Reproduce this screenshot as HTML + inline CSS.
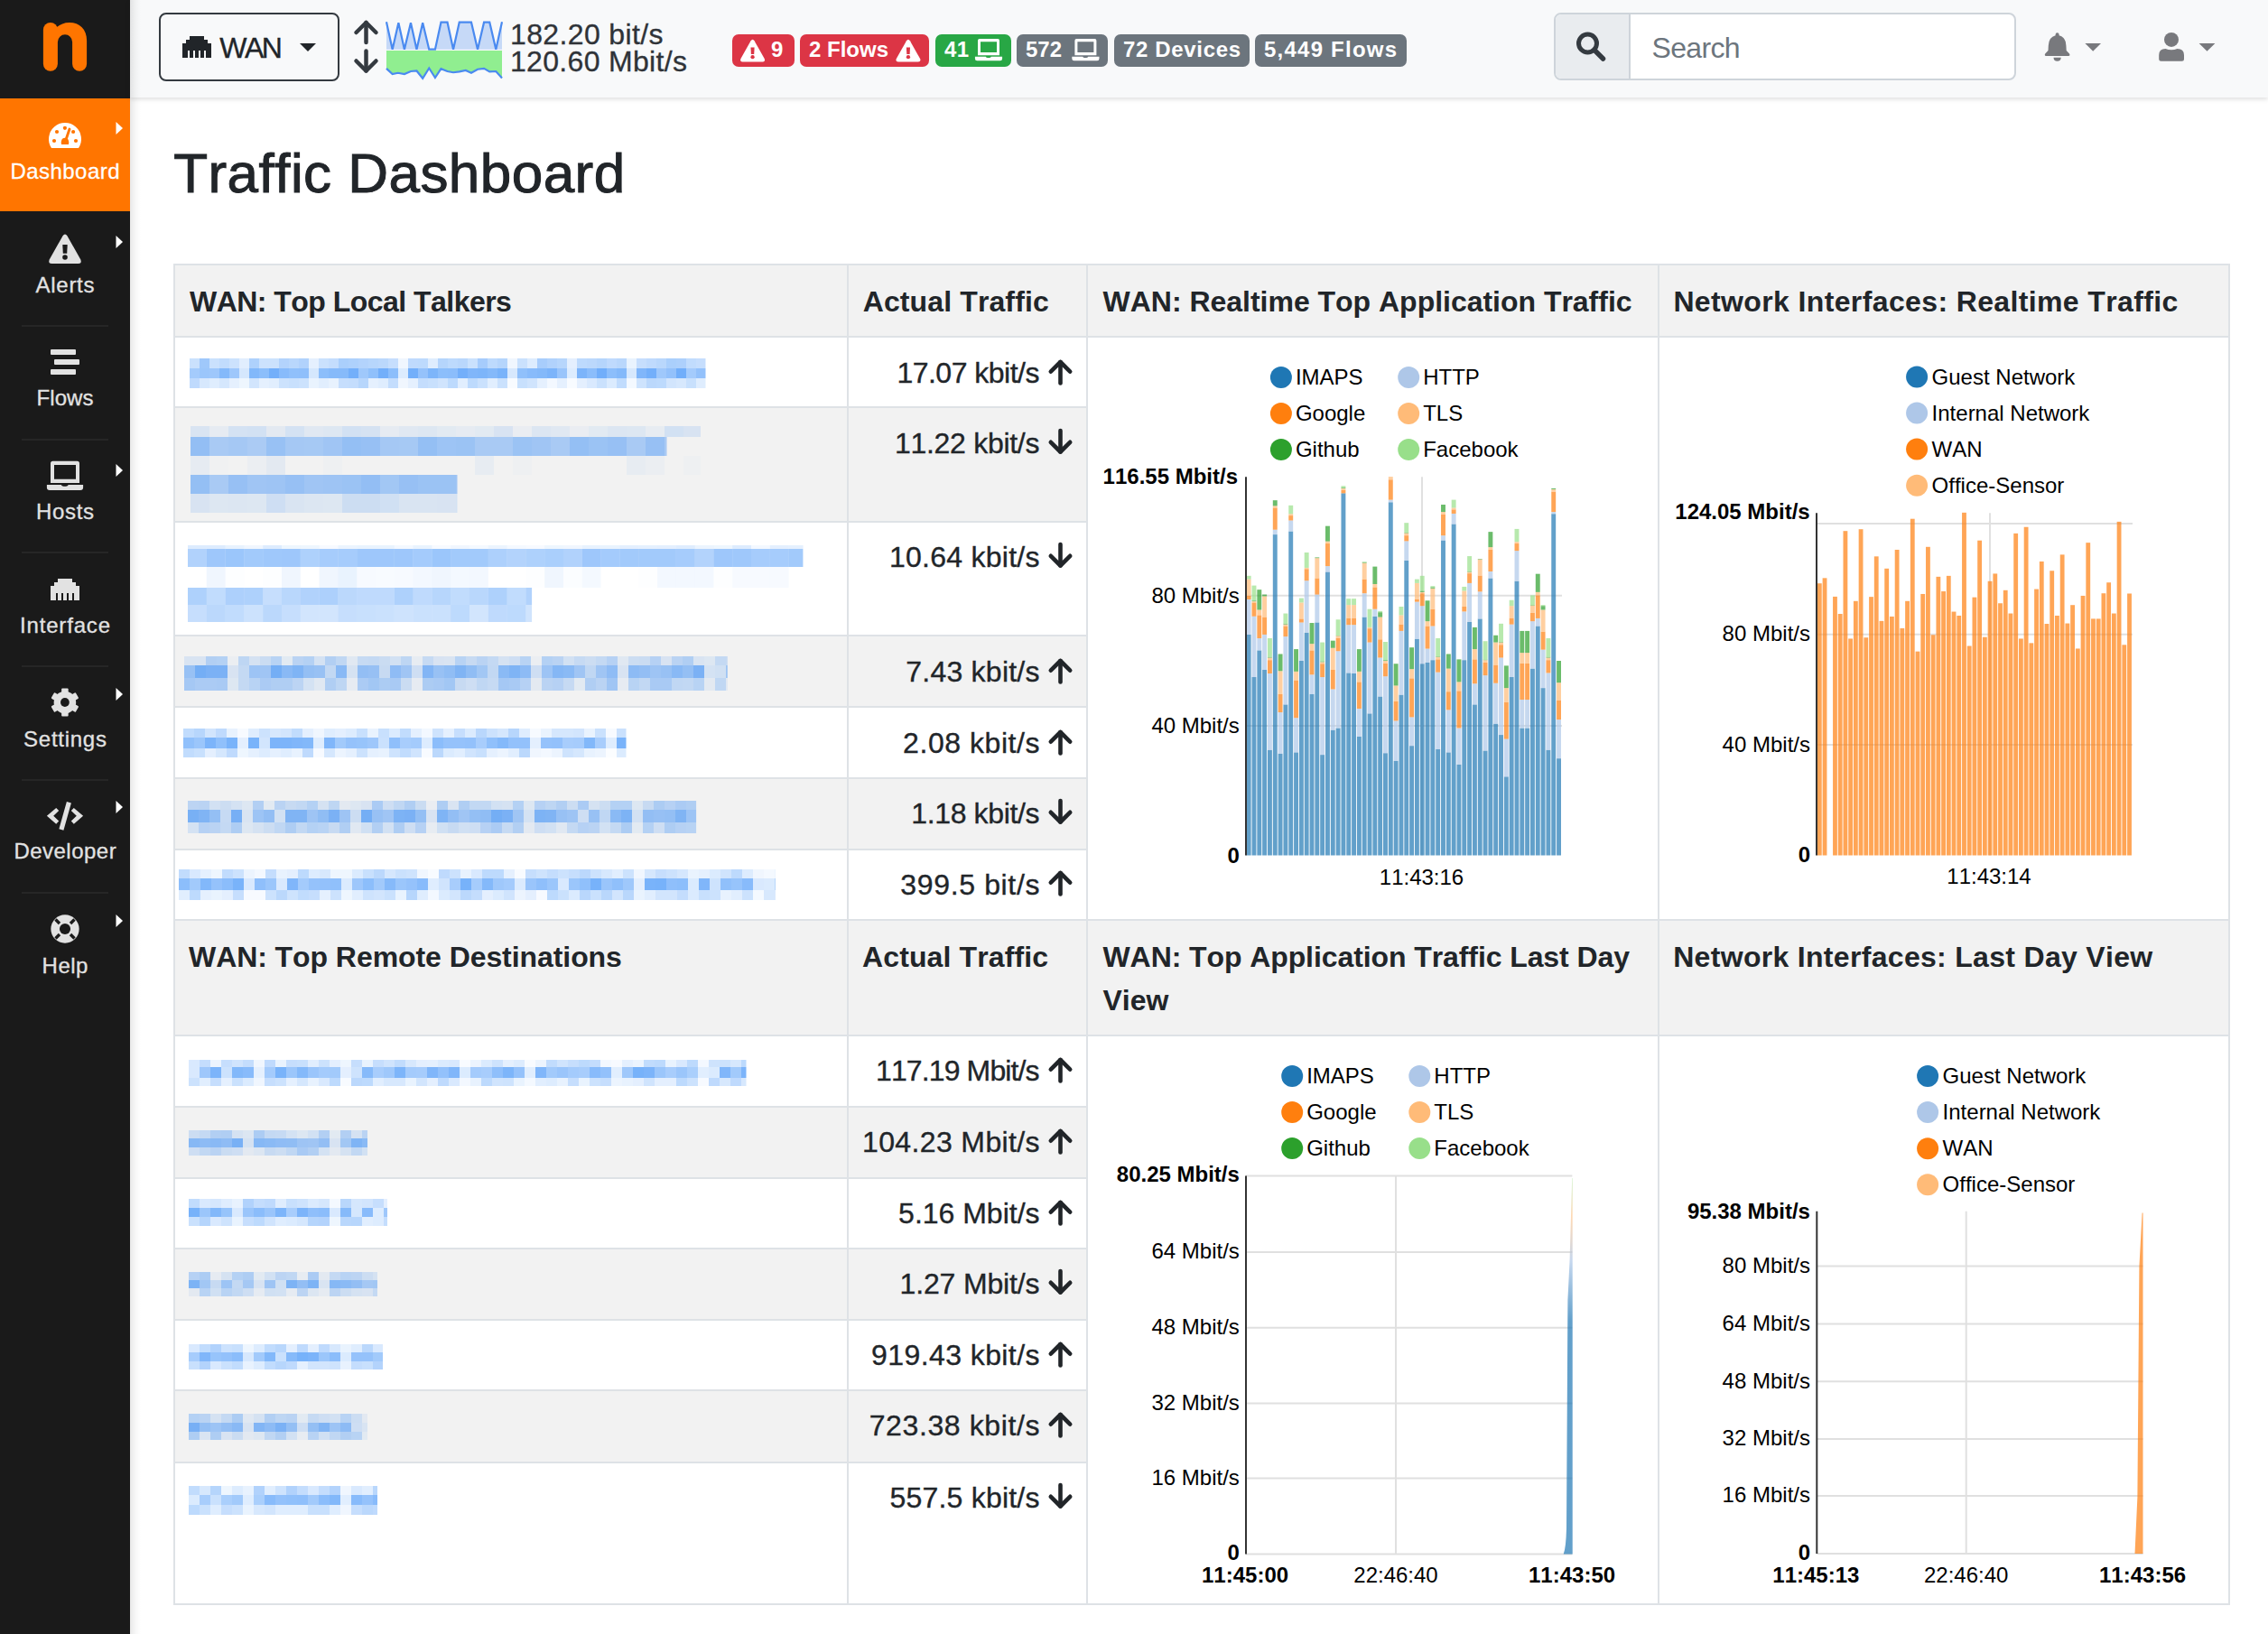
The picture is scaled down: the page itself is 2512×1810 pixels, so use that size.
<!DOCTYPE html><html><head><meta charset="utf-8"><title>Traffic Dashboard</title><style>html,body{margin:0;padding:0;width:2512px;height:1810px;overflow:hidden;background:#fff;}body{position:relative;font-family:"Liberation Sans",sans-serif;}.t{position:absolute;white-space:nowrap;font-kerning:none;}.r{position:absolute;box-sizing:content-box;}svg.r{overflow:visible;}</style></head><body>
<div class="r" style="left:0px;top:0px;width:144px;height:1810px;background:#1a1a1a;"></div>
<svg class="r" style="left:0;top:0" width="144" height="108" viewBox="0 0 144 108"><rect x="47.9" y="24.9" width="16" height="53.9" rx="8" fill="#ff7500"/><path d="M62.9 46.4 L63.9 46.4 A8 8 0 0 1 80.1 46.4 L80.1 70.8 A8 8 0 0 0 96.1 70.8 L96.1 45 C96.1 32 88 24.9 77 24.9 C71 24.9 66.5 27 63.3 29.8 L62.9 30 Z" fill="#ff7500"/></svg>
<div class="r" style="left:0px;top:109px;width:144px;height:125px;background:#ff7500;"></div>
<div class="t" style="left:11.5px;top:178.4px;font-size:24px;line-height:24px;color:#ffffff;letter-spacing:0.45px;-webkit-text-stroke:0.3px #ffffff">Dashboard</div>
<div class="t" style="left:39.5px;top:303.6px;font-size:24px;line-height:24px;color:#e2e2e2;letter-spacing:0.73px;-webkit-text-stroke:0.3px #e2e2e2">Alerts</div>
<div class="t" style="left:40.6px;top:429.3px;font-size:24px;line-height:24px;color:#e2e2e2;letter-spacing:0.03px;-webkit-text-stroke:0.3px #e2e2e2">Flows</div>
<div class="t" style="left:40.0px;top:554.6px;font-size:24px;line-height:24px;color:#e2e2e2;letter-spacing:0.66px;-webkit-text-stroke:0.3px #e2e2e2">Hosts</div>
<div class="t" style="left:22.0px;top:680.6px;font-size:24px;line-height:24px;color:#e2e2e2;letter-spacing:0.83px;-webkit-text-stroke:0.3px #e2e2e2">Interface</div>
<div class="t" style="left:26.1px;top:806.6px;font-size:24px;line-height:24px;color:#e2e2e2;letter-spacing:0.73px;-webkit-text-stroke:0.3px #e2e2e2">Settings</div>
<div class="t" style="left:15.4px;top:931.3px;font-size:24px;line-height:24px;color:#e2e2e2;letter-spacing:0.48px;-webkit-text-stroke:0.3px #e2e2e2">Developer</div>
<div class="t" style="left:46.6px;top:1058.2px;font-size:24px;line-height:24px;color:#e2e2e2;letter-spacing:0.48px;-webkit-text-stroke:0.3px #e2e2e2">Help</div>
<div class="r" style="left:24px;top:360px;width:96px;height:2px;background:#262626;"></div>
<div class="r" style="left:24px;top:486px;width:96px;height:2px;background:#262626;"></div>
<div class="r" style="left:24px;top:611px;width:96px;height:2px;background:#262626;"></div>
<div class="r" style="left:24px;top:737px;width:96px;height:2px;background:#262626;"></div>
<div class="r" style="left:24px;top:863px;width:96px;height:2px;background:#262626;"></div>
<div class="r" style="left:24px;top:988px;width:96px;height:2px;background:#262626;"></div>
<svg class="r" style="left:127.5px;top:133.9px" width="10" height="16" viewBox="0 0 10 16"><path d="M0.5 1 L8 8 L0.5 15 Z" fill="#ffffff"/></svg>
<svg class="r" style="left:127.5px;top:260px" width="10" height="16" viewBox="0 0 10 16"><path d="M0.5 1 L8 8 L0.5 15 Z" fill="#ffffff"/></svg>
<svg class="r" style="left:127.5px;top:512.5px" width="10" height="16" viewBox="0 0 10 16"><path d="M0.5 1 L8 8 L0.5 15 Z" fill="#ffffff"/></svg>
<svg class="r" style="left:127.5px;top:760.5px" width="10" height="16" viewBox="0 0 10 16"><path d="M0.5 1 L8 8 L0.5 15 Z" fill="#ffffff"/></svg>
<svg class="r" style="left:127.5px;top:886px" width="10" height="16" viewBox="0 0 10 16"><path d="M0.5 1 L8 8 L0.5 15 Z" fill="#ffffff"/></svg>
<svg class="r" style="left:127.5px;top:1011.5px" width="10" height="16" viewBox="0 0 10 16"><path d="M0.5 1 L8 8 L0.5 15 Z" fill="#ffffff"/></svg>
<svg class="r" style="left:0px;top:120px" width="144" height="60" viewBox="0 0 144 60"><path d="M57 44 A18 18 0 1 1 87 44 Z" fill="#fff"/><g fill="#ff7500"><circle cx="63" cy="26" r="2.1"/><circle cx="71.9" cy="21.8" r="2.1"/><circle cx="81.1" cy="26" r="2.1"/><circle cx="60" cy="36" r="2.1"/><circle cx="84" cy="36" r="2.1"/><line x1="72.6" y1="36" x2="77" y2="23" stroke="#ff7500" stroke-width="2.9" stroke-linecap="round"/><path d="M68 39.9 L76 39.9 Q76.6 37.5 76 36 A4.1 4.1 0 0 0 68 36 Q67.4 37.5 68 39.9 Z"/></g></svg>
<svg class="r" style="left:0px;top:250px" width="144" height="50" viewBox="0 0 144 50"><path d="M69.4 11.5 Q72 7.5 74.6 11.5 L89.3 37.5 Q91 42 86.5 42 L57.5 42 Q53 42 54.7 37.5 Z" fill="#e2e2e2"/><path d="M69.3 21.1 L74.7 21.1 L74.2 30.7 L69.8 30.7 Z" fill="#1a1a1a"/><circle cx="72" cy="35" r="2.8" fill="#1a1a1a"/></svg>
<svg class="r" style="left:0px;top:380px" width="144" height="40" viewBox="0 0 144 40"><g fill="#e2e2e2"><rect x="56" y="7" width="28" height="6" rx="1"/><rect x="60" y="18" width="28" height="6" rx="1"/><rect x="56" y="29" width="28" height="6" rx="1"/></g></svg>
<svg class="r" style="left:0px;top:505px" width="144" height="45" viewBox="0 0 144 45"><path fill-rule="evenodd" fill="#e2e2e2" d="M58.5 5.8 L85.5 5.8 Q88 5.8 88 8.3 L88 29.9 L56 29.9 L56 8.3 Q56 5.8 58.5 5.8 Z M60 10 L60 25.8 L84 25.8 L84 10 Z"/><path fill="#e2e2e2" d="M51.9 31.9 L67.7 31.9 Q68.5 33.7 70.5 33.7 L73 33.7 Q75 33.7 75.8 31.9 L92.1 31.9 L92.1 35 Q92.1 38 89 38 L55 38 Q51.9 38 51.9 35 Z"/></svg>
<svg class="r" style="left:0px;top:630px" width="144" height="45" viewBox="0 0 144 45"><path d="M64.00 11.00 L80.00 11.00 L80.00 15.00 L84.00 15.00 L84.00 19.00 L88.00 19.00 L88.00 35.00 L82.00 35.00 L82.00 27.00 L80.00 27.00 L80.00 35.00 L76.00 35.00 L76.00 27.00 L74.00 27.00 L74.00 35.00 L70.00 35.00 L70.00 27.00 L68.00 27.00 L68.00 35.00 L64.00 35.00 L64.00 27.00 L62.00 27.00 L62.00 35.00 L56.00 35.00 L56.00 19.00 L60.00 19.00 L60.00 15.00 L64.00 15.00 Z" fill="#e2e2e2"/></svg>
<svg class="r" style="left:0px;top:750px" width="144" height="50" viewBox="0 0 144 50"><circle cx="71.9" cy="28" r="12.3" fill="#e2e2e2"/><rect x="68.15" y="12.4" width="7.5" height="15.6" rx="1" fill="#e2e2e2" transform="rotate(0 71.9 28)"/><rect x="68.15" y="12.4" width="7.5" height="15.6" rx="1" fill="#e2e2e2" transform="rotate(60 71.9 28)"/><rect x="68.15" y="12.4" width="7.5" height="15.6" rx="1" fill="#e2e2e2" transform="rotate(120 71.9 28)"/><rect x="68.15" y="12.4" width="7.5" height="15.6" rx="1" fill="#e2e2e2" transform="rotate(180 71.9 28)"/><rect x="68.15" y="12.4" width="7.5" height="15.6" rx="1" fill="#e2e2e2" transform="rotate(240 71.9 28)"/><rect x="68.15" y="12.4" width="7.5" height="15.6" rx="1" fill="#e2e2e2" transform="rotate(300 71.9 28)"/><circle cx="71.9" cy="28" r="4.9" fill="#1a1a1a"/></svg>
<svg class="r" style="left:0px;top:880px" width="144" height="45" viewBox="0 0 144 45"><g fill="#e2e2e2"><path d="M62.2 15 L65.2 18 L59.2 23.8 L65.2 29.6 L62.2 32.8 L51.9 23.8 Z"/><path d="M81.8 15 L78.8 18 L84.8 23.8 L78.8 29.6 L81.8 32.8 L92.1 23.8 Z"/><path d="M73.9 8 L78.9 9.4 L70.4 39.7 L65.4 38.3 Z"/></g></svg>
<svg class="r" style="left:0px;top:1005px" width="144" height="45" viewBox="0 0 144 45"><circle cx="72" cy="24" r="15.65" fill="#e2e2e2"/><circle cx="72" cy="24" r="6.06" fill="#1a1a1a"/><g stroke="#1a1a1a" stroke-width="3.4"><line x1="61.5" y1="13.5" x2="66" y2="18"/><line x1="82.5" y1="13.5" x2="78" y2="18"/><line x1="61.5" y1="34.5" x2="66" y2="30"/><line x1="82.5" y1="34.5" x2="78" y2="30"/></g></svg>
<div class="r" style="left:144px;top:0px;width:2368px;height:108px;background:#f8f9fa;box-shadow:0 2px 5px rgba(0,0,0,0.13)"></div>
<div class="r" style="left:144px;top:0px;width:12px;height:1810px;background:linear-gradient(90deg,rgba(0,0,0,0.09),rgba(0,0,0,0.03) 50%,rgba(0,0,0,0));"></div>
<div class="r" style="left:176px;top:14px;width:196px;height:72px;border:2px solid #343a40;border-radius:8px"></div>
<svg class="r" style="left:0px;top:0px" width="400" height="108" viewBox="0 0 400 108"><path d="M210.00 40.00 L226.00 40.00 L226.00 44.00 L230.00 44.00 L230.00 48.00 L234.00 48.00 L234.00 64.00 L228.00 64.00 L228.00 56.00 L226.00 56.00 L226.00 64.00 L222.00 64.00 L222.00 56.00 L220.00 56.00 L220.00 64.00 L216.00 64.00 L216.00 56.00 L214.00 56.00 L214.00 64.00 L210.00 64.00 L210.00 56.00 L208.00 56.00 L208.00 64.00 L202.00 64.00 L202.00 48.00 L206.00 48.00 L206.00 44.00 L210.00 44.00 Z" fill="#212529"/></svg>
<div class="t" style="left:243.2px;top:37.0px;font-size:32px;line-height:32px;color:#212529;letter-spacing:-2.43px;-webkit-text-stroke:0.35px #212529">WAN</div>
<svg class="r" style="left:0px;top:0px" width="400" height="108" viewBox="0 0 400 108"><path d="M332 48 L350 48 L341 57 Z" fill="#212529"/></svg>
<svg class="r" style="left:380px;top:0px" width="60" height="108" viewBox="0 0 60 108"><g stroke="#343a40" stroke-width="4.5" fill="none" stroke-linecap="round" stroke-linejoin="round"><path d="M25.5 25 L25.5 47"/><path d="M14.5 36 L25.5 25 L36.5 36"/><path d="M25.5 56.5 L25.5 78.5"/><path d="M14.5 67.5 L25.5 78.5 L36.5 67.5"/></g></svg>
<svg class="r" style="left:380px;top:0px" width="180" height="108" viewBox="0 0 180 108"><polygon points="47.97,24.16 54.67,54.67 61.38,25.22 67.90,54.67 74.96,25.22 81.48,54.67 88.18,25.22 95.24,54.67 101.94,54.67 108.47,24.69 115.52,24.69 122.05,54.67 128.75,24.69 141.98,24.69 149.03,54.67 156.08,24.69 162.26,24.69 169.31,54.67 176.01,24.16 176.01,54.67 47.97,54.67" fill="#c6d9f7"/><polyline points="47.97,24.16 54.67,54.67 61.38,25.22 67.90,54.67 74.96,25.22 81.48,54.67 88.18,25.22 95.24,54.67 101.94,54.67 108.47,24.69 115.52,24.69 122.05,54.67 128.75,24.69 141.98,24.69 149.03,54.67 156.08,24.69 162.26,24.69 169.31,54.67 176.01,24.16" fill="none" stroke="#4a8af0" stroke-width="2.2"/><polygon points="47.97,56.08 176.01,56.08 176.01,86.42 169.31,79.01 162.26,79.37 156.08,75.84 149.03,76.72 141.98,80.78 135.80,77.95 128.75,79.37 122.05,80.25 115.52,79.01 108.47,76.19 101.94,86.07 95.24,75.49 88.18,86.77 81.48,78.48 74.96,79.01 67.90,82.01 60.85,80.78 54.67,82.01 47.97,75.84" fill="#90ee90"/><polyline points="47.97,75.84 54.67,82.01 60.85,80.78 67.90,82.01 74.96,79.01 81.48,78.48 88.18,86.77 95.24,75.49 101.94,86.07 108.47,76.19 115.52,79.01 122.05,80.25 128.75,79.37 135.80,77.95 141.98,80.78 149.03,76.72 156.08,75.84 162.26,79.37 169.31,79.01 176.01,86.42" fill="none" stroke="#4a8af0" stroke-width="2.2"/></svg>
<div class="t" style="left:565.0px;top:21.7px;font-size:32px;line-height:32px;color:#2f3338;letter-spacing:0.37px;-webkit-text-stroke:0.3px #2f3338">182.20 bit/s</div>
<div class="t" style="left:565.0px;top:51.6px;font-size:32px;line-height:32px;color:#2f3338;letter-spacing:0.32px;-webkit-text-stroke:0.3px #2f3338">120.60 Mbit/s</div>
<div class="r" style="left:811px;top:38px;width:69px;height:36px;background:#dc3545;border-radius:7px"></div>
<div class="r" style="left:886px;top:38px;width:143px;height:36px;background:#dc3545;border-radius:7px"></div>
<div class="r" style="left:1036px;top:38px;width:84px;height:36px;background:#28a745;border-radius:7px"></div>
<div class="r" style="left:1126px;top:38px;width:101px;height:36px;background:#6c757d;border-radius:7px"></div>
<div class="r" style="left:1234px;top:38px;width:150px;height:36px;background:#6c757d;border-radius:7px"></div>
<div class="r" style="left:1390px;top:38px;width:168px;height:36px;background:#6c757d;border-radius:7px"></div>
<svg class="r" style="left:0px;top:0px" width="1600" height="108" viewBox="0 0 1600 108"><g transform="translate(819.8 43.8) scale(0.76) translate(-53.9 -9.5)"><g fill="#fff"><path d="M69.4 11.5 Q72 7.5 74.6 11.5 L89.3 37.5 Q91 42 86.5 42 L57.5 42 Q53 42 54.7 37.5 Z"/></g><path d="M69.3 21.1 L74.7 21.1 L74.2 30.7 L69.8 30.7 Z" fill="#dc3545"/><circle cx="72" cy="35" r="2.8" fill="#dc3545"/></g><g transform="translate(992.2 43.8) scale(0.76) translate(-53.9 -9.5)"><g fill="#fff"><path d="M69.4 11.5 Q72 7.5 74.6 11.5 L89.3 37.5 Q91 42 86.5 42 L57.5 42 Q53 42 54.7 37.5 Z"/></g><path d="M69.3 21.1 L74.7 21.1 L74.2 30.7 L69.8 30.7 Z" fill="#dc3545"/><circle cx="72" cy="35" r="2.8" fill="#dc3545"/></g><g fill="#fff" transform="translate(1083 43.1) scale(0.75) translate(-56 -5.8)"><path fill-rule="evenodd" d="M58.5 5.8 L85.5 5.8 Q88 5.8 88 8.3 L88 29.9 L56 29.9 L56 8.3 Q56 5.8 58.5 5.8 Z M60 10 L60 25.8 L84 25.8 L84 10 Z"/><path d="M51.9 31.9 L67.7 31.9 Q68.5 33.7 70.5 33.7 L73 33.7 Q75 33.7 75.8 31.9 L92.1 31.9 L92.1 35 Q92.1 38 89 38 L55 38 Q51.9 38 51.9 35 Z"/></g><g fill="#fff" transform="translate(1190.4 43.1) scale(0.75) translate(-56 -5.8)"><path fill-rule="evenodd" d="M58.5 5.8 L85.5 5.8 Q88 5.8 88 8.3 L88 29.9 L56 29.9 L56 8.3 Q56 5.8 58.5 5.8 Z M60 10 L60 25.8 L84 25.8 L84 10 Z"/><path d="M51.9 31.9 L67.7 31.9 Q68.5 33.7 70.5 33.7 L73 33.7 Q75 33.7 75.8 31.9 L92.1 31.9 L92.1 35 Q92.1 38 89 38 L55 38 Q51.9 38 51.9 35 Z"/></g></svg>
<div class="t" style="left:854.0px;top:42.8px;font-size:24px;line-height:24px;color:#fff;font-weight:bold">9</div>
<div class="t" style="left:896.0px;top:42.8px;font-size:24px;line-height:24px;color:#fff;font-weight:bold">2 Flows</div>
<div class="t" style="left:1046.0px;top:42.8px;font-size:24px;line-height:24px;color:#fff;font-weight:bold;letter-spacing:0.30px">41</div>
<div class="t" style="left:1136.0px;top:42.8px;font-size:24px;line-height:24px;color:#fff;font-weight:bold;letter-spacing:-0.02px">572</div>
<div class="t" style="left:1244.0px;top:42.8px;font-size:24px;line-height:24px;color:#fff;font-weight:bold;letter-spacing:0.66px">72 Devices</div>
<div class="t" style="left:1400.0px;top:42.8px;font-size:24px;line-height:24px;color:#fff;font-weight:bold;letter-spacing:1.23px">5,449 Flows</div>
<div class="r" style="left:1721px;top:14px;width:508px;height:71px;border:2px solid #ced4da;border-radius:8px;background:#fff;overflow:hidden"><div class="r" style="left:0;top:0;width:81px;height:71px;background:#e9ecef;border-right:2px solid #ced4da"></div></div>
<svg class="r" style="left:1741px;top:32px" width="45" height="45" viewBox="0 0 45 45"><circle cx="17.5" cy="16" r="10" fill="none" stroke="#343a40" stroke-width="5"/><path d="M25 23.5 L34.5 33" stroke="#343a40" stroke-width="5.5" stroke-linecap="round"/></svg>
<div class="t" style="left:1829.6px;top:37.2px;font-size:32px;line-height:32px;color:#6c757d;letter-spacing:-0.68px">Search</div>
<svg class="r" style="left:2250px;top:25px" width="50" height="50" viewBox="0 0 50 50"><path d="M26.6 13.2 Q26.6 11.2 28.6 11.2 Q30.6 11.2 30.6 13.2 L30.6 14.2 Q38 16 38.4 25.5 L38.7 31 L42 34.6 Q43.2 36.9 41 36.9 L16.2 36.9 Q14 36.9 15.2 34.6 L18.5 31 L18.8 25.5 Q19.2 16 26.6 14.2 Z" fill="#78797d"/><path d="M24.5 38.8 L32.7 38.8 Q32.7 42.7 28.6 42.7 Q24.5 42.7 24.5 38.8 Z" fill="#78797d"/></svg>
<svg class="r" style="left:2300px;top:40px" width="35" height="25" viewBox="0 0 35 25"><path d="M9.4 8 L27 8 L18.2 16.8 Z" fill="#78797d"/></svg>
<svg class="r" style="left:2380px;top:25px" width="50" height="50" viewBox="0 0 50 50"><circle cx="25" cy="18.9" r="8" fill="#78797d"/><path d="M11.2 42.7 L11.2 36 Q11.2 28.9 18.5 28.9 Q21.5 30.2 25 30.2 Q28.5 30.2 31.5 28.9 Q39 28.9 39 36 L39 40.2 Q39 42.7 36.5 42.7 L13.7 42.7 Q11.2 42.7 11.2 40.2 Z" fill="#78797d"/></svg>
<svg class="r" style="left:2427px;top:40px" width="35" height="25" viewBox="0 0 35 25"><path d="M8.6 8 L26.4 8 L17.5 16.8 Z" fill="#78797d"/></svg>
<div class="t" style="left:192.2px;top:161.3px;font-size:62px;line-height:62px;color:#212529;letter-spacing:0.45px;-webkit-text-stroke:1px #212529">Traffic Dashboard</div>
<div class="r" style="left:192px;top:292px;width:2278px;height:80px;background:#f2f2f2;"></div>
<div class="r" style="left:192px;top:1018px;width:2278px;height:128px;background:#f2f2f2;"></div>
<div class="r" style="left:192px;top:450px;width:1011px;height:127px;background:#f2f2f2;"></div>
<div class="r" style="left:192px;top:703px;width:1011px;height:79px;background:#f2f2f2;"></div>
<div class="r" style="left:192px;top:861px;width:1011px;height:79px;background:#f2f2f2;"></div>
<div class="r" style="left:192px;top:1225px;width:1011px;height:79px;background:#f2f2f2;"></div>
<div class="r" style="left:192px;top:1382px;width:1011px;height:79px;background:#f2f2f2;"></div>
<div class="r" style="left:192px;top:1539px;width:1011px;height:80px;background:#f2f2f2;"></div>
<div class="r" style="left:192px;top:292px;width:2278px;height:2px;background:#dee2e6;"></div>
<div class="r" style="left:192px;top:372px;width:2278px;height:2px;background:#dee2e6;"></div>
<div class="r" style="left:192px;top:450px;width:1013px;height:2px;background:#dee2e6;"></div>
<div class="r" style="left:192px;top:577px;width:1013px;height:2px;background:#dee2e6;"></div>
<div class="r" style="left:192px;top:703px;width:1013px;height:2px;background:#dee2e6;"></div>
<div class="r" style="left:192px;top:782px;width:1013px;height:2px;background:#dee2e6;"></div>
<div class="r" style="left:192px;top:861px;width:1013px;height:2px;background:#dee2e6;"></div>
<div class="r" style="left:192px;top:940px;width:1013px;height:2px;background:#dee2e6;"></div>
<div class="r" style="left:192px;top:1018px;width:2278px;height:2px;background:#dee2e6;"></div>
<div class="r" style="left:192px;top:1146px;width:2278px;height:2px;background:#dee2e6;"></div>
<div class="r" style="left:192px;top:1225px;width:1013px;height:2px;background:#dee2e6;"></div>
<div class="r" style="left:192px;top:1304px;width:1013px;height:2px;background:#dee2e6;"></div>
<div class="r" style="left:192px;top:1382px;width:1013px;height:2px;background:#dee2e6;"></div>
<div class="r" style="left:192px;top:1461px;width:1013px;height:2px;background:#dee2e6;"></div>
<div class="r" style="left:192px;top:1539px;width:1013px;height:2px;background:#dee2e6;"></div>
<div class="r" style="left:192px;top:1619px;width:1013px;height:2px;background:#dee2e6;"></div>
<div class="r" style="left:192px;top:1776px;width:2278px;height:2px;background:#dee2e6;"></div>
<div class="r" style="left:192px;top:292px;width:2px;height:1486px;background:#dee2e6;"></div>
<div class="r" style="left:938px;top:292px;width:2px;height:1486px;background:#dee2e6;"></div>
<div class="r" style="left:1203px;top:292px;width:2px;height:1486px;background:#dee2e6;"></div>
<div class="r" style="left:1836px;top:292px;width:2px;height:1486px;background:#dee2e6;"></div>
<div class="r" style="left:2468px;top:292px;width:2px;height:1486px;background:#dee2e6;"></div>
<div class="t" style="left:210.0px;top:318.1px;font-size:32px;line-height:32px;color:#212529;font-weight:bold;letter-spacing:-0.53px">WAN: Top Local Talkers</div>
<div class="t" style="left:955.7px;top:317.6px;font-size:32px;line-height:32px;color:#212529;font-weight:bold;letter-spacing:0.12px">Actual Traffic</div>
<div class="t" style="left:1221.6px;top:317.8px;font-size:32px;line-height:32px;color:#212529;font-weight:bold;letter-spacing:-0.02px">WAN: Realtime Top Application Traffic</div>
<div class="t" style="left:1853.4px;top:317.8px;font-size:32px;line-height:32px;color:#212529;font-weight:bold;letter-spacing:0.37px">Network Interfaces: Realtime Traffic</div>
<div class="t" style="left:209.0px;top:1044.4px;font-size:32px;line-height:32px;color:#212529;font-weight:bold;letter-spacing:-0.07px">WAN: Top Remote Destinations</div>
<div class="t" style="left:955.0px;top:1044.4px;font-size:32px;line-height:32px;color:#212529;font-weight:bold;letter-spacing:0.12px">Actual Traffic</div>
<div class="t" style="left:1221.5px;top:1043.8px;font-size:32px;line-height:32px;color:#212529;font-weight:bold;letter-spacing:-0.09px">WAN: Top Application Traffic Last Day</div>
<div class="t" style="left:1221.5px;top:1091.7px;font-size:32px;line-height:32px;color:#212529;font-weight:bold">View</div>
<div class="t" style="left:1853.2px;top:1044.0px;font-size:32px;line-height:32px;color:#212529;font-weight:bold;letter-spacing:0.31px">Network Interfaces: Last Day View</div>
<div class="t" style="left:993.4px;top:397.0px;font-size:32px;line-height:32px;color:#212529;letter-spacing:-0.51px;-webkit-text-stroke:0.35px #212529">17.07 kbit/s</div>
<svg class="r" style="left:1161px;top:397.7px" width="27" height="29" viewBox="0 0 27 29"><g stroke="#212529" stroke-width="4.6" fill="none" stroke-linecap="round" stroke-linejoin="round"><path d="M13.5 3 L13.5 26.5"/><path d="M2.8 13.7 L13.5 3 L24.2 13.7"/></g></svg>
<div class="t" style="left:990.9px;top:474.8px;font-size:32px;line-height:32px;color:#212529;letter-spacing:-0.28px;-webkit-text-stroke:0.35px #212529">11.22 kbit/s</div>
<svg class="r" style="left:1161px;top:475.5px" width="27" height="29" viewBox="0 0 27 29"><g stroke="#212529" stroke-width="4.6" fill="none" stroke-linecap="round" stroke-linejoin="round"><path d="M13.5 1 L13.5 24.5"/><path d="M2.8 13.8 L13.5 24.5 L24.2 13.8"/></g></svg>
<div class="t" style="left:985.0px;top:601.3px;font-size:32px;line-height:32px;color:#212529;letter-spacing:0.26px;-webkit-text-stroke:0.35px #212529">10.64 kbit/s</div>
<svg class="r" style="left:1161px;top:602px" width="27" height="29" viewBox="0 0 27 29"><g stroke="#212529" stroke-width="4.6" fill="none" stroke-linecap="round" stroke-linejoin="round"><path d="M13.5 1 L13.5 24.5"/><path d="M2.8 13.8 L13.5 24.5 L24.2 13.8"/></g></svg>
<div class="t" style="left:1003.3px;top:728.0px;font-size:32px;line-height:32px;color:#212529;letter-spacing:0.23px;-webkit-text-stroke:0.35px #212529">7.43 kbit/s</div>
<svg class="r" style="left:1161px;top:728.7px" width="27" height="29" viewBox="0 0 27 29"><g stroke="#212529" stroke-width="4.6" fill="none" stroke-linecap="round" stroke-linejoin="round"><path d="M13.5 3 L13.5 26.5"/><path d="M2.8 13.7 L13.5 3 L24.2 13.7"/></g></svg>
<div class="t" style="left:1000.1px;top:807.0px;font-size:32px;line-height:32px;color:#212529;letter-spacing:0.55px;-webkit-text-stroke:0.35px #212529">2.08 kbit/s</div>
<svg class="r" style="left:1161px;top:807.7px" width="27" height="29" viewBox="0 0 27 29"><g stroke="#212529" stroke-width="4.6" fill="none" stroke-linecap="round" stroke-linejoin="round"><path d="M13.5 3 L13.5 26.5"/><path d="M2.8 13.7 L13.5 3 L24.2 13.7"/></g></svg>
<div class="t" style="left:1009.3px;top:885.2px;font-size:32px;line-height:32px;color:#212529;letter-spacing:-0.37px;-webkit-text-stroke:0.35px #212529">1.18 kbit/s</div>
<svg class="r" style="left:1161px;top:885.9px" width="27" height="29" viewBox="0 0 27 29"><g stroke="#212529" stroke-width="4.6" fill="none" stroke-linecap="round" stroke-linejoin="round"><path d="M13.5 1 L13.5 24.5"/><path d="M2.8 13.8 L13.5 24.5 L24.2 13.8"/></g></svg>
<div class="t" style="left:997.3px;top:963.6px;font-size:32px;line-height:32px;color:#212529;letter-spacing:0.65px;-webkit-text-stroke:0.35px #212529">399.5 bit/s</div>
<svg class="r" style="left:1161px;top:964.3px" width="27" height="29" viewBox="0 0 27 29"><g stroke="#212529" stroke-width="4.6" fill="none" stroke-linecap="round" stroke-linejoin="round"><path d="M13.5 3 L13.5 26.5"/><path d="M2.8 13.7 L13.5 3 L24.2 13.7"/></g></svg>
<div class="t" style="left:970.0px;top:1170.2px;font-size:32px;line-height:32px;color:#212529;letter-spacing:-0.88px;-webkit-text-stroke:0.35px #212529">117.19 Mbit/s</div>
<svg class="r" style="left:1161px;top:1170.9px" width="27" height="29" viewBox="0 0 27 29"><g stroke="#212529" stroke-width="4.6" fill="none" stroke-linecap="round" stroke-linejoin="round"><path d="M13.5 3 L13.5 26.5"/><path d="M2.8 13.7 L13.5 3 L24.2 13.7"/></g></svg>
<div class="t" style="left:955.0px;top:1249.3px;font-size:32px;line-height:32px;color:#212529;letter-spacing:0.37px;-webkit-text-stroke:0.35px #212529">104.23 Mbit/s</div>
<svg class="r" style="left:1161px;top:1250px" width="27" height="29" viewBox="0 0 27 29"><g stroke="#212529" stroke-width="4.6" fill="none" stroke-linecap="round" stroke-linejoin="round"><path d="M13.5 3 L13.5 26.5"/><path d="M2.8 13.7 L13.5 3 L24.2 13.7"/></g></svg>
<div class="t" style="left:995.1px;top:1328.3px;font-size:32px;line-height:32px;color:#212529;letter-spacing:-0.01px;-webkit-text-stroke:0.35px #212529">5.16 Mbit/s</div>
<svg class="r" style="left:1161px;top:1329px" width="27" height="29" viewBox="0 0 27 29"><g stroke="#212529" stroke-width="4.6" fill="none" stroke-linecap="round" stroke-linejoin="round"><path d="M13.5 3 L13.5 26.5"/><path d="M2.8 13.7 L13.5 3 L24.2 13.7"/></g></svg>
<div class="t" style="left:996.5px;top:1406.3px;font-size:32px;line-height:32px;color:#212529;letter-spacing:-0.15px;-webkit-text-stroke:0.35px #212529">1.27 Mbit/s</div>
<svg class="r" style="left:1161px;top:1407px" width="27" height="29" viewBox="0 0 27 29"><g stroke="#212529" stroke-width="4.6" fill="none" stroke-linecap="round" stroke-linejoin="round"><path d="M13.5 1 L13.5 24.5"/><path d="M2.8 13.8 L13.5 24.5 L24.2 13.8"/></g></svg>
<div class="t" style="left:965.1px;top:1485.3px;font-size:32px;line-height:32px;color:#212529;letter-spacing:0.41px;-webkit-text-stroke:0.35px #212529">919.43 kbit/s</div>
<svg class="r" style="left:1161px;top:1486px" width="27" height="29" viewBox="0 0 27 29"><g stroke="#212529" stroke-width="4.6" fill="none" stroke-linecap="round" stroke-linejoin="round"><path d="M13.5 3 L13.5 26.5"/><path d="M2.8 13.7 L13.5 3 L24.2 13.7"/></g></svg>
<div class="t" style="left:962.7px;top:1563.3px;font-size:32px;line-height:32px;color:#212529;letter-spacing:0.61px;-webkit-text-stroke:0.35px #212529">723.38 kbit/s</div>
<svg class="r" style="left:1161px;top:1564px" width="27" height="29" viewBox="0 0 27 29"><g stroke="#212529" stroke-width="4.6" fill="none" stroke-linecap="round" stroke-linejoin="round"><path d="M13.5 3 L13.5 26.5"/><path d="M2.8 13.7 L13.5 3 L24.2 13.7"/></g></svg>
<div class="t" style="left:985.4px;top:1643.3px;font-size:32px;line-height:32px;color:#212529;letter-spacing:0.22px;-webkit-text-stroke:0.35px #212529">557.5 kbit/s</div>
<svg class="r" style="left:1161px;top:1644px" width="27" height="29" viewBox="0 0 27 29"><g stroke="#212529" stroke-width="4.6" fill="none" stroke-linecap="round" stroke-linejoin="round"><path d="M13.5 1 L13.5 24.5"/><path d="M2.8 13.8 L13.5 24.5 L24.2 13.8"/></g></svg>
<svg class="r" style="left:209.5px;top:397px" width="572.5" height="34"><g fill="#2b86f7"><rect x="0.0" y="0.0" width="11.0" height="11.0" fill-opacity="0.25"/><rect x="11.0" y="0.0" width="11.0" height="11.0" fill-opacity="0.45"/><rect x="22.0" y="0.0" width="11.0" height="11.0" fill-opacity="0.25"/><rect x="33.0" y="0.0" width="11.0" height="11.0" fill-opacity="0.29"/><rect x="44.0" y="0.0" width="11.0" height="11.0" fill-opacity="0.24"/><rect x="55.0" y="0.0" width="11.0" height="11.0" fill-opacity="0.14"/><rect x="66.0" y="0.0" width="11.0" height="11.0" fill-opacity="0.38"/><rect x="77.0" y="0.0" width="11.0" height="11.0" fill-opacity="0.24"/><rect x="88.0" y="0.0" width="11.0" height="11.0" fill-opacity="0.24"/><rect x="99.0" y="0.0" width="11.0" height="11.0" fill-opacity="0.36"/><rect x="110.0" y="0.0" width="11.0" height="11.0" fill-opacity="0.33"/><rect x="121.0" y="0.0" width="11.0" height="11.0" fill-opacity="0.37"/><rect x="132.0" y="0.0" width="11.0" height="11.0" fill-opacity="0.12"/><rect x="143.0" y="0.0" width="11.0" height="11.0" fill-opacity="0.25"/><rect x="154.0" y="0.0" width="11.0" height="11.0" fill-opacity="0.28"/><rect x="165.0" y="0.0" width="11.0" height="11.0" fill-opacity="0.40"/><rect x="176.0" y="0.0" width="11.0" height="11.0" fill-opacity="0.38"/><rect x="187.0" y="0.0" width="11.0" height="11.0" fill-opacity="0.36"/><rect x="198.0" y="0.0" width="11.0" height="11.0" fill-opacity="0.34"/><rect x="209.0" y="0.0" width="11.0" height="11.0" fill-opacity="0.32"/><rect x="220.0" y="0.0" width="11.0" height="11.0" fill-opacity="0.27"/><rect x="231.0" y="0.0" width="11.0" height="11.0" fill-opacity="0.07"/><rect x="242.0" y="0.0" width="11.0" height="11.0" fill-opacity="0.30"/><rect x="253.0" y="0.0" width="11.0" height="11.0" fill-opacity="0.31"/><rect x="264.0" y="0.0" width="11.0" height="11.0" fill-opacity="0.15"/><rect x="275.0" y="0.0" width="11.0" height="11.0" fill-opacity="0.35"/><rect x="286.0" y="0.0" width="11.0" height="11.0" fill-opacity="0.31"/><rect x="297.0" y="0.0" width="11.0" height="11.0" fill-opacity="0.33"/><rect x="308.0" y="0.0" width="11.0" height="11.0" fill-opacity="0.25"/><rect x="319.0" y="0.0" width="11.0" height="11.0" fill-opacity="0.42"/><rect x="330.0" y="0.0" width="11.0" height="11.0" fill-opacity="0.31"/><rect x="341.0" y="0.0" width="11.0" height="11.0" fill-opacity="0.35"/><rect x="352.0" y="0.0" width="11.0" height="11.0" fill-opacity="0.07"/><rect x="363.0" y="0.0" width="11.0" height="11.0" fill-opacity="0.25"/><rect x="374.0" y="0.0" width="11.0" height="11.0" fill-opacity="0.16"/><rect x="385.0" y="0.0" width="11.0" height="11.0" fill-opacity="0.41"/><rect x="396.0" y="0.0" width="11.0" height="11.0" fill-opacity="0.37"/><rect x="407.0" y="0.0" width="11.0" height="11.0" fill-opacity="0.34"/><rect x="418.0" y="0.0" width="11.0" height="11.0" fill-opacity="0.13"/><rect x="429.0" y="0.0" width="11.0" height="11.0" fill-opacity="0.31"/><rect x="440.0" y="0.0" width="11.0" height="11.0" fill-opacity="0.32"/><rect x="451.0" y="0.0" width="11.0" height="11.0" fill-opacity="0.35"/><rect x="462.0" y="0.0" width="11.0" height="11.0" fill-opacity="0.30"/><rect x="473.0" y="0.0" width="11.0" height="11.0" fill-opacity="0.33"/><rect x="484.0" y="0.0" width="11.0" height="11.0" fill-opacity="0.10"/><rect x="495.0" y="0.0" width="11.0" height="11.0" fill-opacity="0.27"/><rect x="506.0" y="0.0" width="11.0" height="11.0" fill-opacity="0.30"/><rect x="517.0" y="0.0" width="11.0" height="11.0" fill-opacity="0.33"/><rect x="528.0" y="0.0" width="11.0" height="11.0" fill-opacity="0.40"/><rect x="539.0" y="0.0" width="11.0" height="11.0" fill-opacity="0.39"/><rect x="550.0" y="0.0" width="11.0" height="11.0" fill-opacity="0.29"/><rect x="561.0" y="0.0" width="10.5" height="11.0" fill-opacity="0.27"/><rect x="0.0" y="11.0" width="11.0" height="11.0" fill-opacity="0.43"/><rect x="11.0" y="11.0" width="11.0" height="11.0" fill-opacity="0.47"/><rect x="22.0" y="11.0" width="11.0" height="11.0" fill-opacity="0.46"/><rect x="33.0" y="11.0" width="11.0" height="11.0" fill-opacity="0.58"/><rect x="44.0" y="11.0" width="11.0" height="11.0" fill-opacity="0.46"/><rect x="55.0" y="11.0" width="11.0" height="11.0" fill-opacity="0.20"/><rect x="66.0" y="11.0" width="11.0" height="11.0" fill-opacity="0.59"/><rect x="77.0" y="11.0" width="11.0" height="11.0" fill-opacity="0.54"/><rect x="88.0" y="11.0" width="11.0" height="11.0" fill-opacity="0.66"/><rect x="99.0" y="11.0" width="11.0" height="11.0" fill-opacity="0.56"/><rect x="110.0" y="11.0" width="11.0" height="11.0" fill-opacity="0.52"/><rect x="121.0" y="11.0" width="11.0" height="11.0" fill-opacity="0.53"/><rect x="132.0" y="11.0" width="11.0" height="11.0" fill-opacity="0.20"/><rect x="143.0" y="11.0" width="11.0" height="11.0" fill-opacity="0.54"/><rect x="154.0" y="11.0" width="11.0" height="11.0" fill-opacity="0.57"/><rect x="165.0" y="11.0" width="11.0" height="11.0" fill-opacity="0.57"/><rect x="176.0" y="11.0" width="11.0" height="11.0" fill-opacity="0.66"/><rect x="187.0" y="11.0" width="11.0" height="11.0" fill-opacity="0.45"/><rect x="198.0" y="11.0" width="11.0" height="11.0" fill-opacity="0.52"/><rect x="209.0" y="11.0" width="11.0" height="11.0" fill-opacity="0.66"/><rect x="220.0" y="11.0" width="11.0" height="11.0" fill-opacity="0.54"/><rect x="231.0" y="11.0" width="11.0" height="11.0" fill-opacity="0.16"/><rect x="242.0" y="11.0" width="11.0" height="11.0" fill-opacity="0.66"/><rect x="253.0" y="11.0" width="11.0" height="11.0" fill-opacity="0.50"/><rect x="264.0" y="11.0" width="11.0" height="11.0" fill-opacity="0.61"/><rect x="275.0" y="11.0" width="11.0" height="11.0" fill-opacity="0.54"/><rect x="286.0" y="11.0" width="11.0" height="11.0" fill-opacity="0.55"/><rect x="297.0" y="11.0" width="11.0" height="11.0" fill-opacity="0.66"/><rect x="308.0" y="11.0" width="11.0" height="11.0" fill-opacity="0.60"/><rect x="319.0" y="11.0" width="11.0" height="11.0" fill-opacity="0.61"/><rect x="330.0" y="11.0" width="11.0" height="11.0" fill-opacity="0.58"/><rect x="341.0" y="11.0" width="11.0" height="11.0" fill-opacity="0.63"/><rect x="352.0" y="11.0" width="11.0" height="11.0" fill-opacity="0.19"/><rect x="363.0" y="11.0" width="11.0" height="11.0" fill-opacity="0.52"/><rect x="374.0" y="11.0" width="11.0" height="11.0" fill-opacity="0.56"/><rect x="385.0" y="11.0" width="11.0" height="11.0" fill-opacity="0.58"/><rect x="396.0" y="11.0" width="11.0" height="11.0" fill-opacity="0.62"/><rect x="407.0" y="11.0" width="11.0" height="11.0" fill-opacity="0.48"/><rect x="418.0" y="11.0" width="11.0" height="11.0" fill-opacity="0.16"/><rect x="429.0" y="11.0" width="11.0" height="11.0" fill-opacity="0.62"/><rect x="440.0" y="11.0" width="11.0" height="11.0" fill-opacity="0.55"/><rect x="451.0" y="11.0" width="11.0" height="11.0" fill-opacity="0.67"/><rect x="462.0" y="11.0" width="11.0" height="11.0" fill-opacity="0.54"/><rect x="473.0" y="11.0" width="11.0" height="11.0" fill-opacity="0.58"/><rect x="484.0" y="11.0" width="11.0" height="11.0" fill-opacity="0.19"/><rect x="495.0" y="11.0" width="11.0" height="11.0" fill-opacity="0.60"/><rect x="506.0" y="11.0" width="11.0" height="11.0" fill-opacity="0.66"/><rect x="517.0" y="11.0" width="11.0" height="11.0" fill-opacity="0.45"/><rect x="528.0" y="11.0" width="11.0" height="11.0" fill-opacity="0.51"/><rect x="539.0" y="11.0" width="11.0" height="11.0" fill-opacity="0.67"/><rect x="550.0" y="11.0" width="11.0" height="11.0" fill-opacity="0.43"/><rect x="561.0" y="11.0" width="10.5" height="11.0" fill-opacity="0.51"/><rect x="0.0" y="22.0" width="11.0" height="11.0" fill-opacity="0.30"/><rect x="11.0" y="22.0" width="11.0" height="11.0" fill-opacity="0.19"/><rect x="22.0" y="22.0" width="11.0" height="11.0" fill-opacity="0.15"/><rect x="33.0" y="22.0" width="11.0" height="11.0" fill-opacity="0.20"/><rect x="44.0" y="22.0" width="11.0" height="11.0" fill-opacity="0.12"/><rect x="55.0" y="22.0" width="11.0" height="11.0" fill-opacity="0.08"/><rect x="66.0" y="22.0" width="11.0" height="11.0" fill-opacity="0.21"/><rect x="77.0" y="22.0" width="11.0" height="11.0" fill-opacity="0.12"/><rect x="88.0" y="22.0" width="11.0" height="11.0" fill-opacity="0.14"/><rect x="99.0" y="22.0" width="11.0" height="11.0" fill-opacity="0.24"/><rect x="110.0" y="22.0" width="11.0" height="11.0" fill-opacity="0.26"/><rect x="121.0" y="22.0" width="11.0" height="11.0" fill-opacity="0.24"/><rect x="132.0" y="22.0" width="11.0" height="11.0" fill-opacity="0.10"/><rect x="143.0" y="22.0" width="11.0" height="11.0" fill-opacity="0.14"/><rect x="154.0" y="22.0" width="11.0" height="11.0" fill-opacity="0.11"/><rect x="165.0" y="22.0" width="11.0" height="11.0" fill-opacity="0.27"/><rect x="176.0" y="22.0" width="11.0" height="11.0" fill-opacity="0.28"/><rect x="187.0" y="22.0" width="11.0" height="11.0" fill-opacity="0.34"/><rect x="198.0" y="22.0" width="11.0" height="11.0" fill-opacity="0.12"/><rect x="209.0" y="22.0" width="11.0" height="11.0" fill-opacity="0.15"/><rect x="220.0" y="22.0" width="11.0" height="11.0" fill-opacity="0.28"/><rect x="231.0" y="22.0" width="11.0" height="11.0" fill-opacity="0.07"/><rect x="242.0" y="22.0" width="11.0" height="11.0" fill-opacity="0.12"/><rect x="253.0" y="22.0" width="11.0" height="11.0" fill-opacity="0.28"/><rect x="264.0" y="22.0" width="11.0" height="11.0" fill-opacity="0.26"/><rect x="275.0" y="22.0" width="11.0" height="11.0" fill-opacity="0.22"/><rect x="286.0" y="22.0" width="11.0" height="11.0" fill-opacity="0.31"/><rect x="297.0" y="22.0" width="11.0" height="11.0" fill-opacity="0.14"/><rect x="308.0" y="22.0" width="11.0" height="11.0" fill-opacity="0.31"/><rect x="319.0" y="22.0" width="11.0" height="11.0" fill-opacity="0.25"/><rect x="330.0" y="22.0" width="11.0" height="11.0" fill-opacity="0.14"/><rect x="341.0" y="22.0" width="11.0" height="11.0" fill-opacity="0.25"/><rect x="352.0" y="22.0" width="11.0" height="11.0" fill-opacity="0.03"/><rect x="363.0" y="22.0" width="11.0" height="11.0" fill-opacity="0.26"/><rect x="374.0" y="22.0" width="11.0" height="11.0" fill-opacity="0.22"/><rect x="385.0" y="22.0" width="11.0" height="11.0" fill-opacity="0.12"/><rect x="396.0" y="22.0" width="11.0" height="11.0" fill-opacity="0.06"/><rect x="407.0" y="22.0" width="11.0" height="11.0" fill-opacity="0.12"/><rect x="418.0" y="22.0" width="11.0" height="11.0" fill-opacity="0.03"/><rect x="429.0" y="22.0" width="11.0" height="11.0" fill-opacity="0.13"/><rect x="440.0" y="22.0" width="11.0" height="11.0" fill-opacity="0.18"/><rect x="451.0" y="22.0" width="11.0" height="11.0" fill-opacity="0.25"/><rect x="462.0" y="22.0" width="11.0" height="11.0" fill-opacity="0.17"/><rect x="473.0" y="22.0" width="11.0" height="11.0" fill-opacity="0.29"/><rect x="484.0" y="22.0" width="11.0" height="11.0" fill-opacity="0.05"/><rect x="495.0" y="22.0" width="11.0" height="11.0" fill-opacity="0.23"/><rect x="506.0" y="22.0" width="11.0" height="11.0" fill-opacity="0.32"/><rect x="517.0" y="22.0" width="11.0" height="11.0" fill-opacity="0.31"/><rect x="528.0" y="22.0" width="11.0" height="11.0" fill-opacity="0.21"/><rect x="539.0" y="22.0" width="11.0" height="11.0" fill-opacity="0.19"/><rect x="550.0" y="22.0" width="11.0" height="11.0" fill-opacity="0.26"/><rect x="561.0" y="22.0" width="10.5" height="11.0" fill-opacity="0.15"/></g></svg>
<svg class="r" style="left:211px;top:472px" width="566" height="97"><g fill="#2b86f7"><rect x="0.0" y="0.0" width="21.0" height="12.0" fill-opacity="0.12"/><rect x="21.0" y="0.0" width="21.0" height="12.0" fill-opacity="0.06"/><rect x="42.0" y="0.0" width="21.0" height="12.0" fill-opacity="0.15"/><rect x="63.0" y="0.0" width="21.0" height="12.0" fill-opacity="0.16"/><rect x="84.0" y="0.0" width="21.0" height="12.0" fill-opacity="0.07"/><rect x="105.0" y="0.0" width="21.0" height="12.0" fill-opacity="0.15"/><rect x="126.0" y="0.0" width="21.0" height="12.0" fill-opacity="0.09"/><rect x="147.0" y="0.0" width="21.0" height="12.0" fill-opacity="0.10"/><rect x="168.0" y="0.0" width="21.0" height="12.0" fill-opacity="0.16"/><rect x="189.0" y="0.0" width="21.0" height="12.0" fill-opacity="0.14"/><rect x="210.0" y="0.0" width="21.0" height="12.0" fill-opacity="0.06"/><rect x="231.0" y="0.0" width="21.0" height="12.0" fill-opacity="0.09"/><rect x="252.0" y="0.0" width="21.0" height="12.0" fill-opacity="0.10"/><rect x="273.0" y="0.0" width="21.0" height="12.0" fill-opacity="0.08"/><rect x="294.0" y="0.0" width="21.0" height="12.0" fill-opacity="0.06"/><rect x="315.0" y="0.0" width="21.0" height="12.0" fill-opacity="0.08"/><rect x="336.0" y="0.0" width="21.0" height="12.0" fill-opacity="0.13"/><rect x="357.0" y="0.0" width="21.0" height="12.0" fill-opacity="0.04"/><rect x="378.0" y="0.0" width="21.0" height="12.0" fill-opacity="0.11"/><rect x="399.0" y="0.0" width="21.0" height="12.0" fill-opacity="0.09"/><rect x="420.0" y="0.0" width="21.0" height="12.0" fill-opacity="0.04"/><rect x="441.0" y="0.0" width="21.0" height="12.0" fill-opacity="0.08"/><rect x="462.0" y="0.0" width="21.0" height="12.0" fill-opacity="0.11"/><rect x="483.0" y="0.0" width="21.0" height="12.0" fill-opacity="0.10"/><rect x="504.0" y="0.0" width="21.0" height="12.0" fill-opacity="0.05"/><rect x="525.0" y="0.0" width="21.0" height="12.0" fill-opacity="0.16"/><rect x="546.0" y="0.0" width="19.0" height="12.0" fill-opacity="0.13"/><rect x="0.0" y="12.0" width="21.0" height="21.0" fill-opacity="0.48"/><rect x="21.0" y="12.0" width="21.0" height="21.0" fill-opacity="0.37"/><rect x="42.0" y="12.0" width="21.0" height="21.0" fill-opacity="0.39"/><rect x="63.0" y="12.0" width="21.0" height="21.0" fill-opacity="0.36"/><rect x="84.0" y="12.0" width="21.0" height="21.0" fill-opacity="0.45"/><rect x="105.0" y="12.0" width="21.0" height="21.0" fill-opacity="0.39"/><rect x="126.0" y="12.0" width="21.0" height="21.0" fill-opacity="0.38"/><rect x="147.0" y="12.0" width="21.0" height="21.0" fill-opacity="0.41"/><rect x="168.0" y="12.0" width="21.0" height="21.0" fill-opacity="0.47"/><rect x="189.0" y="12.0" width="21.0" height="21.0" fill-opacity="0.46"/><rect x="210.0" y="12.0" width="21.0" height="21.0" fill-opacity="0.39"/><rect x="231.0" y="12.0" width="21.0" height="21.0" fill-opacity="0.38"/><rect x="252.0" y="12.0" width="21.0" height="21.0" fill-opacity="0.47"/><rect x="273.0" y="12.0" width="21.0" height="21.0" fill-opacity="0.43"/><rect x="294.0" y="12.0" width="21.0" height="21.0" fill-opacity="0.44"/><rect x="315.0" y="12.0" width="21.0" height="21.0" fill-opacity="0.37"/><rect x="336.0" y="12.0" width="21.0" height="21.0" fill-opacity="0.37"/><rect x="357.0" y="12.0" width="21.0" height="21.0" fill-opacity="0.44"/><rect x="378.0" y="12.0" width="21.0" height="21.0" fill-opacity="0.41"/><rect x="399.0" y="12.0" width="21.0" height="21.0" fill-opacity="0.37"/><rect x="420.0" y="12.0" width="21.0" height="21.0" fill-opacity="0.47"/><rect x="441.0" y="12.0" width="21.0" height="21.0" fill-opacity="0.44"/><rect x="462.0" y="12.0" width="21.0" height="21.0" fill-opacity="0.46"/><rect x="483.0" y="12.0" width="21.0" height="21.0" fill-opacity="0.37"/><rect x="504.0" y="12.0" width="21.0" height="21.0" fill-opacity="0.46"/><rect x="525.0" y="12.0" width="2.5" height="21.0" fill-opacity="0.37"/><rect x="0.0" y="33.0" width="21.0" height="21.0" fill-opacity="0.06"/><rect x="21.0" y="33.0" width="21.0" height="21.0" fill-opacity="0.01"/><rect x="42.0" y="33.0" width="21.0" height="21.0" fill-opacity="0.00"/><rect x="63.0" y="33.0" width="21.0" height="21.0" fill-opacity="0.03"/><rect x="84.0" y="33.0" width="21.0" height="21.0" fill-opacity="0.07"/><rect x="105.0" y="33.0" width="21.0" height="21.0" fill-opacity="0.00"/><rect x="126.0" y="33.0" width="21.0" height="21.0" fill-opacity="0.00"/><rect x="147.0" y="33.0" width="21.0" height="21.0" fill-opacity="0.02"/><rect x="168.0" y="33.0" width="21.0" height="21.0" fill-opacity="0.00"/><rect x="189.0" y="33.0" width="21.0" height="21.0" fill-opacity="0.00"/><rect x="210.0" y="33.0" width="21.0" height="21.0" fill-opacity="0.00"/><rect x="231.0" y="33.0" width="21.0" height="21.0" fill-opacity="0.00"/><rect x="252.0" y="33.0" width="21.0" height="21.0" fill-opacity="0.00"/><rect x="273.0" y="33.0" width="21.0" height="21.0" fill-opacity="0.00"/><rect x="294.0" y="33.0" width="21.0" height="21.0" fill-opacity="0.00"/><rect x="315.0" y="33.0" width="21.0" height="21.0" fill-opacity="0.05"/><rect x="336.0" y="33.0" width="21.0" height="21.0" fill-opacity="0.00"/><rect x="357.0" y="33.0" width="21.0" height="21.0" fill-opacity="0.02"/><rect x="378.0" y="33.0" width="21.0" height="21.0" fill-opacity="0.00"/><rect x="399.0" y="33.0" width="21.0" height="21.0" fill-opacity="0.00"/><rect x="420.0" y="33.0" width="21.0" height="21.0" fill-opacity="0.00"/><rect x="441.0" y="33.0" width="21.0" height="21.0" fill-opacity="0.00"/><rect x="462.0" y="33.0" width="21.0" height="21.0" fill-opacity="0.00"/><rect x="483.0" y="33.0" width="21.0" height="21.0" fill-opacity="0.05"/><rect x="504.0" y="33.0" width="21.0" height="21.0" fill-opacity="0.03"/><rect x="525.0" y="33.0" width="21.0" height="21.0" fill-opacity="0.00"/><rect x="546.0" y="33.0" width="19.0" height="21.0" fill-opacity="0.02"/><rect x="0.0" y="54.0" width="21.0" height="21.0" fill-opacity="0.47"/><rect x="21.0" y="54.0" width="21.0" height="21.0" fill-opacity="0.37"/><rect x="42.0" y="54.0" width="21.0" height="21.0" fill-opacity="0.46"/><rect x="63.0" y="54.0" width="21.0" height="21.0" fill-opacity="0.41"/><rect x="84.0" y="54.0" width="21.0" height="21.0" fill-opacity="0.42"/><rect x="105.0" y="54.0" width="21.0" height="21.0" fill-opacity="0.46"/><rect x="126.0" y="54.0" width="21.0" height="21.0" fill-opacity="0.41"/><rect x="147.0" y="54.0" width="21.0" height="21.0" fill-opacity="0.42"/><rect x="168.0" y="54.0" width="21.0" height="21.0" fill-opacity="0.44"/><rect x="189.0" y="54.0" width="21.0" height="21.0" fill-opacity="0.48"/><rect x="210.0" y="54.0" width="21.0" height="21.0" fill-opacity="0.40"/><rect x="231.0" y="54.0" width="21.0" height="21.0" fill-opacity="0.46"/><rect x="252.0" y="54.0" width="21.0" height="21.0" fill-opacity="0.44"/><rect x="273.0" y="54.0" width="21.0" height="21.0" fill-opacity="0.44"/><rect x="294.0" y="54.0" width="1.5" height="21.0" fill-opacity="0.41"/><rect x="0.0" y="75.0" width="21.0" height="21.0" fill-opacity="0.13"/><rect x="21.0" y="75.0" width="21.0" height="21.0" fill-opacity="0.10"/><rect x="42.0" y="75.0" width="21.0" height="21.0" fill-opacity="0.11"/><rect x="63.0" y="75.0" width="21.0" height="21.0" fill-opacity="0.10"/><rect x="84.0" y="75.0" width="21.0" height="21.0" fill-opacity="0.18"/><rect x="105.0" y="75.0" width="21.0" height="21.0" fill-opacity="0.12"/><rect x="126.0" y="75.0" width="21.0" height="21.0" fill-opacity="0.11"/><rect x="147.0" y="75.0" width="21.0" height="21.0" fill-opacity="0.10"/><rect x="168.0" y="75.0" width="21.0" height="21.0" fill-opacity="0.19"/><rect x="189.0" y="75.0" width="21.0" height="21.0" fill-opacity="0.19"/><rect x="210.0" y="75.0" width="21.0" height="21.0" fill-opacity="0.17"/><rect x="231.0" y="75.0" width="21.0" height="21.0" fill-opacity="0.12"/><rect x="252.0" y="75.0" width="21.0" height="21.0" fill-opacity="0.12"/><rect x="273.0" y="75.0" width="21.0" height="21.0" fill-opacity="0.13"/><rect x="294.0" y="75.0" width="1.5" height="21.0" fill-opacity="0.15"/></g></svg>
<svg class="r" style="left:208.4px;top:604px" width="682.6" height="86"><g fill="#2b86f7"><rect x="0.0" y="0.0" width="20.8" height="4.0" fill-opacity="0.16"/><rect x="20.8" y="0.0" width="20.8" height="4.0" fill-opacity="0.16"/><rect x="41.6" y="0.0" width="20.8" height="4.0" fill-opacity="0.11"/><rect x="62.4" y="0.0" width="20.8" height="4.0" fill-opacity="0.07"/><rect x="83.2" y="0.0" width="20.8" height="4.0" fill-opacity="0.16"/><rect x="104.0" y="0.0" width="20.8" height="4.0" fill-opacity="0.08"/><rect x="124.8" y="0.0" width="20.8" height="4.0" fill-opacity="0.08"/><rect x="145.6" y="0.0" width="20.8" height="4.0" fill-opacity="0.04"/><rect x="166.4" y="0.0" width="20.8" height="4.0" fill-opacity="0.09"/><rect x="187.2" y="0.0" width="20.8" height="4.0" fill-opacity="0.10"/><rect x="208.0" y="0.0" width="20.8" height="4.0" fill-opacity="0.10"/><rect x="228.8" y="0.0" width="20.8" height="4.0" fill-opacity="0.06"/><rect x="249.6" y="0.0" width="20.8" height="4.0" fill-opacity="0.10"/><rect x="270.4" y="0.0" width="20.8" height="4.0" fill-opacity="0.04"/><rect x="291.2" y="0.0" width="20.8" height="4.0" fill-opacity="0.07"/><rect x="312.0" y="0.0" width="20.8" height="4.0" fill-opacity="0.05"/><rect x="332.8" y="0.0" width="20.8" height="4.0" fill-opacity="0.09"/><rect x="353.6" y="0.0" width="20.8" height="4.0" fill-opacity="0.05"/><rect x="374.4" y="0.0" width="20.8" height="4.0" fill-opacity="0.04"/><rect x="395.2" y="0.0" width="20.8" height="4.0" fill-opacity="0.08"/><rect x="416.0" y="0.0" width="20.8" height="4.0" fill-opacity="0.07"/><rect x="436.8" y="0.0" width="20.8" height="4.0" fill-opacity="0.11"/><rect x="457.6" y="0.0" width="20.8" height="4.0" fill-opacity="0.10"/><rect x="478.4" y="0.0" width="20.8" height="4.0" fill-opacity="0.13"/><rect x="499.2" y="0.0" width="20.8" height="4.0" fill-opacity="0.12"/><rect x="520.0" y="0.0" width="20.8" height="4.0" fill-opacity="0.13"/><rect x="540.8" y="0.0" width="20.8" height="4.0" fill-opacity="0.15"/><rect x="561.6" y="0.0" width="20.8" height="4.0" fill-opacity="0.09"/><rect x="582.4" y="0.0" width="20.8" height="4.0" fill-opacity="0.08"/><rect x="603.2" y="0.0" width="20.8" height="4.0" fill-opacity="0.16"/><rect x="624.0" y="0.0" width="20.8" height="4.0" fill-opacity="0.06"/><rect x="644.8" y="0.0" width="20.8" height="4.0" fill-opacity="0.13"/><rect x="665.6" y="0.0" width="16.0" height="4.0" fill-opacity="0.12"/><rect x="0.0" y="4.0" width="20.8" height="20.0" fill-opacity="0.37"/><rect x="20.8" y="4.0" width="20.8" height="20.0" fill-opacity="0.46"/><rect x="41.6" y="4.0" width="20.8" height="20.0" fill-opacity="0.47"/><rect x="62.4" y="4.0" width="20.8" height="20.0" fill-opacity="0.44"/><rect x="83.2" y="4.0" width="20.8" height="20.0" fill-opacity="0.45"/><rect x="104.0" y="4.0" width="20.8" height="20.0" fill-opacity="0.46"/><rect x="124.8" y="4.0" width="20.8" height="20.0" fill-opacity="0.38"/><rect x="145.6" y="4.0" width="20.8" height="20.0" fill-opacity="0.42"/><rect x="166.4" y="4.0" width="20.8" height="20.0" fill-opacity="0.42"/><rect x="187.2" y="4.0" width="20.8" height="20.0" fill-opacity="0.46"/><rect x="208.0" y="4.0" width="20.8" height="20.0" fill-opacity="0.46"/><rect x="228.8" y="4.0" width="20.8" height="20.0" fill-opacity="0.46"/><rect x="249.6" y="4.0" width="20.8" height="20.0" fill-opacity="0.43"/><rect x="270.4" y="4.0" width="20.8" height="20.0" fill-opacity="0.47"/><rect x="291.2" y="4.0" width="20.8" height="20.0" fill-opacity="0.44"/><rect x="312.0" y="4.0" width="20.8" height="20.0" fill-opacity="0.44"/><rect x="332.8" y="4.0" width="20.8" height="20.0" fill-opacity="0.39"/><rect x="353.6" y="4.0" width="20.8" height="20.0" fill-opacity="0.36"/><rect x="374.4" y="4.0" width="20.8" height="20.0" fill-opacity="0.38"/><rect x="395.2" y="4.0" width="20.8" height="20.0" fill-opacity="0.40"/><rect x="416.0" y="4.0" width="20.8" height="20.0" fill-opacity="0.37"/><rect x="436.8" y="4.0" width="20.8" height="20.0" fill-opacity="0.46"/><rect x="457.6" y="4.0" width="20.8" height="20.0" fill-opacity="0.43"/><rect x="478.4" y="4.0" width="20.8" height="20.0" fill-opacity="0.44"/><rect x="499.2" y="4.0" width="20.8" height="20.0" fill-opacity="0.44"/><rect x="520.0" y="4.0" width="20.8" height="20.0" fill-opacity="0.44"/><rect x="540.8" y="4.0" width="20.8" height="20.0" fill-opacity="0.42"/><rect x="561.6" y="4.0" width="20.8" height="20.0" fill-opacity="0.36"/><rect x="582.4" y="4.0" width="20.8" height="20.0" fill-opacity="0.46"/><rect x="603.2" y="4.0" width="20.8" height="20.0" fill-opacity="0.45"/><rect x="624.0" y="4.0" width="20.8" height="20.0" fill-opacity="0.42"/><rect x="644.8" y="4.0" width="20.8" height="20.0" fill-opacity="0.42"/><rect x="665.6" y="4.0" width="15.8" height="20.0" fill-opacity="0.44"/><rect x="0.0" y="24.0" width="20.8" height="23.0" fill-opacity="0.00"/><rect x="20.8" y="24.0" width="20.8" height="23.0" fill-opacity="0.07"/><rect x="41.6" y="24.0" width="20.8" height="23.0" fill-opacity="0.01"/><rect x="62.4" y="24.0" width="20.8" height="23.0" fill-opacity="0.00"/><rect x="83.2" y="24.0" width="20.8" height="23.0" fill-opacity="0.01"/><rect x="104.0" y="24.0" width="20.8" height="23.0" fill-opacity="0.07"/><rect x="124.8" y="24.0" width="20.8" height="23.0" fill-opacity="0.00"/><rect x="145.6" y="24.0" width="20.8" height="23.0" fill-opacity="0.07"/><rect x="166.4" y="24.0" width="20.8" height="23.0" fill-opacity="0.10"/><rect x="187.2" y="24.0" width="20.8" height="23.0" fill-opacity="0.04"/><rect x="208.0" y="24.0" width="20.8" height="23.0" fill-opacity="0.03"/><rect x="228.8" y="24.0" width="20.8" height="23.0" fill-opacity="0.04"/><rect x="249.6" y="24.0" width="20.8" height="23.0" fill-opacity="0.06"/><rect x="270.4" y="24.0" width="20.8" height="23.0" fill-opacity="0.07"/><rect x="291.2" y="24.0" width="20.8" height="23.0" fill-opacity="0.05"/><rect x="312.0" y="24.0" width="20.8" height="23.0" fill-opacity="0.06"/><rect x="332.8" y="24.0" width="20.8" height="23.0" fill-opacity="0.00"/><rect x="353.6" y="24.0" width="20.8" height="23.0" fill-opacity="0.00"/><rect x="374.4" y="24.0" width="20.8" height="23.0" fill-opacity="0.01"/><rect x="395.2" y="24.0" width="20.8" height="23.0" fill-opacity="0.07"/><rect x="416.0" y="24.0" width="20.8" height="23.0" fill-opacity="0.02"/><rect x="436.8" y="24.0" width="20.8" height="23.0" fill-opacity="0.05"/><rect x="457.6" y="24.0" width="20.8" height="23.0" fill-opacity="0.00"/><rect x="478.4" y="24.0" width="20.8" height="23.0" fill-opacity="0.00"/><rect x="499.2" y="24.0" width="20.8" height="23.0" fill-opacity="0.01"/><rect x="520.0" y="24.0" width="20.8" height="23.0" fill-opacity="0.06"/><rect x="540.8" y="24.0" width="20.8" height="23.0" fill-opacity="0.06"/><rect x="561.6" y="24.0" width="20.8" height="23.0" fill-opacity="0.06"/><rect x="582.4" y="24.0" width="20.8" height="23.0" fill-opacity="0.01"/><rect x="603.2" y="24.0" width="20.8" height="23.0" fill-opacity="0.04"/><rect x="624.0" y="24.0" width="20.8" height="23.0" fill-opacity="0.04"/><rect x="644.8" y="24.0" width="20.8" height="23.0" fill-opacity="0.04"/><rect x="665.6" y="24.0" width="16.0" height="23.0" fill-opacity="0.00"/><rect x="0.0" y="47.0" width="20.8" height="19.0" fill-opacity="0.38"/><rect x="20.8" y="47.0" width="20.8" height="19.0" fill-opacity="0.29"/><rect x="41.6" y="47.0" width="20.8" height="19.0" fill-opacity="0.39"/><rect x="62.4" y="47.0" width="20.8" height="19.0" fill-opacity="0.38"/><rect x="83.2" y="47.0" width="20.8" height="19.0" fill-opacity="0.27"/><rect x="104.0" y="47.0" width="20.8" height="19.0" fill-opacity="0.33"/><rect x="124.8" y="47.0" width="20.8" height="19.0" fill-opacity="0.37"/><rect x="145.6" y="47.0" width="20.8" height="19.0" fill-opacity="0.39"/><rect x="166.4" y="47.0" width="20.8" height="19.0" fill-opacity="0.32"/><rect x="187.2" y="47.0" width="20.8" height="19.0" fill-opacity="0.30"/><rect x="208.0" y="47.0" width="20.8" height="19.0" fill-opacity="0.30"/><rect x="228.8" y="47.0" width="20.8" height="19.0" fill-opacity="0.38"/><rect x="249.6" y="47.0" width="20.8" height="19.0" fill-opacity="0.30"/><rect x="270.4" y="47.0" width="20.8" height="19.0" fill-opacity="0.34"/><rect x="291.2" y="47.0" width="20.8" height="19.0" fill-opacity="0.29"/><rect x="312.0" y="47.0" width="20.8" height="19.0" fill-opacity="0.33"/><rect x="332.8" y="47.0" width="20.8" height="19.0" fill-opacity="0.38"/><rect x="353.6" y="47.0" width="20.8" height="19.0" fill-opacity="0.29"/><rect x="374.4" y="47.0" width="6.7" height="19.0" fill-opacity="0.37"/><rect x="0.0" y="66.0" width="20.8" height="19.0" fill-opacity="0.27"/><rect x="20.8" y="66.0" width="20.8" height="19.0" fill-opacity="0.32"/><rect x="41.6" y="66.0" width="20.8" height="19.0" fill-opacity="0.29"/><rect x="62.4" y="66.0" width="20.8" height="19.0" fill-opacity="0.24"/><rect x="83.2" y="66.0" width="20.8" height="19.0" fill-opacity="0.32"/><rect x="104.0" y="66.0" width="20.8" height="19.0" fill-opacity="0.27"/><rect x="124.8" y="66.0" width="20.8" height="19.0" fill-opacity="0.21"/><rect x="145.6" y="66.0" width="20.8" height="19.0" fill-opacity="0.21"/><rect x="166.4" y="66.0" width="20.8" height="19.0" fill-opacity="0.27"/><rect x="187.2" y="66.0" width="20.8" height="19.0" fill-opacity="0.26"/><rect x="208.0" y="66.0" width="20.8" height="19.0" fill-opacity="0.25"/><rect x="228.8" y="66.0" width="20.8" height="19.0" fill-opacity="0.23"/><rect x="249.6" y="66.0" width="20.8" height="19.0" fill-opacity="0.25"/><rect x="270.4" y="66.0" width="20.8" height="19.0" fill-opacity="0.25"/><rect x="291.2" y="66.0" width="20.8" height="19.0" fill-opacity="0.31"/><rect x="312.0" y="66.0" width="20.8" height="19.0" fill-opacity="0.21"/><rect x="332.8" y="66.0" width="20.8" height="19.0" fill-opacity="0.30"/><rect x="353.6" y="66.0" width="20.8" height="19.0" fill-opacity="0.31"/><rect x="374.4" y="66.0" width="6.7" height="19.0" fill-opacity="0.22"/></g></svg>
<svg class="r" style="left:204px;top:726.5px" width="602.8" height="39"><g fill="#2b86f7"><rect x="0.0" y="0.0" width="12.0" height="10.0" fill-opacity="0.12"/><rect x="12.0" y="0.0" width="12.0" height="10.0" fill-opacity="0.12"/><rect x="24.0" y="0.0" width="12.0" height="10.0" fill-opacity="0.32"/><rect x="36.0" y="0.0" width="12.0" height="10.0" fill-opacity="0.31"/><rect x="48.0" y="0.0" width="12.0" height="10.0" fill-opacity="0.03"/><rect x="60.0" y="0.0" width="12.0" height="10.0" fill-opacity="0.26"/><rect x="72.0" y="0.0" width="12.0" height="10.0" fill-opacity="0.14"/><rect x="84.0" y="0.0" width="12.0" height="10.0" fill-opacity="0.20"/><rect x="96.0" y="0.0" width="12.0" height="10.0" fill-opacity="0.29"/><rect x="108.0" y="0.0" width="12.0" height="10.0" fill-opacity="0.08"/><rect x="120.0" y="0.0" width="12.0" height="10.0" fill-opacity="0.28"/><rect x="132.0" y="0.0" width="12.0" height="10.0" fill-opacity="0.31"/><rect x="144.0" y="0.0" width="12.0" height="10.0" fill-opacity="0.15"/><rect x="156.0" y="0.0" width="12.0" height="10.0" fill-opacity="0.32"/><rect x="168.0" y="0.0" width="12.0" height="10.0" fill-opacity="0.25"/><rect x="180.0" y="0.0" width="12.0" height="10.0" fill-opacity="0.09"/><rect x="192.0" y="0.0" width="12.0" height="10.0" fill-opacity="0.22"/><rect x="204.0" y="0.0" width="12.0" height="10.0" fill-opacity="0.23"/><rect x="216.0" y="0.0" width="12.0" height="10.0" fill-opacity="0.20"/><rect x="228.0" y="0.0" width="12.0" height="10.0" fill-opacity="0.16"/><rect x="240.0" y="0.0" width="12.0" height="10.0" fill-opacity="0.26"/><rect x="252.0" y="0.0" width="12.0" height="10.0" fill-opacity="0.05"/><rect x="264.0" y="0.0" width="12.0" height="10.0" fill-opacity="0.22"/><rect x="276.0" y="0.0" width="12.0" height="10.0" fill-opacity="0.13"/><rect x="288.0" y="0.0" width="12.0" height="10.0" fill-opacity="0.12"/><rect x="300.0" y="0.0" width="12.0" height="10.0" fill-opacity="0.29"/><rect x="312.0" y="0.0" width="12.0" height="10.0" fill-opacity="0.21"/><rect x="324.0" y="0.0" width="12.0" height="10.0" fill-opacity="0.28"/><rect x="336.0" y="0.0" width="12.0" height="10.0" fill-opacity="0.23"/><rect x="348.0" y="0.0" width="12.0" height="10.0" fill-opacity="0.14"/><rect x="360.0" y="0.0" width="12.0" height="10.0" fill-opacity="0.18"/><rect x="372.0" y="0.0" width="12.0" height="10.0" fill-opacity="0.29"/><rect x="384.0" y="0.0" width="12.0" height="10.0" fill-opacity="0.03"/><rect x="396.0" y="0.0" width="12.0" height="10.0" fill-opacity="0.31"/><rect x="408.0" y="0.0" width="12.0" height="10.0" fill-opacity="0.28"/><rect x="420.0" y="0.0" width="12.0" height="10.0" fill-opacity="0.16"/><rect x="432.0" y="0.0" width="12.0" height="10.0" fill-opacity="0.22"/><rect x="444.0" y="0.0" width="12.0" height="10.0" fill-opacity="0.19"/><rect x="456.0" y="0.0" width="12.0" height="10.0" fill-opacity="0.23"/><rect x="468.0" y="0.0" width="12.0" height="10.0" fill-opacity="0.30"/><rect x="480.0" y="0.0" width="12.0" height="10.0" fill-opacity="0.09"/><rect x="492.0" y="0.0" width="12.0" height="10.0" fill-opacity="0.19"/><rect x="504.0" y="0.0" width="12.0" height="10.0" fill-opacity="0.20"/><rect x="516.0" y="0.0" width="12.0" height="10.0" fill-opacity="0.30"/><rect x="528.0" y="0.0" width="12.0" height="10.0" fill-opacity="0.13"/><rect x="540.0" y="0.0" width="12.0" height="10.0" fill-opacity="0.28"/><rect x="552.0" y="0.0" width="12.0" height="10.0" fill-opacity="0.33"/><rect x="564.0" y="0.0" width="12.0" height="10.0" fill-opacity="0.12"/><rect x="576.0" y="0.0" width="12.0" height="10.0" fill-opacity="0.10"/><rect x="588.0" y="0.0" width="12.0" height="10.0" fill-opacity="0.23"/><rect x="600.0" y="0.0" width="1.8" height="10.0" fill-opacity="0.21"/><rect x="0.0" y="10.0" width="12.0" height="14.0" fill-opacity="0.45"/><rect x="12.0" y="10.0" width="12.0" height="14.0" fill-opacity="0.63"/><rect x="24.0" y="10.0" width="12.0" height="14.0" fill-opacity="0.60"/><rect x="36.0" y="10.0" width="12.0" height="14.0" fill-opacity="0.60"/><rect x="48.0" y="10.0" width="12.0" height="14.0" fill-opacity="0.13"/><rect x="60.0" y="10.0" width="12.0" height="14.0" fill-opacity="0.23"/><rect x="72.0" y="10.0" width="12.0" height="14.0" fill-opacity="0.43"/><rect x="84.0" y="10.0" width="12.0" height="14.0" fill-opacity="0.41"/><rect x="96.0" y="10.0" width="12.0" height="14.0" fill-opacity="0.63"/><rect x="108.0" y="10.0" width="12.0" height="14.0" fill-opacity="0.53"/><rect x="120.0" y="10.0" width="12.0" height="14.0" fill-opacity="0.58"/><rect x="132.0" y="10.0" width="12.0" height="14.0" fill-opacity="0.47"/><rect x="144.0" y="10.0" width="12.0" height="14.0" fill-opacity="0.45"/><rect x="156.0" y="10.0" width="12.0" height="14.0" fill-opacity="0.24"/><rect x="168.0" y="10.0" width="12.0" height="14.0" fill-opacity="0.53"/><rect x="180.0" y="10.0" width="12.0" height="14.0" fill-opacity="0.14"/><rect x="192.0" y="10.0" width="12.0" height="14.0" fill-opacity="0.48"/><rect x="204.0" y="10.0" width="12.0" height="14.0" fill-opacity="0.46"/><rect x="216.0" y="10.0" width="12.0" height="14.0" fill-opacity="0.21"/><rect x="228.0" y="10.0" width="12.0" height="14.0" fill-opacity="0.50"/><rect x="240.0" y="10.0" width="12.0" height="14.0" fill-opacity="0.41"/><rect x="252.0" y="10.0" width="12.0" height="14.0" fill-opacity="0.18"/><rect x="264.0" y="10.0" width="12.0" height="14.0" fill-opacity="0.56"/><rect x="276.0" y="10.0" width="12.0" height="14.0" fill-opacity="0.45"/><rect x="288.0" y="10.0" width="12.0" height="14.0" fill-opacity="0.49"/><rect x="300.0" y="10.0" width="12.0" height="14.0" fill-opacity="0.57"/><rect x="312.0" y="10.0" width="12.0" height="14.0" fill-opacity="0.49"/><rect x="324.0" y="10.0" width="12.0" height="14.0" fill-opacity="0.40"/><rect x="336.0" y="10.0" width="12.0" height="14.0" fill-opacity="0.24"/><rect x="348.0" y="10.0" width="12.0" height="14.0" fill-opacity="0.52"/><rect x="360.0" y="10.0" width="12.0" height="14.0" fill-opacity="0.58"/><rect x="372.0" y="10.0" width="12.0" height="14.0" fill-opacity="0.51"/><rect x="384.0" y="10.0" width="12.0" height="14.0" fill-opacity="0.18"/><rect x="396.0" y="10.0" width="12.0" height="14.0" fill-opacity="0.43"/><rect x="408.0" y="10.0" width="12.0" height="14.0" fill-opacity="0.55"/><rect x="420.0" y="10.0" width="12.0" height="14.0" fill-opacity="0.52"/><rect x="432.0" y="10.0" width="12.0" height="14.0" fill-opacity="0.41"/><rect x="444.0" y="10.0" width="12.0" height="14.0" fill-opacity="0.25"/><rect x="456.0" y="10.0" width="12.0" height="14.0" fill-opacity="0.41"/><rect x="468.0" y="10.0" width="12.0" height="14.0" fill-opacity="0.50"/><rect x="480.0" y="10.0" width="12.0" height="14.0" fill-opacity="0.13"/><rect x="492.0" y="10.0" width="12.0" height="14.0" fill-opacity="0.51"/><rect x="504.0" y="10.0" width="12.0" height="14.0" fill-opacity="0.48"/><rect x="516.0" y="10.0" width="12.0" height="14.0" fill-opacity="0.42"/><rect x="528.0" y="10.0" width="12.0" height="14.0" fill-opacity="0.45"/><rect x="540.0" y="10.0" width="12.0" height="14.0" fill-opacity="0.53"/><rect x="552.0" y="10.0" width="12.0" height="14.0" fill-opacity="0.47"/><rect x="564.0" y="10.0" width="12.0" height="14.0" fill-opacity="0.60"/><rect x="576.0" y="10.0" width="12.0" height="14.0" fill-opacity="0.15"/><rect x="588.0" y="10.0" width="12.0" height="14.0" fill-opacity="0.17"/><rect x="600.0" y="10.0" width="1.8" height="14.0" fill-opacity="0.42"/><rect x="0.0" y="24.0" width="12.0" height="14.0" fill-opacity="0.39"/><rect x="12.0" y="24.0" width="12.0" height="14.0" fill-opacity="0.36"/><rect x="24.0" y="24.0" width="12.0" height="14.0" fill-opacity="0.36"/><rect x="36.0" y="24.0" width="12.0" height="14.0" fill-opacity="0.37"/><rect x="48.0" y="24.0" width="12.0" height="14.0" fill-opacity="0.10"/><rect x="60.0" y="24.0" width="12.0" height="14.0" fill-opacity="0.23"/><rect x="72.0" y="24.0" width="12.0" height="14.0" fill-opacity="0.29"/><rect x="84.0" y="24.0" width="12.0" height="14.0" fill-opacity="0.36"/><rect x="96.0" y="24.0" width="12.0" height="14.0" fill-opacity="0.33"/><rect x="108.0" y="24.0" width="12.0" height="14.0" fill-opacity="0.33"/><rect x="120.0" y="24.0" width="12.0" height="14.0" fill-opacity="0.27"/><rect x="132.0" y="24.0" width="12.0" height="14.0" fill-opacity="0.15"/><rect x="144.0" y="24.0" width="12.0" height="14.0" fill-opacity="0.09"/><rect x="156.0" y="24.0" width="12.0" height="14.0" fill-opacity="0.33"/><rect x="168.0" y="24.0" width="12.0" height="14.0" fill-opacity="0.26"/><rect x="180.0" y="24.0" width="12.0" height="14.0" fill-opacity="0.06"/><rect x="192.0" y="24.0" width="12.0" height="14.0" fill-opacity="0.36"/><rect x="204.0" y="24.0" width="12.0" height="14.0" fill-opacity="0.40"/><rect x="216.0" y="24.0" width="12.0" height="14.0" fill-opacity="0.35"/><rect x="228.0" y="24.0" width="12.0" height="14.0" fill-opacity="0.37"/><rect x="240.0" y="24.0" width="12.0" height="14.0" fill-opacity="0.20"/><rect x="252.0" y="24.0" width="12.0" height="14.0" fill-opacity="0.06"/><rect x="264.0" y="24.0" width="12.0" height="14.0" fill-opacity="0.35"/><rect x="276.0" y="24.0" width="12.0" height="14.0" fill-opacity="0.37"/><rect x="288.0" y="24.0" width="12.0" height="14.0" fill-opacity="0.40"/><rect x="300.0" y="24.0" width="12.0" height="14.0" fill-opacity="0.21"/><rect x="312.0" y="24.0" width="12.0" height="14.0" fill-opacity="0.18"/><rect x="324.0" y="24.0" width="12.0" height="14.0" fill-opacity="0.25"/><rect x="336.0" y="24.0" width="12.0" height="14.0" fill-opacity="0.22"/><rect x="348.0" y="24.0" width="12.0" height="14.0" fill-opacity="0.39"/><rect x="360.0" y="24.0" width="12.0" height="14.0" fill-opacity="0.37"/><rect x="372.0" y="24.0" width="12.0" height="14.0" fill-opacity="0.30"/><rect x="384.0" y="24.0" width="12.0" height="14.0" fill-opacity="0.07"/><rect x="396.0" y="24.0" width="12.0" height="14.0" fill-opacity="0.28"/><rect x="408.0" y="24.0" width="12.0" height="14.0" fill-opacity="0.30"/><rect x="420.0" y="24.0" width="12.0" height="14.0" fill-opacity="0.22"/><rect x="432.0" y="24.0" width="12.0" height="14.0" fill-opacity="0.08"/><rect x="444.0" y="24.0" width="12.0" height="14.0" fill-opacity="0.33"/><rect x="456.0" y="24.0" width="12.0" height="14.0" fill-opacity="0.28"/><rect x="468.0" y="24.0" width="12.0" height="14.0" fill-opacity="0.41"/><rect x="480.0" y="24.0" width="12.0" height="14.0" fill-opacity="0.06"/><rect x="492.0" y="24.0" width="12.0" height="14.0" fill-opacity="0.29"/><rect x="504.0" y="24.0" width="12.0" height="14.0" fill-opacity="0.24"/><rect x="516.0" y="24.0" width="12.0" height="14.0" fill-opacity="0.37"/><rect x="528.0" y="24.0" width="12.0" height="14.0" fill-opacity="0.37"/><rect x="540.0" y="24.0" width="12.0" height="14.0" fill-opacity="0.25"/><rect x="552.0" y="24.0" width="12.0" height="14.0" fill-opacity="0.24"/><rect x="564.0" y="24.0" width="12.0" height="14.0" fill-opacity="0.29"/><rect x="576.0" y="24.0" width="12.0" height="14.0" fill-opacity="0.07"/><rect x="588.0" y="24.0" width="12.0" height="14.0" fill-opacity="0.25"/><rect x="600.0" y="24.0" width="1.8" height="14.0" fill-opacity="0.09"/></g></svg>
<svg class="r" style="left:203px;top:807px" width="491.5" height="33"><g fill="#2b86f7"><rect x="0.0" y="0.0" width="12.0" height="10.0" fill-opacity="0.29"/><rect x="12.0" y="0.0" width="12.0" height="10.0" fill-opacity="0.34"/><rect x="24.0" y="0.0" width="12.0" height="10.0" fill-opacity="0.21"/><rect x="36.0" y="0.0" width="12.0" height="10.0" fill-opacity="0.30"/><rect x="48.0" y="0.0" width="12.0" height="10.0" fill-opacity="0.11"/><rect x="60.0" y="0.0" width="12.0" height="10.0" fill-opacity="0.04"/><rect x="72.0" y="0.0" width="12.0" height="10.0" fill-opacity="0.15"/><rect x="84.0" y="0.0" width="12.0" height="10.0" fill-opacity="0.24"/><rect x="96.0" y="0.0" width="12.0" height="10.0" fill-opacity="0.19"/><rect x="108.0" y="0.0" width="12.0" height="10.0" fill-opacity="0.21"/><rect x="120.0" y="0.0" width="12.0" height="10.0" fill-opacity="0.29"/><rect x="132.0" y="0.0" width="12.0" height="10.0" fill-opacity="0.13"/><rect x="144.0" y="0.0" width="12.0" height="10.0" fill-opacity="0.07"/><rect x="156.0" y="0.0" width="12.0" height="10.0" fill-opacity="0.15"/><rect x="168.0" y="0.0" width="12.0" height="10.0" fill-opacity="0.13"/><rect x="180.0" y="0.0" width="12.0" height="10.0" fill-opacity="0.16"/><rect x="192.0" y="0.0" width="12.0" height="10.0" fill-opacity="0.26"/><rect x="204.0" y="0.0" width="12.0" height="10.0" fill-opacity="0.10"/><rect x="216.0" y="0.0" width="12.0" height="10.0" fill-opacity="0.26"/><rect x="228.0" y="0.0" width="12.0" height="10.0" fill-opacity="0.17"/><rect x="240.0" y="0.0" width="12.0" height="10.0" fill-opacity="0.29"/><rect x="252.0" y="0.0" width="12.0" height="10.0" fill-opacity="0.12"/><rect x="264.0" y="0.0" width="12.0" height="10.0" fill-opacity="0.06"/><rect x="276.0" y="0.0" width="12.0" height="10.0" fill-opacity="0.23"/><rect x="288.0" y="0.0" width="12.0" height="10.0" fill-opacity="0.12"/><rect x="300.0" y="0.0" width="12.0" height="10.0" fill-opacity="0.27"/><rect x="312.0" y="0.0" width="12.0" height="10.0" fill-opacity="0.17"/><rect x="324.0" y="0.0" width="12.0" height="10.0" fill-opacity="0.33"/><rect x="336.0" y="0.0" width="12.0" height="10.0" fill-opacity="0.24"/><rect x="348.0" y="0.0" width="12.0" height="10.0" fill-opacity="0.20"/><rect x="360.0" y="0.0" width="12.0" height="10.0" fill-opacity="0.34"/><rect x="372.0" y="0.0" width="12.0" height="10.0" fill-opacity="0.15"/><rect x="384.0" y="0.0" width="12.0" height="10.0" fill-opacity="0.04"/><rect x="396.0" y="0.0" width="12.0" height="10.0" fill-opacity="0.10"/><rect x="408.0" y="0.0" width="12.0" height="10.0" fill-opacity="0.20"/><rect x="420.0" y="0.0" width="12.0" height="10.0" fill-opacity="0.20"/><rect x="432.0" y="0.0" width="12.0" height="10.0" fill-opacity="0.21"/><rect x="444.0" y="0.0" width="12.0" height="10.0" fill-opacity="0.10"/><rect x="456.0" y="0.0" width="12.0" height="10.0" fill-opacity="0.25"/><rect x="468.0" y="0.0" width="12.0" height="10.0" fill-opacity="0.04"/><rect x="480.0" y="0.0" width="10.5" height="10.0" fill-opacity="0.25"/><rect x="0.0" y="10.0" width="12.0" height="12.0" fill-opacity="0.52"/><rect x="12.0" y="10.0" width="12.0" height="12.0" fill-opacity="0.47"/><rect x="24.0" y="10.0" width="12.0" height="12.0" fill-opacity="0.62"/><rect x="36.0" y="10.0" width="12.0" height="12.0" fill-opacity="0.52"/><rect x="48.0" y="10.0" width="12.0" height="12.0" fill-opacity="0.63"/><rect x="60.0" y="10.0" width="12.0" height="12.0" fill-opacity="0.13"/><rect x="72.0" y="10.0" width="12.0" height="12.0" fill-opacity="0.63"/><rect x="84.0" y="10.0" width="12.0" height="12.0" fill-opacity="0.21"/><rect x="96.0" y="10.0" width="12.0" height="12.0" fill-opacity="0.62"/><rect x="108.0" y="10.0" width="12.0" height="12.0" fill-opacity="0.62"/><rect x="120.0" y="10.0" width="12.0" height="12.0" fill-opacity="0.60"/><rect x="132.0" y="10.0" width="12.0" height="12.0" fill-opacity="0.59"/><rect x="144.0" y="10.0" width="12.0" height="12.0" fill-opacity="0.15"/><rect x="156.0" y="10.0" width="12.0" height="12.0" fill-opacity="0.60"/><rect x="168.0" y="10.0" width="12.0" height="12.0" fill-opacity="0.44"/><rect x="180.0" y="10.0" width="12.0" height="12.0" fill-opacity="0.50"/><rect x="192.0" y="10.0" width="12.0" height="12.0" fill-opacity="0.49"/><rect x="204.0" y="10.0" width="12.0" height="12.0" fill-opacity="0.46"/><rect x="216.0" y="10.0" width="12.0" height="12.0" fill-opacity="0.25"/><rect x="228.0" y="10.0" width="12.0" height="12.0" fill-opacity="0.53"/><rect x="240.0" y="10.0" width="12.0" height="12.0" fill-opacity="0.41"/><rect x="252.0" y="10.0" width="12.0" height="12.0" fill-opacity="0.43"/><rect x="264.0" y="10.0" width="12.0" height="12.0" fill-opacity="0.16"/><rect x="276.0" y="10.0" width="12.0" height="12.0" fill-opacity="0.55"/><rect x="288.0" y="10.0" width="12.0" height="12.0" fill-opacity="0.50"/><rect x="300.0" y="10.0" width="12.0" height="12.0" fill-opacity="0.50"/><rect x="312.0" y="10.0" width="12.0" height="12.0" fill-opacity="0.51"/><rect x="324.0" y="10.0" width="12.0" height="12.0" fill-opacity="0.41"/><rect x="336.0" y="10.0" width="12.0" height="12.0" fill-opacity="0.52"/><rect x="348.0" y="10.0" width="12.0" height="12.0" fill-opacity="0.58"/><rect x="360.0" y="10.0" width="12.0" height="12.0" fill-opacity="0.51"/><rect x="372.0" y="10.0" width="12.0" height="12.0" fill-opacity="0.51"/><rect x="384.0" y="10.0" width="12.0" height="12.0" fill-opacity="0.13"/><rect x="396.0" y="10.0" width="12.0" height="12.0" fill-opacity="0.50"/><rect x="408.0" y="10.0" width="12.0" height="12.0" fill-opacity="0.51"/><rect x="420.0" y="10.0" width="12.0" height="12.0" fill-opacity="0.41"/><rect x="432.0" y="10.0" width="12.0" height="12.0" fill-opacity="0.42"/><rect x="444.0" y="10.0" width="12.0" height="12.0" fill-opacity="0.59"/><rect x="456.0" y="10.0" width="12.0" height="12.0" fill-opacity="0.41"/><rect x="468.0" y="10.0" width="12.0" height="12.0" fill-opacity="0.15"/><rect x="480.0" y="10.0" width="10.5" height="12.0" fill-opacity="0.63"/><rect x="0.0" y="22.0" width="12.0" height="10.0" fill-opacity="0.29"/><rect x="12.0" y="22.0" width="12.0" height="10.0" fill-opacity="0.26"/><rect x="24.0" y="22.0" width="12.0" height="10.0" fill-opacity="0.13"/><rect x="36.0" y="22.0" width="12.0" height="10.0" fill-opacity="0.20"/><rect x="48.0" y="22.0" width="12.0" height="10.0" fill-opacity="0.30"/><rect x="60.0" y="22.0" width="12.0" height="10.0" fill-opacity="0.08"/><rect x="72.0" y="22.0" width="12.0" height="10.0" fill-opacity="0.12"/><rect x="84.0" y="22.0" width="12.0" height="10.0" fill-opacity="0.16"/><rect x="96.0" y="22.0" width="12.0" height="10.0" fill-opacity="0.12"/><rect x="108.0" y="22.0" width="12.0" height="10.0" fill-opacity="0.15"/><rect x="120.0" y="22.0" width="12.0" height="10.0" fill-opacity="0.11"/><rect x="132.0" y="22.0" width="12.0" height="10.0" fill-opacity="0.30"/><rect x="144.0" y="22.0" width="12.0" height="10.0" fill-opacity="0.04"/><rect x="156.0" y="22.0" width="12.0" height="10.0" fill-opacity="0.20"/><rect x="168.0" y="22.0" width="12.0" height="10.0" fill-opacity="0.09"/><rect x="180.0" y="22.0" width="12.0" height="10.0" fill-opacity="0.12"/><rect x="192.0" y="22.0" width="12.0" height="10.0" fill-opacity="0.24"/><rect x="204.0" y="22.0" width="12.0" height="10.0" fill-opacity="0.12"/><rect x="216.0" y="22.0" width="12.0" height="10.0" fill-opacity="0.11"/><rect x="228.0" y="22.0" width="12.0" height="10.0" fill-opacity="0.23"/><rect x="240.0" y="22.0" width="12.0" height="10.0" fill-opacity="0.29"/><rect x="252.0" y="22.0" width="12.0" height="10.0" fill-opacity="0.22"/><rect x="264.0" y="22.0" width="12.0" height="10.0" fill-opacity="0.03"/><rect x="276.0" y="22.0" width="12.0" height="10.0" fill-opacity="0.32"/><rect x="288.0" y="22.0" width="12.0" height="10.0" fill-opacity="0.17"/><rect x="300.0" y="22.0" width="12.0" height="10.0" fill-opacity="0.14"/><rect x="312.0" y="22.0" width="12.0" height="10.0" fill-opacity="0.22"/><rect x="324.0" y="22.0" width="12.0" height="10.0" fill-opacity="0.26"/><rect x="336.0" y="22.0" width="12.0" height="10.0" fill-opacity="0.12"/><rect x="348.0" y="22.0" width="12.0" height="10.0" fill-opacity="0.09"/><rect x="360.0" y="22.0" width="12.0" height="10.0" fill-opacity="0.14"/><rect x="372.0" y="22.0" width="12.0" height="10.0" fill-opacity="0.32"/><rect x="384.0" y="22.0" width="12.0" height="10.0" fill-opacity="0.07"/><rect x="396.0" y="22.0" width="12.0" height="10.0" fill-opacity="0.06"/><rect x="408.0" y="22.0" width="12.0" height="10.0" fill-opacity="0.09"/><rect x="420.0" y="22.0" width="12.0" height="10.0" fill-opacity="0.23"/><rect x="432.0" y="22.0" width="12.0" height="10.0" fill-opacity="0.20"/><rect x="444.0" y="22.0" width="12.0" height="10.0" fill-opacity="0.11"/><rect x="456.0" y="22.0" width="12.0" height="10.0" fill-opacity="0.09"/><rect x="468.0" y="22.0" width="12.0" height="10.0" fill-opacity="0.02"/><rect x="480.0" y="22.0" width="10.5" height="10.0" fill-opacity="0.17"/></g></svg>
<svg class="r" style="left:208.4px;top:887px" width="564.1" height="37"><g fill="#2b86f7"><rect x="0.0" y="0.0" width="12.0" height="10.0" fill-opacity="0.27"/><rect x="12.0" y="0.0" width="12.0" height="10.0" fill-opacity="0.28"/><rect x="24.0" y="0.0" width="12.0" height="10.0" fill-opacity="0.16"/><rect x="36.0" y="0.0" width="12.0" height="10.0" fill-opacity="0.19"/><rect x="48.0" y="0.0" width="12.0" height="10.0" fill-opacity="0.15"/><rect x="60.0" y="0.0" width="12.0" height="10.0" fill-opacity="0.10"/><rect x="72.0" y="0.0" width="12.0" height="10.0" fill-opacity="0.32"/><rect x="84.0" y="0.0" width="12.0" height="10.0" fill-opacity="0.08"/><rect x="96.0" y="0.0" width="12.0" height="10.0" fill-opacity="0.28"/><rect x="108.0" y="0.0" width="12.0" height="10.0" fill-opacity="0.21"/><rect x="120.0" y="0.0" width="12.0" height="10.0" fill-opacity="0.24"/><rect x="132.0" y="0.0" width="12.0" height="10.0" fill-opacity="0.31"/><rect x="144.0" y="0.0" width="12.0" height="10.0" fill-opacity="0.14"/><rect x="156.0" y="0.0" width="12.0" height="10.0" fill-opacity="0.26"/><rect x="168.0" y="0.0" width="12.0" height="10.0" fill-opacity="0.07"/><rect x="180.0" y="0.0" width="12.0" height="10.0" fill-opacity="0.10"/><rect x="192.0" y="0.0" width="12.0" height="10.0" fill-opacity="0.13"/><rect x="204.0" y="0.0" width="12.0" height="10.0" fill-opacity="0.36"/><rect x="216.0" y="0.0" width="12.0" height="10.0" fill-opacity="0.18"/><rect x="228.0" y="0.0" width="12.0" height="10.0" fill-opacity="0.25"/><rect x="240.0" y="0.0" width="12.0" height="10.0" fill-opacity="0.33"/><rect x="252.0" y="0.0" width="12.0" height="10.0" fill-opacity="0.20"/><rect x="264.0" y="0.0" width="12.0" height="10.0" fill-opacity="0.04"/><rect x="276.0" y="0.0" width="12.0" height="10.0" fill-opacity="0.34"/><rect x="288.0" y="0.0" width="12.0" height="10.0" fill-opacity="0.12"/><rect x="300.0" y="0.0" width="12.0" height="10.0" fill-opacity="0.33"/><rect x="312.0" y="0.0" width="12.0" height="10.0" fill-opacity="0.24"/><rect x="324.0" y="0.0" width="12.0" height="10.0" fill-opacity="0.24"/><rect x="336.0" y="0.0" width="12.0" height="10.0" fill-opacity="0.16"/><rect x="348.0" y="0.0" width="12.0" height="10.0" fill-opacity="0.14"/><rect x="360.0" y="0.0" width="12.0" height="10.0" fill-opacity="0.31"/><rect x="372.0" y="0.0" width="12.0" height="10.0" fill-opacity="0.10"/><rect x="384.0" y="0.0" width="12.0" height="10.0" fill-opacity="0.30"/><rect x="396.0" y="0.0" width="12.0" height="10.0" fill-opacity="0.26"/><rect x="408.0" y="0.0" width="12.0" height="10.0" fill-opacity="0.32"/><rect x="420.0" y="0.0" width="12.0" height="10.0" fill-opacity="0.19"/><rect x="432.0" y="0.0" width="12.0" height="10.0" fill-opacity="0.36"/><rect x="444.0" y="0.0" width="12.0" height="10.0" fill-opacity="0.14"/><rect x="456.0" y="0.0" width="12.0" height="10.0" fill-opacity="0.19"/><rect x="468.0" y="0.0" width="12.0" height="10.0" fill-opacity="0.31"/><rect x="480.0" y="0.0" width="12.0" height="10.0" fill-opacity="0.31"/><rect x="492.0" y="0.0" width="12.0" height="10.0" fill-opacity="0.10"/><rect x="504.0" y="0.0" width="12.0" height="10.0" fill-opacity="0.21"/><rect x="516.0" y="0.0" width="12.0" height="10.0" fill-opacity="0.35"/><rect x="528.0" y="0.0" width="12.0" height="10.0" fill-opacity="0.30"/><rect x="540.0" y="0.0" width="12.0" height="10.0" fill-opacity="0.36"/><rect x="552.0" y="0.0" width="11.1" height="10.0" fill-opacity="0.33"/><rect x="0.0" y="10.0" width="12.0" height="14.0" fill-opacity="0.61"/><rect x="12.0" y="10.0" width="12.0" height="14.0" fill-opacity="0.57"/><rect x="24.0" y="10.0" width="12.0" height="14.0" fill-opacity="0.47"/><rect x="36.0" y="10.0" width="12.0" height="14.0" fill-opacity="0.22"/><rect x="48.0" y="10.0" width="12.0" height="14.0" fill-opacity="0.62"/><rect x="60.0" y="10.0" width="12.0" height="14.0" fill-opacity="0.12"/><rect x="72.0" y="10.0" width="12.0" height="14.0" fill-opacity="0.43"/><rect x="84.0" y="10.0" width="12.0" height="14.0" fill-opacity="0.48"/><rect x="96.0" y="10.0" width="12.0" height="14.0" fill-opacity="0.16"/><rect x="108.0" y="10.0" width="12.0" height="14.0" fill-opacity="0.57"/><rect x="120.0" y="10.0" width="12.0" height="14.0" fill-opacity="0.57"/><rect x="132.0" y="10.0" width="12.0" height="14.0" fill-opacity="0.42"/><rect x="144.0" y="10.0" width="12.0" height="14.0" fill-opacity="0.49"/><rect x="156.0" y="10.0" width="12.0" height="14.0" fill-opacity="0.60"/><rect x="168.0" y="10.0" width="12.0" height="14.0" fill-opacity="0.42"/><rect x="180.0" y="10.0" width="12.0" height="14.0" fill-opacity="0.19"/><rect x="192.0" y="10.0" width="12.0" height="14.0" fill-opacity="0.63"/><rect x="204.0" y="10.0" width="12.0" height="14.0" fill-opacity="0.45"/><rect x="216.0" y="10.0" width="12.0" height="14.0" fill-opacity="0.41"/><rect x="228.0" y="10.0" width="12.0" height="14.0" fill-opacity="0.59"/><rect x="240.0" y="10.0" width="12.0" height="14.0" fill-opacity="0.60"/><rect x="252.0" y="10.0" width="12.0" height="14.0" fill-opacity="0.47"/><rect x="264.0" y="10.0" width="12.0" height="14.0" fill-opacity="0.13"/><rect x="276.0" y="10.0" width="12.0" height="14.0" fill-opacity="0.58"/><rect x="288.0" y="10.0" width="12.0" height="14.0" fill-opacity="0.48"/><rect x="300.0" y="10.0" width="12.0" height="14.0" fill-opacity="0.41"/><rect x="312.0" y="10.0" width="12.0" height="14.0" fill-opacity="0.47"/><rect x="324.0" y="10.0" width="12.0" height="14.0" fill-opacity="0.49"/><rect x="336.0" y="10.0" width="12.0" height="14.0" fill-opacity="0.63"/><rect x="348.0" y="10.0" width="12.0" height="14.0" fill-opacity="0.60"/><rect x="360.0" y="10.0" width="12.0" height="14.0" fill-opacity="0.41"/><rect x="372.0" y="10.0" width="12.0" height="14.0" fill-opacity="0.15"/><rect x="384.0" y="10.0" width="12.0" height="14.0" fill-opacity="0.59"/><rect x="396.0" y="10.0" width="12.0" height="14.0" fill-opacity="0.57"/><rect x="408.0" y="10.0" width="12.0" height="14.0" fill-opacity="0.45"/><rect x="420.0" y="10.0" width="12.0" height="14.0" fill-opacity="0.42"/><rect x="432.0" y="10.0" width="12.0" height="14.0" fill-opacity="0.18"/><rect x="444.0" y="10.0" width="12.0" height="14.0" fill-opacity="0.45"/><rect x="456.0" y="10.0" width="12.0" height="14.0" fill-opacity="0.25"/><rect x="468.0" y="10.0" width="12.0" height="14.0" fill-opacity="0.52"/><rect x="480.0" y="10.0" width="12.0" height="14.0" fill-opacity="0.59"/><rect x="492.0" y="10.0" width="12.0" height="14.0" fill-opacity="0.16"/><rect x="504.0" y="10.0" width="12.0" height="14.0" fill-opacity="0.48"/><rect x="516.0" y="10.0" width="12.0" height="14.0" fill-opacity="0.46"/><rect x="528.0" y="10.0" width="12.0" height="14.0" fill-opacity="0.47"/><rect x="540.0" y="10.0" width="12.0" height="14.0" fill-opacity="0.57"/><rect x="552.0" y="10.0" width="11.1" height="14.0" fill-opacity="0.43"/><rect x="0.0" y="24.0" width="12.0" height="12.0" fill-opacity="0.15"/><rect x="12.0" y="24.0" width="12.0" height="12.0" fill-opacity="0.30"/><rect x="24.0" y="24.0" width="12.0" height="12.0" fill-opacity="0.28"/><rect x="36.0" y="24.0" width="12.0" height="12.0" fill-opacity="0.23"/><rect x="48.0" y="24.0" width="12.0" height="12.0" fill-opacity="0.34"/><rect x="60.0" y="24.0" width="12.0" height="12.0" fill-opacity="0.10"/><rect x="72.0" y="24.0" width="12.0" height="12.0" fill-opacity="0.14"/><rect x="84.0" y="24.0" width="12.0" height="12.0" fill-opacity="0.19"/><rect x="96.0" y="24.0" width="12.0" height="12.0" fill-opacity="0.25"/><rect x="108.0" y="24.0" width="12.0" height="12.0" fill-opacity="0.34"/><rect x="120.0" y="24.0" width="12.0" height="12.0" fill-opacity="0.24"/><rect x="132.0" y="24.0" width="12.0" height="12.0" fill-opacity="0.31"/><rect x="144.0" y="24.0" width="12.0" height="12.0" fill-opacity="0.29"/><rect x="156.0" y="24.0" width="12.0" height="12.0" fill-opacity="0.21"/><rect x="168.0" y="24.0" width="12.0" height="12.0" fill-opacity="0.33"/><rect x="180.0" y="24.0" width="12.0" height="12.0" fill-opacity="0.09"/><rect x="192.0" y="24.0" width="12.0" height="12.0" fill-opacity="0.17"/><rect x="204.0" y="24.0" width="12.0" height="12.0" fill-opacity="0.32"/><rect x="216.0" y="24.0" width="12.0" height="12.0" fill-opacity="0.16"/><rect x="228.0" y="24.0" width="12.0" height="12.0" fill-opacity="0.34"/><rect x="240.0" y="24.0" width="12.0" height="12.0" fill-opacity="0.18"/><rect x="252.0" y="24.0" width="12.0" height="12.0" fill-opacity="0.30"/><rect x="264.0" y="24.0" width="12.0" height="12.0" fill-opacity="0.05"/><rect x="276.0" y="24.0" width="12.0" height="12.0" fill-opacity="0.17"/><rect x="288.0" y="24.0" width="12.0" height="12.0" fill-opacity="0.21"/><rect x="300.0" y="24.0" width="12.0" height="12.0" fill-opacity="0.17"/><rect x="312.0" y="24.0" width="12.0" height="12.0" fill-opacity="0.18"/><rect x="324.0" y="24.0" width="12.0" height="12.0" fill-opacity="0.30"/><rect x="336.0" y="24.0" width="12.0" height="12.0" fill-opacity="0.36"/><rect x="348.0" y="24.0" width="12.0" height="12.0" fill-opacity="0.22"/><rect x="360.0" y="24.0" width="12.0" height="12.0" fill-opacity="0.32"/><rect x="372.0" y="24.0" width="12.0" height="12.0" fill-opacity="0.07"/><rect x="384.0" y="24.0" width="12.0" height="12.0" fill-opacity="0.18"/><rect x="396.0" y="24.0" width="12.0" height="12.0" fill-opacity="0.16"/><rect x="408.0" y="24.0" width="12.0" height="12.0" fill-opacity="0.09"/><rect x="420.0" y="24.0" width="12.0" height="12.0" fill-opacity="0.23"/><rect x="432.0" y="24.0" width="12.0" height="12.0" fill-opacity="0.30"/><rect x="444.0" y="24.0" width="12.0" height="12.0" fill-opacity="0.28"/><rect x="456.0" y="24.0" width="12.0" height="12.0" fill-opacity="0.16"/><rect x="468.0" y="24.0" width="12.0" height="12.0" fill-opacity="0.23"/><rect x="480.0" y="24.0" width="12.0" height="12.0" fill-opacity="0.35"/><rect x="492.0" y="24.0" width="12.0" height="12.0" fill-opacity="0.08"/><rect x="504.0" y="24.0" width="12.0" height="12.0" fill-opacity="0.31"/><rect x="516.0" y="24.0" width="12.0" height="12.0" fill-opacity="0.18"/><rect x="528.0" y="24.0" width="12.0" height="12.0" fill-opacity="0.34"/><rect x="540.0" y="24.0" width="12.0" height="12.0" fill-opacity="0.30"/><rect x="552.0" y="24.0" width="11.1" height="12.0" fill-opacity="0.29"/></g></svg>
<svg class="r" style="left:198px;top:962.7px" width="661.6" height="35"><g fill="#2b86f7"><rect x="0.0" y="0.0" width="12.0" height="10.0" fill-opacity="0.29"/><rect x="12.0" y="0.0" width="12.0" height="10.0" fill-opacity="0.18"/><rect x="24.0" y="0.0" width="12.0" height="10.0" fill-opacity="0.12"/><rect x="36.0" y="0.0" width="12.0" height="10.0" fill-opacity="0.08"/><rect x="48.0" y="0.0" width="12.0" height="10.0" fill-opacity="0.29"/><rect x="60.0" y="0.0" width="12.0" height="10.0" fill-opacity="0.24"/><rect x="72.0" y="0.0" width="12.0" height="10.0" fill-opacity="0.09"/><rect x="84.0" y="0.0" width="12.0" height="10.0" fill-opacity="0.06"/><rect x="96.0" y="0.0" width="12.0" height="10.0" fill-opacity="0.28"/><rect x="108.0" y="0.0" width="12.0" height="10.0" fill-opacity="0.11"/><rect x="120.0" y="0.0" width="12.0" height="10.0" fill-opacity="0.13"/><rect x="132.0" y="0.0" width="12.0" height="10.0" fill-opacity="0.31"/><rect x="144.0" y="0.0" width="12.0" height="10.0" fill-opacity="0.16"/><rect x="156.0" y="0.0" width="12.0" height="10.0" fill-opacity="0.19"/><rect x="168.0" y="0.0" width="12.0" height="10.0" fill-opacity="0.08"/><rect x="180.0" y="0.0" width="12.0" height="10.0" fill-opacity="0.08"/><rect x="192.0" y="0.0" width="12.0" height="10.0" fill-opacity="0.17"/><rect x="204.0" y="0.0" width="12.0" height="10.0" fill-opacity="0.26"/><rect x="216.0" y="0.0" width="12.0" height="10.0" fill-opacity="0.32"/><rect x="228.0" y="0.0" width="12.0" height="10.0" fill-opacity="0.20"/><rect x="240.0" y="0.0" width="12.0" height="10.0" fill-opacity="0.25"/><rect x="252.0" y="0.0" width="12.0" height="10.0" fill-opacity="0.23"/><rect x="264.0" y="0.0" width="12.0" height="10.0" fill-opacity="0.07"/><rect x="276.0" y="0.0" width="12.0" height="10.0" fill-opacity="0.03"/><rect x="288.0" y="0.0" width="12.0" height="10.0" fill-opacity="0.30"/><rect x="300.0" y="0.0" width="12.0" height="10.0" fill-opacity="0.24"/><rect x="312.0" y="0.0" width="12.0" height="10.0" fill-opacity="0.11"/><rect x="324.0" y="0.0" width="12.0" height="10.0" fill-opacity="0.18"/><rect x="336.0" y="0.0" width="12.0" height="10.0" fill-opacity="0.31"/><rect x="348.0" y="0.0" width="12.0" height="10.0" fill-opacity="0.31"/><rect x="360.0" y="0.0" width="12.0" height="10.0" fill-opacity="0.12"/><rect x="372.0" y="0.0" width="12.0" height="10.0" fill-opacity="0.03"/><rect x="384.0" y="0.0" width="12.0" height="10.0" fill-opacity="0.27"/><rect x="396.0" y="0.0" width="12.0" height="10.0" fill-opacity="0.23"/><rect x="408.0" y="0.0" width="12.0" height="10.0" fill-opacity="0.28"/><rect x="420.0" y="0.0" width="12.0" height="10.0" fill-opacity="0.24"/><rect x="432.0" y="0.0" width="12.0" height="10.0" fill-opacity="0.27"/><rect x="444.0" y="0.0" width="12.0" height="10.0" fill-opacity="0.32"/><rect x="456.0" y="0.0" width="12.0" height="10.0" fill-opacity="0.24"/><rect x="468.0" y="0.0" width="12.0" height="10.0" fill-opacity="0.19"/><rect x="480.0" y="0.0" width="12.0" height="10.0" fill-opacity="0.14"/><rect x="492.0" y="0.0" width="12.0" height="10.0" fill-opacity="0.24"/><rect x="504.0" y="0.0" width="12.0" height="10.0" fill-opacity="0.07"/><rect x="516.0" y="0.0" width="12.0" height="10.0" fill-opacity="0.20"/><rect x="528.0" y="0.0" width="12.0" height="10.0" fill-opacity="0.27"/><rect x="540.0" y="0.0" width="12.0" height="10.0" fill-opacity="0.24"/><rect x="552.0" y="0.0" width="12.0" height="10.0" fill-opacity="0.20"/><rect x="564.0" y="0.0" width="12.0" height="10.0" fill-opacity="0.10"/><rect x="576.0" y="0.0" width="12.0" height="10.0" fill-opacity="0.12"/><rect x="588.0" y="0.0" width="12.0" height="10.0" fill-opacity="0.17"/><rect x="600.0" y="0.0" width="12.0" height="10.0" fill-opacity="0.22"/><rect x="612.0" y="0.0" width="12.0" height="10.0" fill-opacity="0.31"/><rect x="624.0" y="0.0" width="12.0" height="10.0" fill-opacity="0.16"/><rect x="636.0" y="0.0" width="12.0" height="10.0" fill-opacity="0.07"/><rect x="648.0" y="0.0" width="12.0" height="10.0" fill-opacity="0.05"/><rect x="660.0" y="0.0" width="0.6" height="10.0" fill-opacity="0.15"/><rect x="0.0" y="10.0" width="12.0" height="13.0" fill-opacity="0.54"/><rect x="12.0" y="10.0" width="12.0" height="13.0" fill-opacity="0.44"/><rect x="24.0" y="10.0" width="12.0" height="13.0" fill-opacity="0.59"/><rect x="36.0" y="10.0" width="12.0" height="13.0" fill-opacity="0.50"/><rect x="48.0" y="10.0" width="12.0" height="13.0" fill-opacity="0.55"/><rect x="60.0" y="10.0" width="12.0" height="13.0" fill-opacity="0.63"/><rect x="72.0" y="10.0" width="12.0" height="13.0" fill-opacity="0.18"/><rect x="84.0" y="10.0" width="12.0" height="13.0" fill-opacity="0.53"/><rect x="96.0" y="10.0" width="12.0" height="13.0" fill-opacity="0.47"/><rect x="108.0" y="10.0" width="12.0" height="13.0" fill-opacity="0.18"/><rect x="120.0" y="10.0" width="12.0" height="13.0" fill-opacity="0.60"/><rect x="132.0" y="10.0" width="12.0" height="13.0" fill-opacity="0.43"/><rect x="144.0" y="10.0" width="12.0" height="13.0" fill-opacity="0.50"/><rect x="156.0" y="10.0" width="12.0" height="13.0" fill-opacity="0.51"/><rect x="168.0" y="10.0" width="12.0" height="13.0" fill-opacity="0.52"/><rect x="180.0" y="10.0" width="12.0" height="13.0" fill-opacity="0.17"/><rect x="192.0" y="10.0" width="12.0" height="13.0" fill-opacity="0.46"/><rect x="204.0" y="10.0" width="12.0" height="13.0" fill-opacity="0.54"/><rect x="216.0" y="10.0" width="12.0" height="13.0" fill-opacity="0.44"/><rect x="228.0" y="10.0" width="12.0" height="13.0" fill-opacity="0.57"/><rect x="240.0" y="10.0" width="12.0" height="13.0" fill-opacity="0.47"/><rect x="252.0" y="10.0" width="12.0" height="13.0" fill-opacity="0.50"/><rect x="264.0" y="10.0" width="12.0" height="13.0" fill-opacity="0.56"/><rect x="276.0" y="10.0" width="12.0" height="13.0" fill-opacity="0.15"/><rect x="288.0" y="10.0" width="12.0" height="13.0" fill-opacity="0.22"/><rect x="300.0" y="10.0" width="12.0" height="13.0" fill-opacity="0.41"/><rect x="312.0" y="10.0" width="12.0" height="13.0" fill-opacity="0.64"/><rect x="324.0" y="10.0" width="12.0" height="13.0" fill-opacity="0.42"/><rect x="336.0" y="10.0" width="12.0" height="13.0" fill-opacity="0.58"/><rect x="348.0" y="10.0" width="12.0" height="13.0" fill-opacity="0.45"/><rect x="360.0" y="10.0" width="12.0" height="13.0" fill-opacity="0.43"/><rect x="372.0" y="10.0" width="12.0" height="13.0" fill-opacity="0.17"/><rect x="384.0" y="10.0" width="12.0" height="13.0" fill-opacity="0.48"/><rect x="396.0" y="10.0" width="12.0" height="13.0" fill-opacity="0.53"/><rect x="408.0" y="10.0" width="12.0" height="13.0" fill-opacity="0.47"/><rect x="420.0" y="10.0" width="12.0" height="13.0" fill-opacity="0.18"/><rect x="432.0" y="10.0" width="12.0" height="13.0" fill-opacity="0.47"/><rect x="444.0" y="10.0" width="12.0" height="13.0" fill-opacity="0.52"/><rect x="456.0" y="10.0" width="12.0" height="13.0" fill-opacity="0.64"/><rect x="468.0" y="10.0" width="12.0" height="13.0" fill-opacity="0.48"/><rect x="480.0" y="10.0" width="12.0" height="13.0" fill-opacity="0.52"/><rect x="492.0" y="10.0" width="12.0" height="13.0" fill-opacity="0.45"/><rect x="504.0" y="10.0" width="12.0" height="13.0" fill-opacity="0.13"/><rect x="516.0" y="10.0" width="12.0" height="13.0" fill-opacity="0.63"/><rect x="528.0" y="10.0" width="12.0" height="13.0" fill-opacity="0.64"/><rect x="540.0" y="10.0" width="12.0" height="13.0" fill-opacity="0.53"/><rect x="552.0" y="10.0" width="12.0" height="13.0" fill-opacity="0.54"/><rect x="564.0" y="10.0" width="12.0" height="13.0" fill-opacity="0.17"/><rect x="576.0" y="10.0" width="12.0" height="13.0" fill-opacity="0.60"/><rect x="588.0" y="10.0" width="12.0" height="13.0" fill-opacity="0.23"/><rect x="600.0" y="10.0" width="12.0" height="13.0" fill-opacity="0.52"/><rect x="612.0" y="10.0" width="12.0" height="13.0" fill-opacity="0.49"/><rect x="624.0" y="10.0" width="12.0" height="13.0" fill-opacity="0.56"/><rect x="636.0" y="10.0" width="12.0" height="13.0" fill-opacity="0.18"/><rect x="648.0" y="10.0" width="12.0" height="13.0" fill-opacity="0.17"/><rect x="660.0" y="10.0" width="0.6" height="13.0" fill-opacity="0.55"/><rect x="0.0" y="23.0" width="12.0" height="11.0" fill-opacity="0.14"/><rect x="12.0" y="23.0" width="12.0" height="11.0" fill-opacity="0.31"/><rect x="24.0" y="23.0" width="12.0" height="11.0" fill-opacity="0.12"/><rect x="36.0" y="23.0" width="12.0" height="11.0" fill-opacity="0.10"/><rect x="48.0" y="23.0" width="12.0" height="11.0" fill-opacity="0.13"/><rect x="60.0" y="23.0" width="12.0" height="11.0" fill-opacity="0.27"/><rect x="72.0" y="23.0" width="12.0" height="11.0" fill-opacity="0.04"/><rect x="84.0" y="23.0" width="12.0" height="11.0" fill-opacity="0.04"/><rect x="96.0" y="23.0" width="12.0" height="11.0" fill-opacity="0.24"/><rect x="108.0" y="23.0" width="12.0" height="11.0" fill-opacity="0.32"/><rect x="120.0" y="23.0" width="12.0" height="11.0" fill-opacity="0.23"/><rect x="132.0" y="23.0" width="12.0" height="11.0" fill-opacity="0.29"/><rect x="144.0" y="23.0" width="12.0" height="11.0" fill-opacity="0.27"/><rect x="156.0" y="23.0" width="12.0" height="11.0" fill-opacity="0.12"/><rect x="168.0" y="23.0" width="12.0" height="11.0" fill-opacity="0.24"/><rect x="180.0" y="23.0" width="12.0" height="11.0" fill-opacity="0.08"/><rect x="192.0" y="23.0" width="12.0" height="11.0" fill-opacity="0.14"/><rect x="204.0" y="23.0" width="12.0" height="11.0" fill-opacity="0.23"/><rect x="216.0" y="23.0" width="12.0" height="11.0" fill-opacity="0.21"/><rect x="228.0" y="23.0" width="12.0" height="11.0" fill-opacity="0.25"/><rect x="240.0" y="23.0" width="12.0" height="11.0" fill-opacity="0.10"/><rect x="252.0" y="23.0" width="12.0" height="11.0" fill-opacity="0.34"/><rect x="264.0" y="23.0" width="12.0" height="11.0" fill-opacity="0.15"/><rect x="276.0" y="23.0" width="12.0" height="11.0" fill-opacity="0.06"/><rect x="288.0" y="23.0" width="12.0" height="11.0" fill-opacity="0.17"/><rect x="300.0" y="23.0" width="12.0" height="11.0" fill-opacity="0.21"/><rect x="312.0" y="23.0" width="12.0" height="11.0" fill-opacity="0.32"/><rect x="324.0" y="23.0" width="12.0" height="11.0" fill-opacity="0.28"/><rect x="336.0" y="23.0" width="12.0" height="11.0" fill-opacity="0.13"/><rect x="348.0" y="23.0" width="12.0" height="11.0" fill-opacity="0.17"/><rect x="360.0" y="23.0" width="12.0" height="11.0" fill-opacity="0.22"/><rect x="372.0" y="23.0" width="12.0" height="11.0" fill-opacity="0.09"/><rect x="384.0" y="23.0" width="12.0" height="11.0" fill-opacity="0.13"/><rect x="396.0" y="23.0" width="12.0" height="11.0" fill-opacity="0.04"/><rect x="408.0" y="23.0" width="12.0" height="11.0" fill-opacity="0.31"/><rect x="420.0" y="23.0" width="12.0" height="11.0" fill-opacity="0.25"/><rect x="432.0" y="23.0" width="12.0" height="11.0" fill-opacity="0.17"/><rect x="444.0" y="23.0" width="12.0" height="11.0" fill-opacity="0.33"/><rect x="456.0" y="23.0" width="12.0" height="11.0" fill-opacity="0.25"/><rect x="468.0" y="23.0" width="12.0" height="11.0" fill-opacity="0.33"/><rect x="480.0" y="23.0" width="12.0" height="11.0" fill-opacity="0.21"/><rect x="492.0" y="23.0" width="12.0" height="11.0" fill-opacity="0.33"/><rect x="504.0" y="23.0" width="12.0" height="11.0" fill-opacity="0.10"/><rect x="516.0" y="23.0" width="12.0" height="11.0" fill-opacity="0.14"/><rect x="528.0" y="23.0" width="12.0" height="11.0" fill-opacity="0.21"/><rect x="540.0" y="23.0" width="12.0" height="11.0" fill-opacity="0.21"/><rect x="552.0" y="23.0" width="12.0" height="11.0" fill-opacity="0.28"/><rect x="564.0" y="23.0" width="12.0" height="11.0" fill-opacity="0.17"/><rect x="576.0" y="23.0" width="12.0" height="11.0" fill-opacity="0.26"/><rect x="588.0" y="23.0" width="12.0" height="11.0" fill-opacity="0.24"/><rect x="600.0" y="23.0" width="12.0" height="11.0" fill-opacity="0.11"/><rect x="612.0" y="23.0" width="12.0" height="11.0" fill-opacity="0.14"/><rect x="624.0" y="23.0" width="12.0" height="11.0" fill-opacity="0.24"/><rect x="636.0" y="23.0" width="12.0" height="11.0" fill-opacity="0.05"/><rect x="648.0" y="23.0" width="12.0" height="11.0" fill-opacity="0.19"/><rect x="660.0" y="23.0" width="0.6" height="11.0" fill-opacity="0.29"/></g></svg>
<svg class="r" style="left:209px;top:1174px" width="618.5" height="30"><g fill="#2b86f7"><rect x="0.0" y="0.0" width="12.0" height="8.0" fill-opacity="0.18"/><rect x="12.0" y="0.0" width="12.0" height="8.0" fill-opacity="0.28"/><rect x="24.0" y="0.0" width="12.0" height="8.0" fill-opacity="0.09"/><rect x="36.0" y="0.0" width="12.0" height="8.0" fill-opacity="0.27"/><rect x="48.0" y="0.0" width="12.0" height="8.0" fill-opacity="0.22"/><rect x="60.0" y="0.0" width="12.0" height="8.0" fill-opacity="0.28"/><rect x="72.0" y="0.0" width="12.0" height="8.0" fill-opacity="0.07"/><rect x="84.0" y="0.0" width="12.0" height="8.0" fill-opacity="0.30"/><rect x="96.0" y="0.0" width="12.0" height="8.0" fill-opacity="0.10"/><rect x="108.0" y="0.0" width="12.0" height="8.0" fill-opacity="0.27"/><rect x="120.0" y="0.0" width="12.0" height="8.0" fill-opacity="0.26"/><rect x="132.0" y="0.0" width="12.0" height="8.0" fill-opacity="0.14"/><rect x="144.0" y="0.0" width="12.0" height="8.0" fill-opacity="0.24"/><rect x="156.0" y="0.0" width="12.0" height="8.0" fill-opacity="0.13"/><rect x="168.0" y="0.0" width="12.0" height="8.0" fill-opacity="0.08"/><rect x="180.0" y="0.0" width="12.0" height="8.0" fill-opacity="0.27"/><rect x="192.0" y="0.0" width="12.0" height="8.0" fill-opacity="0.10"/><rect x="204.0" y="0.0" width="12.0" height="8.0" fill-opacity="0.27"/><rect x="216.0" y="0.0" width="12.0" height="8.0" fill-opacity="0.22"/><rect x="228.0" y="0.0" width="12.0" height="8.0" fill-opacity="0.29"/><rect x="240.0" y="0.0" width="12.0" height="8.0" fill-opacity="0.19"/><rect x="252.0" y="0.0" width="12.0" height="8.0" fill-opacity="0.13"/><rect x="264.0" y="0.0" width="12.0" height="8.0" fill-opacity="0.12"/><rect x="276.0" y="0.0" width="12.0" height="8.0" fill-opacity="0.17"/><rect x="288.0" y="0.0" width="12.0" height="8.0" fill-opacity="0.18"/><rect x="300.0" y="0.0" width="12.0" height="8.0" fill-opacity="0.03"/><rect x="312.0" y="0.0" width="12.0" height="8.0" fill-opacity="0.09"/><rect x="324.0" y="0.0" width="12.0" height="8.0" fill-opacity="0.17"/><rect x="336.0" y="0.0" width="12.0" height="8.0" fill-opacity="0.23"/><rect x="348.0" y="0.0" width="12.0" height="8.0" fill-opacity="0.12"/><rect x="360.0" y="0.0" width="12.0" height="8.0" fill-opacity="0.16"/><rect x="372.0" y="0.0" width="12.0" height="8.0" fill-opacity="0.03"/><rect x="384.0" y="0.0" width="12.0" height="8.0" fill-opacity="0.09"/><rect x="396.0" y="0.0" width="12.0" height="8.0" fill-opacity="0.29"/><rect x="408.0" y="0.0" width="12.0" height="8.0" fill-opacity="0.22"/><rect x="420.0" y="0.0" width="12.0" height="8.0" fill-opacity="0.27"/><rect x="432.0" y="0.0" width="12.0" height="8.0" fill-opacity="0.31"/><rect x="444.0" y="0.0" width="12.0" height="8.0" fill-opacity="0.28"/><rect x="456.0" y="0.0" width="12.0" height="8.0" fill-opacity="0.06"/><rect x="468.0" y="0.0" width="12.0" height="8.0" fill-opacity="0.04"/><rect x="480.0" y="0.0" width="12.0" height="8.0" fill-opacity="0.12"/><rect x="492.0" y="0.0" width="12.0" height="8.0" fill-opacity="0.09"/><rect x="504.0" y="0.0" width="12.0" height="8.0" fill-opacity="0.29"/><rect x="516.0" y="0.0" width="12.0" height="8.0" fill-opacity="0.31"/><rect x="528.0" y="0.0" width="12.0" height="8.0" fill-opacity="0.10"/><rect x="540.0" y="0.0" width="12.0" height="8.0" fill-opacity="0.18"/><rect x="552.0" y="0.0" width="12.0" height="8.0" fill-opacity="0.31"/><rect x="564.0" y="0.0" width="12.0" height="8.0" fill-opacity="0.06"/><rect x="576.0" y="0.0" width="12.0" height="8.0" fill-opacity="0.23"/><rect x="588.0" y="0.0" width="12.0" height="8.0" fill-opacity="0.24"/><rect x="600.0" y="0.0" width="12.0" height="8.0" fill-opacity="0.19"/><rect x="612.0" y="0.0" width="5.5" height="8.0" fill-opacity="0.31"/><rect x="0.0" y="8.0" width="12.0" height="12.0" fill-opacity="0.18"/><rect x="12.0" y="8.0" width="12.0" height="12.0" fill-opacity="0.46"/><rect x="24.0" y="8.0" width="12.0" height="12.0" fill-opacity="0.62"/><rect x="36.0" y="8.0" width="12.0" height="12.0" fill-opacity="0.24"/><rect x="48.0" y="8.0" width="12.0" height="12.0" fill-opacity="0.59"/><rect x="60.0" y="8.0" width="12.0" height="12.0" fill-opacity="0.56"/><rect x="72.0" y="8.0" width="12.0" height="12.0" fill-opacity="0.12"/><rect x="84.0" y="8.0" width="12.0" height="12.0" fill-opacity="0.43"/><rect x="96.0" y="8.0" width="12.0" height="12.0" fill-opacity="0.63"/><rect x="108.0" y="8.0" width="12.0" height="12.0" fill-opacity="0.47"/><rect x="120.0" y="8.0" width="12.0" height="12.0" fill-opacity="0.58"/><rect x="132.0" y="8.0" width="12.0" height="12.0" fill-opacity="0.48"/><rect x="144.0" y="8.0" width="12.0" height="12.0" fill-opacity="0.43"/><rect x="156.0" y="8.0" width="12.0" height="12.0" fill-opacity="0.44"/><rect x="168.0" y="8.0" width="12.0" height="12.0" fill-opacity="0.13"/><rect x="180.0" y="8.0" width="12.0" height="12.0" fill-opacity="0.23"/><rect x="192.0" y="8.0" width="12.0" height="12.0" fill-opacity="0.57"/><rect x="204.0" y="8.0" width="12.0" height="12.0" fill-opacity="0.41"/><rect x="216.0" y="8.0" width="12.0" height="12.0" fill-opacity="0.45"/><rect x="228.0" y="8.0" width="12.0" height="12.0" fill-opacity="0.61"/><rect x="240.0" y="8.0" width="12.0" height="12.0" fill-opacity="0.43"/><rect x="252.0" y="8.0" width="12.0" height="12.0" fill-opacity="0.42"/><rect x="264.0" y="8.0" width="12.0" height="12.0" fill-opacity="0.60"/><rect x="276.0" y="8.0" width="12.0" height="12.0" fill-opacity="0.51"/><rect x="288.0" y="8.0" width="12.0" height="12.0" fill-opacity="0.60"/><rect x="300.0" y="8.0" width="12.0" height="12.0" fill-opacity="0.17"/><rect x="312.0" y="8.0" width="12.0" height="12.0" fill-opacity="0.43"/><rect x="324.0" y="8.0" width="12.0" height="12.0" fill-opacity="0.41"/><rect x="336.0" y="8.0" width="12.0" height="12.0" fill-opacity="0.53"/><rect x="348.0" y="8.0" width="12.0" height="12.0" fill-opacity="0.61"/><rect x="360.0" y="8.0" width="12.0" height="12.0" fill-opacity="0.50"/><rect x="372.0" y="8.0" width="12.0" height="12.0" fill-opacity="0.14"/><rect x="384.0" y="8.0" width="12.0" height="12.0" fill-opacity="0.60"/><rect x="396.0" y="8.0" width="12.0" height="12.0" fill-opacity="0.44"/><rect x="408.0" y="8.0" width="12.0" height="12.0" fill-opacity="0.48"/><rect x="420.0" y="8.0" width="12.0" height="12.0" fill-opacity="0.43"/><rect x="432.0" y="8.0" width="12.0" height="12.0" fill-opacity="0.41"/><rect x="444.0" y="8.0" width="12.0" height="12.0" fill-opacity="0.56"/><rect x="456.0" y="8.0" width="12.0" height="12.0" fill-opacity="0.51"/><rect x="468.0" y="8.0" width="12.0" height="12.0" fill-opacity="0.14"/><rect x="480.0" y="8.0" width="12.0" height="12.0" fill-opacity="0.45"/><rect x="492.0" y="8.0" width="12.0" height="12.0" fill-opacity="0.64"/><rect x="504.0" y="8.0" width="12.0" height="12.0" fill-opacity="0.62"/><rect x="516.0" y="8.0" width="12.0" height="12.0" fill-opacity="0.47"/><rect x="528.0" y="8.0" width="12.0" height="12.0" fill-opacity="0.41"/><rect x="540.0" y="8.0" width="12.0" height="12.0" fill-opacity="0.47"/><rect x="552.0" y="8.0" width="12.0" height="12.0" fill-opacity="0.40"/><rect x="564.0" y="8.0" width="12.0" height="12.0" fill-opacity="0.14"/><rect x="576.0" y="8.0" width="12.0" height="12.0" fill-opacity="0.17"/><rect x="588.0" y="8.0" width="12.0" height="12.0" fill-opacity="0.60"/><rect x="600.0" y="8.0" width="12.0" height="12.0" fill-opacity="0.44"/><rect x="612.0" y="8.0" width="5.5" height="12.0" fill-opacity="0.62"/><rect x="0.0" y="20.0" width="12.0" height="9.0" fill-opacity="0.24"/><rect x="12.0" y="20.0" width="12.0" height="9.0" fill-opacity="0.14"/><rect x="24.0" y="20.0" width="12.0" height="9.0" fill-opacity="0.27"/><rect x="36.0" y="20.0" width="12.0" height="9.0" fill-opacity="0.12"/><rect x="48.0" y="20.0" width="12.0" height="9.0" fill-opacity="0.25"/><rect x="60.0" y="20.0" width="12.0" height="9.0" fill-opacity="0.17"/><rect x="72.0" y="20.0" width="12.0" height="9.0" fill-opacity="0.07"/><rect x="84.0" y="20.0" width="12.0" height="9.0" fill-opacity="0.27"/><rect x="96.0" y="20.0" width="12.0" height="9.0" fill-opacity="0.24"/><rect x="108.0" y="20.0" width="12.0" height="9.0" fill-opacity="0.12"/><rect x="120.0" y="20.0" width="12.0" height="9.0" fill-opacity="0.20"/><rect x="132.0" y="20.0" width="12.0" height="9.0" fill-opacity="0.11"/><rect x="144.0" y="20.0" width="12.0" height="9.0" fill-opacity="0.18"/><rect x="156.0" y="20.0" width="12.0" height="9.0" fill-opacity="0.31"/><rect x="168.0" y="20.0" width="12.0" height="9.0" fill-opacity="0.03"/><rect x="180.0" y="20.0" width="12.0" height="9.0" fill-opacity="0.32"/><rect x="192.0" y="20.0" width="12.0" height="9.0" fill-opacity="0.31"/><rect x="204.0" y="20.0" width="12.0" height="9.0" fill-opacity="0.14"/><rect x="216.0" y="20.0" width="12.0" height="9.0" fill-opacity="0.19"/><rect x="228.0" y="20.0" width="12.0" height="9.0" fill-opacity="0.19"/><rect x="240.0" y="20.0" width="12.0" height="9.0" fill-opacity="0.10"/><rect x="252.0" y="20.0" width="12.0" height="9.0" fill-opacity="0.21"/><rect x="264.0" y="20.0" width="12.0" height="9.0" fill-opacity="0.13"/><rect x="276.0" y="20.0" width="12.0" height="9.0" fill-opacity="0.30"/><rect x="288.0" y="20.0" width="12.0" height="9.0" fill-opacity="0.18"/><rect x="300.0" y="20.0" width="12.0" height="9.0" fill-opacity="0.06"/><rect x="312.0" y="20.0" width="12.0" height="9.0" fill-opacity="0.11"/><rect x="324.0" y="20.0" width="12.0" height="9.0" fill-opacity="0.31"/><rect x="336.0" y="20.0" width="12.0" height="9.0" fill-opacity="0.22"/><rect x="348.0" y="20.0" width="12.0" height="9.0" fill-opacity="0.23"/><rect x="360.0" y="20.0" width="12.0" height="9.0" fill-opacity="0.10"/><rect x="372.0" y="20.0" width="12.0" height="9.0" fill-opacity="0.05"/><rect x="384.0" y="20.0" width="12.0" height="9.0" fill-opacity="0.14"/><rect x="396.0" y="20.0" width="12.0" height="9.0" fill-opacity="0.16"/><rect x="408.0" y="20.0" width="12.0" height="9.0" fill-opacity="0.11"/><rect x="420.0" y="20.0" width="12.0" height="9.0" fill-opacity="0.27"/><rect x="432.0" y="20.0" width="12.0" height="9.0" fill-opacity="0.10"/><rect x="444.0" y="20.0" width="12.0" height="9.0" fill-opacity="0.24"/><rect x="456.0" y="20.0" width="12.0" height="9.0" fill-opacity="0.27"/><rect x="468.0" y="20.0" width="12.0" height="9.0" fill-opacity="0.09"/><rect x="480.0" y="20.0" width="12.0" height="9.0" fill-opacity="0.11"/><rect x="492.0" y="20.0" width="12.0" height="9.0" fill-opacity="0.13"/><rect x="504.0" y="20.0" width="12.0" height="9.0" fill-opacity="0.22"/><rect x="516.0" y="20.0" width="12.0" height="9.0" fill-opacity="0.13"/><rect x="528.0" y="20.0" width="12.0" height="9.0" fill-opacity="0.13"/><rect x="540.0" y="20.0" width="12.0" height="9.0" fill-opacity="0.31"/><rect x="552.0" y="20.0" width="12.0" height="9.0" fill-opacity="0.24"/><rect x="564.0" y="20.0" width="12.0" height="9.0" fill-opacity="0.04"/><rect x="576.0" y="20.0" width="12.0" height="9.0" fill-opacity="0.30"/><rect x="588.0" y="20.0" width="12.0" height="9.0" fill-opacity="0.19"/><rect x="600.0" y="20.0" width="12.0" height="9.0" fill-opacity="0.30"/><rect x="612.0" y="20.0" width="5.5" height="9.0" fill-opacity="0.19"/></g></svg>
<svg class="r" style="left:209px;top:1252px" width="199" height="29"><g fill="#2b86f7"><rect x="0.0" y="0.0" width="12.0" height="9.0" fill-opacity="0.19"/><rect x="12.0" y="0.0" width="12.0" height="9.0" fill-opacity="0.23"/><rect x="24.0" y="0.0" width="12.0" height="9.0" fill-opacity="0.32"/><rect x="36.0" y="0.0" width="12.0" height="9.0" fill-opacity="0.33"/><rect x="48.0" y="0.0" width="12.0" height="9.0" fill-opacity="0.14"/><rect x="60.0" y="0.0" width="12.0" height="9.0" fill-opacity="0.11"/><rect x="72.0" y="0.0" width="12.0" height="9.0" fill-opacity="0.35"/><rect x="84.0" y="0.0" width="12.0" height="9.0" fill-opacity="0.23"/><rect x="96.0" y="0.0" width="12.0" height="9.0" fill-opacity="0.22"/><rect x="108.0" y="0.0" width="12.0" height="9.0" fill-opacity="0.15"/><rect x="120.0" y="0.0" width="12.0" height="9.0" fill-opacity="0.10"/><rect x="132.0" y="0.0" width="12.0" height="9.0" fill-opacity="0.16"/><rect x="144.0" y="0.0" width="12.0" height="9.0" fill-opacity="0.32"/><rect x="156.0" y="0.0" width="12.0" height="9.0" fill-opacity="0.08"/><rect x="168.0" y="0.0" width="12.0" height="9.0" fill-opacity="0.32"/><rect x="180.0" y="0.0" width="12.0" height="9.0" fill-opacity="0.14"/><rect x="192.0" y="0.0" width="6.0" height="9.0" fill-opacity="0.28"/><rect x="0.0" y="9.0" width="12.0" height="10.0" fill-opacity="0.54"/><rect x="12.0" y="9.0" width="12.0" height="10.0" fill-opacity="0.51"/><rect x="24.0" y="9.0" width="12.0" height="10.0" fill-opacity="0.53"/><rect x="36.0" y="9.0" width="12.0" height="10.0" fill-opacity="0.50"/><rect x="48.0" y="9.0" width="12.0" height="10.0" fill-opacity="0.61"/><rect x="60.0" y="9.0" width="12.0" height="10.0" fill-opacity="0.14"/><rect x="72.0" y="9.0" width="12.0" height="10.0" fill-opacity="0.54"/><rect x="84.0" y="9.0" width="12.0" height="10.0" fill-opacity="0.52"/><rect x="96.0" y="9.0" width="12.0" height="10.0" fill-opacity="0.50"/><rect x="108.0" y="9.0" width="12.0" height="10.0" fill-opacity="0.49"/><rect x="120.0" y="9.0" width="12.0" height="10.0" fill-opacity="0.42"/><rect x="132.0" y="9.0" width="12.0" height="10.0" fill-opacity="0.41"/><rect x="144.0" y="9.0" width="12.0" height="10.0" fill-opacity="0.48"/><rect x="156.0" y="9.0" width="12.0" height="10.0" fill-opacity="0.13"/><rect x="168.0" y="9.0" width="12.0" height="10.0" fill-opacity="0.40"/><rect x="180.0" y="9.0" width="12.0" height="10.0" fill-opacity="0.58"/><rect x="192.0" y="9.0" width="6.0" height="10.0" fill-opacity="0.52"/><rect x="0.0" y="19.0" width="12.0" height="9.0" fill-opacity="0.18"/><rect x="12.0" y="19.0" width="12.0" height="9.0" fill-opacity="0.24"/><rect x="24.0" y="19.0" width="12.0" height="9.0" fill-opacity="0.28"/><rect x="36.0" y="19.0" width="12.0" height="9.0" fill-opacity="0.20"/><rect x="48.0" y="19.0" width="12.0" height="9.0" fill-opacity="0.18"/><rect x="60.0" y="19.0" width="12.0" height="9.0" fill-opacity="0.07"/><rect x="72.0" y="19.0" width="12.0" height="9.0" fill-opacity="0.11"/><rect x="84.0" y="19.0" width="12.0" height="9.0" fill-opacity="0.21"/><rect x="96.0" y="19.0" width="12.0" height="9.0" fill-opacity="0.19"/><rect x="108.0" y="19.0" width="12.0" height="9.0" fill-opacity="0.25"/><rect x="120.0" y="19.0" width="12.0" height="9.0" fill-opacity="0.37"/><rect x="132.0" y="19.0" width="12.0" height="9.0" fill-opacity="0.32"/><rect x="144.0" y="19.0" width="12.0" height="9.0" fill-opacity="0.15"/><rect x="156.0" y="19.0" width="12.0" height="9.0" fill-opacity="0.07"/><rect x="168.0" y="19.0" width="12.0" height="9.0" fill-opacity="0.14"/><rect x="180.0" y="19.0" width="12.0" height="9.0" fill-opacity="0.24"/><rect x="192.0" y="19.0" width="6.0" height="9.0" fill-opacity="0.16"/></g></svg>
<svg class="r" style="left:209px;top:1328px" width="221" height="31"><g fill="#2b86f7"><rect x="0.0" y="0.0" width="12.0" height="10.0" fill-opacity="0.29"/><rect x="12.0" y="0.0" width="12.0" height="10.0" fill-opacity="0.18"/><rect x="24.0" y="0.0" width="12.0" height="10.0" fill-opacity="0.20"/><rect x="36.0" y="0.0" width="12.0" height="10.0" fill-opacity="0.15"/><rect x="48.0" y="0.0" width="12.0" height="10.0" fill-opacity="0.11"/><rect x="60.0" y="0.0" width="12.0" height="10.0" fill-opacity="0.37"/><rect x="72.0" y="0.0" width="12.0" height="10.0" fill-opacity="0.28"/><rect x="84.0" y="0.0" width="12.0" height="10.0" fill-opacity="0.30"/><rect x="96.0" y="0.0" width="12.0" height="10.0" fill-opacity="0.15"/><rect x="108.0" y="0.0" width="12.0" height="10.0" fill-opacity="0.26"/><rect x="120.0" y="0.0" width="12.0" height="10.0" fill-opacity="0.23"/><rect x="132.0" y="0.0" width="12.0" height="10.0" fill-opacity="0.17"/><rect x="144.0" y="0.0" width="12.0" height="10.0" fill-opacity="0.20"/><rect x="156.0" y="0.0" width="12.0" height="10.0" fill-opacity="0.05"/><rect x="168.0" y="0.0" width="12.0" height="10.0" fill-opacity="0.33"/><rect x="180.0" y="0.0" width="12.0" height="10.0" fill-opacity="0.20"/><rect x="192.0" y="0.0" width="12.0" height="10.0" fill-opacity="0.21"/><rect x="204.0" y="0.0" width="12.0" height="10.0" fill-opacity="0.27"/><rect x="216.0" y="0.0" width="4.0" height="10.0" fill-opacity="0.13"/><rect x="0.0" y="10.0" width="12.0" height="10.0" fill-opacity="0.64"/><rect x="12.0" y="10.0" width="12.0" height="10.0" fill-opacity="0.47"/><rect x="24.0" y="10.0" width="12.0" height="10.0" fill-opacity="0.59"/><rect x="36.0" y="10.0" width="12.0" height="10.0" fill-opacity="0.49"/><rect x="48.0" y="10.0" width="12.0" height="10.0" fill-opacity="0.18"/><rect x="60.0" y="10.0" width="12.0" height="10.0" fill-opacity="0.48"/><rect x="72.0" y="10.0" width="12.0" height="10.0" fill-opacity="0.55"/><rect x="84.0" y="10.0" width="12.0" height="10.0" fill-opacity="0.48"/><rect x="96.0" y="10.0" width="12.0" height="10.0" fill-opacity="0.61"/><rect x="108.0" y="10.0" width="12.0" height="10.0" fill-opacity="0.41"/><rect x="120.0" y="10.0" width="12.0" height="10.0" fill-opacity="0.62"/><rect x="132.0" y="10.0" width="12.0" height="10.0" fill-opacity="0.53"/><rect x="144.0" y="10.0" width="12.0" height="10.0" fill-opacity="0.55"/><rect x="156.0" y="10.0" width="12.0" height="10.0" fill-opacity="0.18"/><rect x="168.0" y="10.0" width="12.0" height="10.0" fill-opacity="0.57"/><rect x="180.0" y="10.0" width="12.0" height="10.0" fill-opacity="0.20"/><rect x="192.0" y="10.0" width="12.0" height="10.0" fill-opacity="0.56"/><rect x="204.0" y="10.0" width="12.0" height="10.0" fill-opacity="0.16"/><rect x="216.0" y="10.0" width="4.0" height="10.0" fill-opacity="0.46"/><rect x="0.0" y="20.0" width="12.0" height="10.0" fill-opacity="0.25"/><rect x="12.0" y="20.0" width="12.0" height="10.0" fill-opacity="0.35"/><rect x="24.0" y="20.0" width="12.0" height="10.0" fill-opacity="0.18"/><rect x="36.0" y="20.0" width="12.0" height="10.0" fill-opacity="0.23"/><rect x="48.0" y="20.0" width="12.0" height="10.0" fill-opacity="0.10"/><rect x="60.0" y="20.0" width="12.0" height="10.0" fill-opacity="0.27"/><rect x="72.0" y="20.0" width="12.0" height="10.0" fill-opacity="0.31"/><rect x="84.0" y="20.0" width="12.0" height="10.0" fill-opacity="0.22"/><rect x="96.0" y="20.0" width="12.0" height="10.0" fill-opacity="0.15"/><rect x="108.0" y="20.0" width="12.0" height="10.0" fill-opacity="0.17"/><rect x="120.0" y="20.0" width="12.0" height="10.0" fill-opacity="0.20"/><rect x="132.0" y="20.0" width="12.0" height="10.0" fill-opacity="0.35"/><rect x="144.0" y="20.0" width="12.0" height="10.0" fill-opacity="0.36"/><rect x="156.0" y="20.0" width="12.0" height="10.0" fill-opacity="0.08"/><rect x="168.0" y="20.0" width="12.0" height="10.0" fill-opacity="0.33"/><rect x="180.0" y="20.0" width="12.0" height="10.0" fill-opacity="0.34"/><rect x="192.0" y="20.0" width="12.0" height="10.0" fill-opacity="0.14"/><rect x="204.0" y="20.0" width="12.0" height="10.0" fill-opacity="0.16"/><rect x="216.0" y="20.0" width="4.0" height="10.0" fill-opacity="0.28"/></g></svg>
<svg class="r" style="left:209px;top:1408.6px" width="210" height="28"><g fill="#2b86f7"><rect x="0.0" y="0.0" width="12.0" height="9.0" fill-opacity="0.30"/><rect x="12.0" y="0.0" width="12.0" height="9.0" fill-opacity="0.35"/><rect x="24.0" y="0.0" width="12.0" height="9.0" fill-opacity="0.06"/><rect x="36.0" y="0.0" width="12.0" height="9.0" fill-opacity="0.14"/><rect x="48.0" y="0.0" width="12.0" height="9.0" fill-opacity="0.31"/><rect x="60.0" y="0.0" width="12.0" height="9.0" fill-opacity="0.34"/><rect x="72.0" y="0.0" width="12.0" height="9.0" fill-opacity="0.08"/><rect x="84.0" y="0.0" width="12.0" height="9.0" fill-opacity="0.16"/><rect x="96.0" y="0.0" width="12.0" height="9.0" fill-opacity="0.27"/><rect x="108.0" y="0.0" width="12.0" height="9.0" fill-opacity="0.25"/><rect x="120.0" y="0.0" width="12.0" height="9.0" fill-opacity="0.05"/><rect x="132.0" y="0.0" width="12.0" height="9.0" fill-opacity="0.36"/><rect x="144.0" y="0.0" width="12.0" height="9.0" fill-opacity="0.07"/><rect x="156.0" y="0.0" width="12.0" height="9.0" fill-opacity="0.23"/><rect x="168.0" y="0.0" width="12.0" height="9.0" fill-opacity="0.29"/><rect x="180.0" y="0.0" width="12.0" height="9.0" fill-opacity="0.27"/><rect x="192.0" y="0.0" width="12.0" height="9.0" fill-opacity="0.19"/><rect x="204.0" y="0.0" width="5.0" height="9.0" fill-opacity="0.14"/><rect x="0.0" y="9.0" width="12.0" height="9.0" fill-opacity="0.59"/><rect x="12.0" y="9.0" width="12.0" height="9.0" fill-opacity="0.40"/><rect x="24.0" y="9.0" width="12.0" height="9.0" fill-opacity="0.21"/><rect x="36.0" y="9.0" width="12.0" height="9.0" fill-opacity="0.43"/><rect x="48.0" y="9.0" width="12.0" height="9.0" fill-opacity="0.23"/><rect x="60.0" y="9.0" width="12.0" height="9.0" fill-opacity="0.39"/><rect x="72.0" y="9.0" width="12.0" height="9.0" fill-opacity="0.13"/><rect x="84.0" y="9.0" width="12.0" height="9.0" fill-opacity="0.42"/><rect x="96.0" y="9.0" width="12.0" height="9.0" fill-opacity="0.17"/><rect x="108.0" y="9.0" width="12.0" height="9.0" fill-opacity="0.59"/><rect x="120.0" y="9.0" width="12.0" height="9.0" fill-opacity="0.48"/><rect x="132.0" y="9.0" width="12.0" height="9.0" fill-opacity="0.59"/><rect x="144.0" y="9.0" width="12.0" height="9.0" fill-opacity="0.12"/><rect x="156.0" y="9.0" width="12.0" height="9.0" fill-opacity="0.54"/><rect x="168.0" y="9.0" width="12.0" height="9.0" fill-opacity="0.52"/><rect x="180.0" y="9.0" width="12.0" height="9.0" fill-opacity="0.48"/><rect x="192.0" y="9.0" width="12.0" height="9.0" fill-opacity="0.39"/><rect x="204.0" y="9.0" width="5.0" height="9.0" fill-opacity="0.40"/><rect x="0.0" y="18.0" width="12.0" height="9.0" fill-opacity="0.07"/><rect x="12.0" y="18.0" width="12.0" height="9.0" fill-opacity="0.29"/><rect x="24.0" y="18.0" width="12.0" height="9.0" fill-opacity="0.17"/><rect x="36.0" y="18.0" width="12.0" height="9.0" fill-opacity="0.29"/><rect x="48.0" y="18.0" width="12.0" height="9.0" fill-opacity="0.24"/><rect x="60.0" y="18.0" width="12.0" height="9.0" fill-opacity="0.18"/><rect x="72.0" y="18.0" width="12.0" height="9.0" fill-opacity="0.06"/><rect x="84.0" y="18.0" width="12.0" height="9.0" fill-opacity="0.17"/><rect x="96.0" y="18.0" width="12.0" height="9.0" fill-opacity="0.16"/><rect x="108.0" y="18.0" width="12.0" height="9.0" fill-opacity="0.06"/><rect x="120.0" y="18.0" width="12.0" height="9.0" fill-opacity="0.27"/><rect x="132.0" y="18.0" width="12.0" height="9.0" fill-opacity="0.11"/><rect x="144.0" y="18.0" width="12.0" height="9.0" fill-opacity="0.06"/><rect x="156.0" y="18.0" width="12.0" height="9.0" fill-opacity="0.27"/><rect x="168.0" y="18.0" width="12.0" height="9.0" fill-opacity="0.19"/><rect x="180.0" y="18.0" width="12.0" height="9.0" fill-opacity="0.14"/><rect x="192.0" y="18.0" width="12.0" height="9.0" fill-opacity="0.13"/><rect x="204.0" y="18.0" width="5.0" height="9.0" fill-opacity="0.23"/></g></svg>
<svg class="r" style="left:209px;top:1489px" width="216" height="29"><g fill="#2b86f7"><rect x="0.0" y="0.0" width="12.0" height="9.0" fill-opacity="0.18"/><rect x="12.0" y="0.0" width="12.0" height="9.0" fill-opacity="0.29"/><rect x="24.0" y="0.0" width="12.0" height="9.0" fill-opacity="0.37"/><rect x="36.0" y="0.0" width="12.0" height="9.0" fill-opacity="0.24"/><rect x="48.0" y="0.0" width="12.0" height="9.0" fill-opacity="0.26"/><rect x="60.0" y="0.0" width="12.0" height="9.0" fill-opacity="0.08"/><rect x="72.0" y="0.0" width="12.0" height="9.0" fill-opacity="0.16"/><rect x="84.0" y="0.0" width="12.0" height="9.0" fill-opacity="0.29"/><rect x="96.0" y="0.0" width="12.0" height="9.0" fill-opacity="0.33"/><rect x="108.0" y="0.0" width="12.0" height="9.0" fill-opacity="0.13"/><rect x="120.0" y="0.0" width="12.0" height="9.0" fill-opacity="0.30"/><rect x="132.0" y="0.0" width="12.0" height="9.0" fill-opacity="0.13"/><rect x="144.0" y="0.0" width="12.0" height="9.0" fill-opacity="0.30"/><rect x="156.0" y="0.0" width="12.0" height="9.0" fill-opacity="0.19"/><rect x="168.0" y="0.0" width="12.0" height="9.0" fill-opacity="0.10"/><rect x="180.0" y="0.0" width="12.0" height="9.0" fill-opacity="0.15"/><rect x="192.0" y="0.0" width="12.0" height="9.0" fill-opacity="0.32"/><rect x="204.0" y="0.0" width="11.0" height="9.0" fill-opacity="0.18"/><rect x="0.0" y="9.0" width="12.0" height="10.0" fill-opacity="0.42"/><rect x="12.0" y="9.0" width="12.0" height="10.0" fill-opacity="0.60"/><rect x="24.0" y="9.0" width="12.0" height="10.0" fill-opacity="0.49"/><rect x="36.0" y="9.0" width="12.0" height="10.0" fill-opacity="0.51"/><rect x="48.0" y="9.0" width="12.0" height="10.0" fill-opacity="0.55"/><rect x="60.0" y="9.0" width="12.0" height="10.0" fill-opacity="0.19"/><rect x="72.0" y="9.0" width="12.0" height="10.0" fill-opacity="0.44"/><rect x="84.0" y="9.0" width="12.0" height="10.0" fill-opacity="0.59"/><rect x="96.0" y="9.0" width="12.0" height="10.0" fill-opacity="0.25"/><rect x="108.0" y="9.0" width="12.0" height="10.0" fill-opacity="0.57"/><rect x="120.0" y="9.0" width="12.0" height="10.0" fill-opacity="0.64"/><rect x="132.0" y="9.0" width="12.0" height="10.0" fill-opacity="0.62"/><rect x="144.0" y="9.0" width="12.0" height="10.0" fill-opacity="0.47"/><rect x="156.0" y="9.0" width="12.0" height="10.0" fill-opacity="0.55"/><rect x="168.0" y="9.0" width="12.0" height="10.0" fill-opacity="0.17"/><rect x="180.0" y="9.0" width="12.0" height="10.0" fill-opacity="0.50"/><rect x="192.0" y="9.0" width="12.0" height="10.0" fill-opacity="0.50"/><rect x="204.0" y="9.0" width="11.0" height="10.0" fill-opacity="0.44"/><rect x="0.0" y="19.0" width="12.0" height="9.0" fill-opacity="0.26"/><rect x="12.0" y="19.0" width="12.0" height="9.0" fill-opacity="0.36"/><rect x="24.0" y="19.0" width="12.0" height="9.0" fill-opacity="0.18"/><rect x="36.0" y="19.0" width="12.0" height="9.0" fill-opacity="0.25"/><rect x="48.0" y="19.0" width="12.0" height="9.0" fill-opacity="0.29"/><rect x="60.0" y="19.0" width="12.0" height="9.0" fill-opacity="0.11"/><rect x="72.0" y="19.0" width="12.0" height="9.0" fill-opacity="0.16"/><rect x="84.0" y="19.0" width="12.0" height="9.0" fill-opacity="0.29"/><rect x="96.0" y="19.0" width="12.0" height="9.0" fill-opacity="0.34"/><rect x="108.0" y="19.0" width="12.0" height="9.0" fill-opacity="0.30"/><rect x="120.0" y="19.0" width="12.0" height="9.0" fill-opacity="0.12"/><rect x="132.0" y="19.0" width="12.0" height="9.0" fill-opacity="0.21"/><rect x="144.0" y="19.0" width="12.0" height="9.0" fill-opacity="0.21"/><rect x="156.0" y="19.0" width="12.0" height="9.0" fill-opacity="0.23"/><rect x="168.0" y="19.0" width="12.0" height="9.0" fill-opacity="0.11"/><rect x="180.0" y="19.0" width="12.0" height="9.0" fill-opacity="0.28"/><rect x="192.0" y="19.0" width="12.0" height="9.0" fill-opacity="0.26"/><rect x="204.0" y="19.0" width="11.0" height="9.0" fill-opacity="0.36"/></g></svg>
<svg class="r" style="left:209px;top:1565.8px" width="199" height="30"><g fill="#2b86f7"><rect x="0.0" y="0.0" width="12.0" height="10.0" fill-opacity="0.31"/><rect x="12.0" y="0.0" width="12.0" height="10.0" fill-opacity="0.28"/><rect x="24.0" y="0.0" width="12.0" height="10.0" fill-opacity="0.14"/><rect x="36.0" y="0.0" width="12.0" height="10.0" fill-opacity="0.23"/><rect x="48.0" y="0.0" width="12.0" height="10.0" fill-opacity="0.35"/><rect x="60.0" y="0.0" width="12.0" height="10.0" fill-opacity="0.09"/><rect x="72.0" y="0.0" width="12.0" height="10.0" fill-opacity="0.14"/><rect x="84.0" y="0.0" width="12.0" height="10.0" fill-opacity="0.32"/><rect x="96.0" y="0.0" width="12.0" height="10.0" fill-opacity="0.26"/><rect x="108.0" y="0.0" width="12.0" height="10.0" fill-opacity="0.28"/><rect x="120.0" y="0.0" width="12.0" height="10.0" fill-opacity="0.08"/><rect x="132.0" y="0.0" width="12.0" height="10.0" fill-opacity="0.22"/><rect x="144.0" y="0.0" width="12.0" height="10.0" fill-opacity="0.18"/><rect x="156.0" y="0.0" width="12.0" height="10.0" fill-opacity="0.16"/><rect x="168.0" y="0.0" width="12.0" height="10.0" fill-opacity="0.29"/><rect x="180.0" y="0.0" width="12.0" height="10.0" fill-opacity="0.19"/><rect x="192.0" y="0.0" width="6.0" height="10.0" fill-opacity="0.07"/><rect x="0.0" y="10.0" width="12.0" height="10.0" fill-opacity="0.62"/><rect x="12.0" y="10.0" width="12.0" height="10.0" fill-opacity="0.47"/><rect x="24.0" y="10.0" width="12.0" height="10.0" fill-opacity="0.43"/><rect x="36.0" y="10.0" width="12.0" height="10.0" fill-opacity="0.48"/><rect x="48.0" y="10.0" width="12.0" height="10.0" fill-opacity="0.53"/><rect x="60.0" y="10.0" width="12.0" height="10.0" fill-opacity="0.13"/><rect x="72.0" y="10.0" width="12.0" height="10.0" fill-opacity="0.56"/><rect x="84.0" y="10.0" width="12.0" height="10.0" fill-opacity="0.51"/><rect x="96.0" y="10.0" width="12.0" height="10.0" fill-opacity="0.60"/><rect x="108.0" y="10.0" width="12.0" height="10.0" fill-opacity="0.47"/><rect x="120.0" y="10.0" width="12.0" height="10.0" fill-opacity="0.18"/><rect x="132.0" y="10.0" width="12.0" height="10.0" fill-opacity="0.47"/><rect x="144.0" y="10.0" width="12.0" height="10.0" fill-opacity="0.57"/><rect x="156.0" y="10.0" width="12.0" height="10.0" fill-opacity="0.43"/><rect x="168.0" y="10.0" width="12.0" height="10.0" fill-opacity="0.51"/><rect x="180.0" y="10.0" width="12.0" height="10.0" fill-opacity="0.18"/><rect x="192.0" y="10.0" width="6.0" height="10.0" fill-opacity="0.12"/><rect x="0.0" y="20.0" width="12.0" height="9.0" fill-opacity="0.34"/><rect x="12.0" y="20.0" width="12.0" height="9.0" fill-opacity="0.12"/><rect x="24.0" y="20.0" width="12.0" height="9.0" fill-opacity="0.34"/><rect x="36.0" y="20.0" width="12.0" height="9.0" fill-opacity="0.13"/><rect x="48.0" y="20.0" width="12.0" height="9.0" fill-opacity="0.20"/><rect x="60.0" y="20.0" width="12.0" height="9.0" fill-opacity="0.07"/><rect x="72.0" y="20.0" width="12.0" height="9.0" fill-opacity="0.10"/><rect x="84.0" y="20.0" width="12.0" height="9.0" fill-opacity="0.25"/><rect x="96.0" y="20.0" width="12.0" height="9.0" fill-opacity="0.32"/><rect x="108.0" y="20.0" width="12.0" height="9.0" fill-opacity="0.16"/><rect x="120.0" y="20.0" width="12.0" height="9.0" fill-opacity="0.05"/><rect x="132.0" y="20.0" width="12.0" height="9.0" fill-opacity="0.29"/><rect x="144.0" y="20.0" width="12.0" height="9.0" fill-opacity="0.17"/><rect x="156.0" y="20.0" width="12.0" height="9.0" fill-opacity="0.25"/><rect x="168.0" y="20.0" width="12.0" height="9.0" fill-opacity="0.32"/><rect x="180.0" y="20.0" width="12.0" height="9.0" fill-opacity="0.29"/><rect x="192.0" y="20.0" width="6.0" height="9.0" fill-opacity="0.08"/></g></svg>
<svg class="r" style="left:209px;top:1645.5px" width="210" height="33"><g fill="#2b86f7"><rect x="0.0" y="0.0" width="12.0" height="10.0" fill-opacity="0.29"/><rect x="12.0" y="0.0" width="12.0" height="10.0" fill-opacity="0.19"/><rect x="24.0" y="0.0" width="12.0" height="10.0" fill-opacity="0.35"/><rect x="36.0" y="0.0" width="12.0" height="10.0" fill-opacity="0.08"/><rect x="48.0" y="0.0" width="12.0" height="10.0" fill-opacity="0.16"/><rect x="60.0" y="0.0" width="12.0" height="10.0" fill-opacity="0.11"/><rect x="72.0" y="0.0" width="12.0" height="10.0" fill-opacity="0.37"/><rect x="84.0" y="0.0" width="12.0" height="10.0" fill-opacity="0.14"/><rect x="96.0" y="0.0" width="12.0" height="10.0" fill-opacity="0.23"/><rect x="108.0" y="0.0" width="12.0" height="10.0" fill-opacity="0.37"/><rect x="120.0" y="0.0" width="12.0" height="10.0" fill-opacity="0.28"/><rect x="132.0" y="0.0" width="12.0" height="10.0" fill-opacity="0.18"/><rect x="144.0" y="0.0" width="12.0" height="10.0" fill-opacity="0.28"/><rect x="156.0" y="0.0" width="12.0" height="10.0" fill-opacity="0.36"/><rect x="168.0" y="0.0" width="12.0" height="10.0" fill-opacity="0.07"/><rect x="180.0" y="0.0" width="12.0" height="10.0" fill-opacity="0.18"/><rect x="192.0" y="0.0" width="12.0" height="10.0" fill-opacity="0.14"/><rect x="204.0" y="0.0" width="5.0" height="10.0" fill-opacity="0.33"/><rect x="0.0" y="10.0" width="12.0" height="11.0" fill-opacity="0.17"/><rect x="12.0" y="10.0" width="12.0" height="11.0" fill-opacity="0.41"/><rect x="24.0" y="10.0" width="12.0" height="11.0" fill-opacity="0.25"/><rect x="36.0" y="10.0" width="12.0" height="11.0" fill-opacity="0.40"/><rect x="48.0" y="10.0" width="12.0" height="11.0" fill-opacity="0.44"/><rect x="60.0" y="10.0" width="12.0" height="11.0" fill-opacity="0.15"/><rect x="72.0" y="10.0" width="12.0" height="11.0" fill-opacity="0.40"/><rect x="84.0" y="10.0" width="12.0" height="11.0" fill-opacity="0.56"/><rect x="96.0" y="10.0" width="12.0" height="11.0" fill-opacity="0.51"/><rect x="108.0" y="10.0" width="12.0" height="11.0" fill-opacity="0.52"/><rect x="120.0" y="10.0" width="12.0" height="11.0" fill-opacity="0.53"/><rect x="132.0" y="10.0" width="12.0" height="11.0" fill-opacity="0.44"/><rect x="144.0" y="10.0" width="12.0" height="11.0" fill-opacity="0.55"/><rect x="156.0" y="10.0" width="12.0" height="11.0" fill-opacity="0.59"/><rect x="168.0" y="10.0" width="12.0" height="11.0" fill-opacity="0.14"/><rect x="180.0" y="10.0" width="12.0" height="11.0" fill-opacity="0.56"/><rect x="192.0" y="10.0" width="12.0" height="11.0" fill-opacity="0.50"/><rect x="204.0" y="10.0" width="5.0" height="11.0" fill-opacity="0.56"/><rect x="0.0" y="21.0" width="12.0" height="11.0" fill-opacity="0.31"/><rect x="12.0" y="21.0" width="12.0" height="11.0" fill-opacity="0.25"/><rect x="24.0" y="21.0" width="12.0" height="11.0" fill-opacity="0.15"/><rect x="36.0" y="21.0" width="12.0" height="11.0" fill-opacity="0.27"/><rect x="48.0" y="21.0" width="12.0" height="11.0" fill-opacity="0.24"/><rect x="60.0" y="21.0" width="12.0" height="11.0" fill-opacity="0.10"/><rect x="72.0" y="21.0" width="12.0" height="11.0" fill-opacity="0.19"/><rect x="84.0" y="21.0" width="12.0" height="11.0" fill-opacity="0.21"/><rect x="96.0" y="21.0" width="12.0" height="11.0" fill-opacity="0.15"/><rect x="108.0" y="21.0" width="12.0" height="11.0" fill-opacity="0.15"/><rect x="120.0" y="21.0" width="12.0" height="11.0" fill-opacity="0.15"/><rect x="132.0" y="21.0" width="12.0" height="11.0" fill-opacity="0.26"/><rect x="144.0" y="21.0" width="12.0" height="11.0" fill-opacity="0.26"/><rect x="156.0" y="21.0" width="12.0" height="11.0" fill-opacity="0.15"/><rect x="168.0" y="21.0" width="12.0" height="11.0" fill-opacity="0.07"/><rect x="180.0" y="21.0" width="12.0" height="11.0" fill-opacity="0.27"/><rect x="192.0" y="21.0" width="12.0" height="11.0" fill-opacity="0.32"/><rect x="204.0" y="21.0" width="5.0" height="11.0" fill-opacity="0.30"/></g></svg>
<svg class="r" style="left:0px;top:0px" width="2512" height="1810" viewBox="0 0 2512 1810"><circle cx="1418.9" cy="417.9" r="12" fill="#1f77b4"/><circle cx="1560.2" cy="417.9" r="12" fill="#aec7e8"/><circle cx="1418.9" cy="457.9" r="12" fill="#ff7f0e"/><circle cx="1560.2" cy="457.9" r="12" fill="#ffbb78"/><circle cx="1418.9" cy="497.9" r="12" fill="#2ca02c"/><circle cx="1560.2" cy="497.9" r="12" fill="#98df8a"/></svg>
<div class="t" style="left:1434.9px;top:406.0px;font-size:24px;line-height:24px;color:#000">IMAPS</div>
<div class="t" style="left:1576.2px;top:406.0px;font-size:24px;line-height:24px;color:#000">HTTP</div>
<div class="t" style="left:1434.9px;top:446.0px;font-size:24px;line-height:24px;color:#000">Google</div>
<div class="t" style="left:1576.2px;top:446.0px;font-size:24px;line-height:24px;color:#000">TLS</div>
<div class="t" style="left:1434.9px;top:486.0px;font-size:24px;line-height:24px;color:#000">Github</div>
<div class="t" style="left:1576.2px;top:486.0px;font-size:24px;line-height:24px;color:#000">Facebook</div>
<svg class="r" style="left:0px;top:0px" width="2512" height="1810" viewBox="0 0 2512 1810"><circle cx="1431.2" cy="1192" r="12" fill="#1f77b4"/><circle cx="1572.3" cy="1192" r="12" fill="#aec7e8"/><circle cx="1431.2" cy="1232" r="12" fill="#ff7f0e"/><circle cx="1572.3" cy="1232" r="12" fill="#ffbb78"/><circle cx="1431.2" cy="1272" r="12" fill="#2ca02c"/><circle cx="1572.3" cy="1272" r="12" fill="#98df8a"/></svg>
<div class="t" style="left:1447.2px;top:1180.1px;font-size:24px;line-height:24px;color:#000">IMAPS</div>
<div class="t" style="left:1588.3px;top:1180.1px;font-size:24px;line-height:24px;color:#000">HTTP</div>
<div class="t" style="left:1447.2px;top:1220.1px;font-size:24px;line-height:24px;color:#000">Google</div>
<div class="t" style="left:1588.3px;top:1220.1px;font-size:24px;line-height:24px;color:#000">TLS</div>
<div class="t" style="left:1447.2px;top:1260.1px;font-size:24px;line-height:24px;color:#000">Github</div>
<div class="t" style="left:1588.3px;top:1260.1px;font-size:24px;line-height:24px;color:#000">Facebook</div>
<svg class="r" style="left:0px;top:0px" width="2512" height="1810" viewBox="0 0 2512 1810"><circle cx="2123.1" cy="417.4" r="12" fill="#1f77b4"/><circle cx="2123.1" cy="457.5" r="12" fill="#aec7e8"/><circle cx="2123.1" cy="497.6" r="12" fill="#ff7f0e"/><circle cx="2123.1" cy="537.7" r="12" fill="#ffbb78"/></svg>
<div class="t" style="left:2139.6px;top:405.5px;font-size:24px;line-height:24px;color:#000">Guest Network</div>
<div class="t" style="left:2139.6px;top:445.6px;font-size:24px;line-height:24px;color:#000">Internal Network</div>
<div class="t" style="left:2139.6px;top:485.7px;font-size:24px;line-height:24px;color:#000">WAN</div>
<div class="t" style="left:2139.6px;top:525.8px;font-size:24px;line-height:24px;color:#000">Office-Sensor</div>
<svg class="r" style="left:0px;top:0px" width="2512" height="1810" viewBox="0 0 2512 1810"><circle cx="2135.1" cy="1192" r="12" fill="#1f77b4"/><circle cx="2135.1" cy="1232.1" r="12" fill="#aec7e8"/><circle cx="2135.1" cy="1272.2" r="12" fill="#ff7f0e"/><circle cx="2135.1" cy="1312.3" r="12" fill="#ffbb78"/></svg>
<div class="t" style="left:2151.6px;top:1180.1px;font-size:24px;line-height:24px;color:#000">Guest Network</div>
<div class="t" style="left:2151.6px;top:1220.2px;font-size:24px;line-height:24px;color:#000">Internal Network</div>
<div class="t" style="left:2151.6px;top:1260.3px;font-size:24px;line-height:24px;color:#000">WAN</div>
<div class="t" style="left:2151.6px;top:1300.4px;font-size:24px;line-height:24px;color:#000">Office-Sensor</div>
<svg class="r" style="left:0px;top:0px" width="2512" height="1810" viewBox="0 0 2512 1810"><line x1="1380" y1="659.8" x2="1730" y2="659.8" stroke="#e0e0e0" stroke-width="2"/><line x1="1380" y1="804" x2="1730" y2="804" stroke="#e0e0e0" stroke-width="2"/><line x1="1575" y1="528.2" x2="1575" y2="947.5" stroke="#e0e0e0" stroke-width="2"/><g fill-opacity="0.7"><rect x="1380.70" y="702.94" width="4.92" height="244.56" fill="#1f77b4"/><rect x="1380.70" y="663.93" width="4.92" height="39.01" fill="#aec7e8"/><rect x="1380.70" y="659.90" width="4.92" height="4.04" fill="#ff7f0e"/><rect x="1380.70" y="641.60" width="4.92" height="18.29" fill="#ffbb78"/><rect x="1380.70" y="637.84" width="4.92" height="3.77" fill="#98df8a"/><rect x="1386.52" y="750.02" width="4.92" height="197.48" fill="#1f77b4"/><rect x="1386.52" y="682.77" width="4.92" height="67.26" fill="#aec7e8"/><rect x="1386.52" y="667.43" width="4.92" height="15.33" fill="#ff7f0e"/><rect x="1386.52" y="666.09" width="4.92" height="1.35" fill="#ffbb78"/><rect x="1386.52" y="665.28" width="4.92" height="0.81" fill="#2ca02c"/><rect x="1386.52" y="648.60" width="4.92" height="16.68" fill="#98df8a"/><rect x="1392.34" y="720.43" width="4.92" height="227.07" fill="#1f77b4"/><rect x="1392.34" y="706.98" width="4.92" height="13.45" fill="#aec7e8"/><rect x="1392.34" y="681.42" width="4.92" height="25.56" fill="#ff7f0e"/><rect x="1392.34" y="675.50" width="4.92" height="5.92" fill="#ffbb78"/><rect x="1392.34" y="653.17" width="4.92" height="22.33" fill="#2ca02c"/><rect x="1398.16" y="741.95" width="4.92" height="205.55" fill="#1f77b4"/><rect x="1398.16" y="702.94" width="4.92" height="39.01" fill="#aec7e8"/><rect x="1398.16" y="683.57" width="4.92" height="19.37" fill="#ff7f0e"/><rect x="1398.16" y="660.44" width="4.92" height="23.14" fill="#ffbb78"/><rect x="1398.16" y="658.55" width="4.92" height="1.88" fill="#2ca02c"/><rect x="1403.98" y="830.73" width="4.92" height="116.77" fill="#1f77b4"/><rect x="1403.98" y="745.99" width="4.92" height="84.75" fill="#aec7e8"/><rect x="1403.98" y="731.19" width="4.92" height="14.80" fill="#ff7f0e"/><rect x="1403.98" y="728.50" width="4.92" height="2.69" fill="#ffbb78"/><rect x="1403.98" y="727.69" width="4.92" height="0.81" fill="#2ca02c"/><rect x="1403.98" y="706.98" width="4.92" height="20.72" fill="#98df8a"/><rect x="1409.80" y="592.10" width="4.92" height="355.40" fill="#1f77b4"/><rect x="1409.80" y="586.72" width="4.92" height="5.38" fill="#aec7e8"/><rect x="1409.80" y="562.51" width="4.92" height="24.21" fill="#ff7f0e"/><rect x="1409.80" y="560.36" width="4.92" height="2.15" fill="#ffbb78"/><rect x="1409.80" y="554.17" width="4.92" height="6.19" fill="#2ca02c"/><rect x="1415.62" y="834.77" width="4.92" height="112.73" fill="#1f77b4"/><rect x="1415.62" y="789.03" width="4.92" height="45.74" fill="#aec7e8"/><rect x="1415.62" y="768.86" width="4.92" height="20.18" fill="#ff7f0e"/><rect x="1415.62" y="743.30" width="4.92" height="25.56" fill="#ffbb78"/><rect x="1415.62" y="724.47" width="4.92" height="18.83" fill="#2ca02c"/><rect x="1421.44" y="780.43" width="4.92" height="167.07" fill="#1f77b4"/><rect x="1421.44" y="705.10" width="4.92" height="75.33" fill="#aec7e8"/><rect x="1421.44" y="693.53" width="4.92" height="11.57" fill="#ff7f0e"/><rect x="1421.44" y="691.64" width="4.92" height="1.88" fill="#ffbb78"/><rect x="1421.44" y="690.84" width="4.92" height="0.81" fill="#2ca02c"/><rect x="1421.44" y="679.54" width="4.92" height="11.30" fill="#98df8a"/><rect x="1427.26" y="588.60" width="4.92" height="358.90" fill="#1f77b4"/><rect x="1427.26" y="576.50" width="4.92" height="12.11" fill="#aec7e8"/><rect x="1427.26" y="571.12" width="4.92" height="5.38" fill="#ff7f0e"/><rect x="1427.26" y="569.23" width="4.92" height="1.88" fill="#ffbb78"/><rect x="1427.26" y="559.82" width="4.92" height="9.42" fill="#98df8a"/><rect x="1433.08" y="833.42" width="4.92" height="114.08" fill="#1f77b4"/><rect x="1433.08" y="795.22" width="4.92" height="38.20" fill="#aec7e8"/><rect x="1433.08" y="753.52" width="4.92" height="41.70" fill="#ff7f0e"/><rect x="1433.08" y="743.84" width="4.92" height="9.69" fill="#ffbb78"/><rect x="1433.08" y="719.09" width="4.92" height="24.75" fill="#2ca02c"/><rect x="1438.90" y="732.00" width="4.92" height="215.50" fill="#1f77b4"/><rect x="1438.90" y="689.49" width="4.92" height="42.51" fill="#aec7e8"/><rect x="1438.90" y="685.46" width="4.92" height="4.04" fill="#ff7f0e"/><rect x="1438.90" y="667.43" width="4.92" height="18.03" fill="#ffbb78"/><rect x="1438.90" y="662.59" width="4.92" height="4.84" fill="#98df8a"/><rect x="1444.72" y="700.79" width="4.92" height="246.71" fill="#1f77b4"/><rect x="1444.72" y="643.22" width="4.92" height="57.57" fill="#aec7e8"/><rect x="1444.72" y="630.30" width="4.92" height="12.91" fill="#ff7f0e"/><rect x="1444.72" y="628.96" width="4.92" height="1.35" fill="#ffbb78"/><rect x="1444.72" y="612.01" width="4.92" height="16.95" fill="#98df8a"/><rect x="1450.54" y="768.86" width="4.92" height="178.64" fill="#1f77b4"/><rect x="1450.54" y="747.33" width="4.92" height="21.52" fill="#aec7e8"/><rect x="1450.54" y="720.43" width="4.92" height="26.90" fill="#ff7f0e"/><rect x="1450.54" y="713.17" width="4.92" height="7.26" fill="#ffbb78"/><rect x="1450.54" y="690.03" width="4.92" height="23.14" fill="#2ca02c"/><rect x="1456.36" y="689.49" width="4.92" height="258.01" fill="#1f77b4"/><rect x="1456.36" y="658.55" width="4.92" height="30.94" fill="#aec7e8"/><rect x="1456.36" y="640.53" width="4.92" height="18.03" fill="#ff7f0e"/><rect x="1456.36" y="618.20" width="4.92" height="22.33" fill="#ffbb78"/><rect x="1456.36" y="617.39" width="4.92" height="0.81" fill="#2ca02c"/><rect x="1462.18" y="836.12" width="4.92" height="111.38" fill="#1f77b4"/><rect x="1462.18" y="750.02" width="4.92" height="86.09" fill="#aec7e8"/><rect x="1462.18" y="735.23" width="4.92" height="14.80" fill="#ff7f0e"/><rect x="1462.18" y="733.34" width="4.92" height="1.88" fill="#ffbb78"/><rect x="1462.18" y="732.54" width="4.92" height="0.81" fill="#2ca02c"/><rect x="1462.18" y="711.55" width="4.92" height="20.98" fill="#98df8a"/><rect x="1468.00" y="633.53" width="4.92" height="313.97" fill="#1f77b4"/><rect x="1468.00" y="627.08" width="4.92" height="6.46" fill="#aec7e8"/><rect x="1468.00" y="602.06" width="4.92" height="25.02" fill="#ff7f0e"/><rect x="1468.00" y="599.63" width="4.92" height="2.42" fill="#ffbb78"/><rect x="1468.00" y="582.68" width="4.92" height="16.95" fill="#2ca02c"/><rect x="1473.82" y="808.67" width="4.92" height="138.83" fill="#1f77b4"/><rect x="1473.82" y="763.48" width="4.92" height="45.20" fill="#aec7e8"/><rect x="1473.82" y="741.95" width="4.92" height="21.52" fill="#ff7f0e"/><rect x="1473.82" y="717.74" width="4.92" height="24.21" fill="#ffbb78"/><rect x="1473.82" y="709.67" width="4.92" height="8.07" fill="#2ca02c"/><rect x="1479.64" y="806.52" width="4.92" height="140.98" fill="#1f77b4"/><rect x="1479.64" y="721.24" width="4.92" height="85.28" fill="#aec7e8"/><rect x="1479.64" y="706.98" width="4.92" height="14.26" fill="#ff7f0e"/><rect x="1479.64" y="704.29" width="4.92" height="2.69" fill="#ffbb78"/><rect x="1479.64" y="703.75" width="4.92" height="0.54" fill="#2ca02c"/><rect x="1479.64" y="686.26" width="4.92" height="17.49" fill="#98df8a"/><rect x="1485.46" y="546.37" width="4.92" height="401.13" fill="#1f77b4"/><rect x="1485.46" y="542.87" width="4.92" height="3.50" fill="#ff7f0e"/><rect x="1485.46" y="540.98" width="4.92" height="1.88" fill="#ffbb78"/><rect x="1485.46" y="540.18" width="4.92" height="0.81" fill="#2ca02c"/><rect x="1485.46" y="538.29" width="4.92" height="1.88" fill="#98df8a"/><rect x="1491.28" y="745.45" width="4.92" height="202.05" fill="#1f77b4"/><rect x="1491.28" y="692.18" width="4.92" height="53.27" fill="#aec7e8"/><rect x="1491.28" y="684.65" width="4.92" height="7.53" fill="#ff7f0e"/><rect x="1491.28" y="670.12" width="4.92" height="14.53" fill="#ffbb78"/><rect x="1491.28" y="663.13" width="4.92" height="6.99" fill="#98df8a"/><rect x="1497.10" y="745.99" width="4.92" height="201.51" fill="#1f77b4"/><rect x="1497.10" y="692.18" width="4.92" height="53.81" fill="#aec7e8"/><rect x="1497.10" y="684.65" width="4.92" height="7.53" fill="#ff7f0e"/><rect x="1497.10" y="670.12" width="4.92" height="14.53" fill="#ffbb78"/><rect x="1497.10" y="663.13" width="4.92" height="6.99" fill="#98df8a"/><rect x="1502.92" y="815.94" width="4.92" height="131.56" fill="#1f77b4"/><rect x="1502.92" y="785.00" width="4.92" height="30.94" fill="#aec7e8"/><rect x="1502.92" y="755.40" width="4.92" height="29.59" fill="#ff7f0e"/><rect x="1502.92" y="743.84" width="4.92" height="11.57" fill="#ffbb78"/><rect x="1502.92" y="719.09" width="4.92" height="24.75" fill="#2ca02c"/><rect x="1508.74" y="683.57" width="4.92" height="263.93" fill="#1f77b4"/><rect x="1508.74" y="657.21" width="4.92" height="26.37" fill="#aec7e8"/><rect x="1508.74" y="641.60" width="4.92" height="15.60" fill="#ff7f0e"/><rect x="1508.74" y="623.58" width="4.92" height="18.03" fill="#ffbb78"/><rect x="1508.74" y="622.77" width="4.92" height="0.81" fill="#2ca02c"/><rect x="1508.74" y="622.23" width="4.92" height="0.54" fill="#98df8a"/><rect x="1514.56" y="790.38" width="4.92" height="157.12" fill="#1f77b4"/><rect x="1514.56" y="711.55" width="4.92" height="78.83" fill="#aec7e8"/><rect x="1514.56" y="696.22" width="4.92" height="15.33" fill="#ff7f0e"/><rect x="1514.56" y="694.87" width="4.92" height="1.35" fill="#ffbb78"/><rect x="1514.56" y="674.69" width="4.92" height="20.18" fill="#98df8a"/><rect x="1520.38" y="682.77" width="4.92" height="264.73" fill="#1f77b4"/><rect x="1520.38" y="674.69" width="4.92" height="8.07" fill="#aec7e8"/><rect x="1520.38" y="650.48" width="4.92" height="24.21" fill="#ff7f0e"/><rect x="1520.38" y="646.98" width="4.92" height="3.50" fill="#ffbb78"/><rect x="1520.38" y="627.61" width="4.92" height="19.37" fill="#2ca02c"/><rect x="1526.20" y="771.55" width="4.92" height="175.95" fill="#1f77b4"/><rect x="1526.20" y="728.50" width="4.92" height="43.05" fill="#aec7e8"/><rect x="1526.20" y="708.32" width="4.92" height="20.18" fill="#ff7f0e"/><rect x="1526.20" y="683.57" width="4.92" height="24.75" fill="#ffbb78"/><rect x="1526.20" y="678.19" width="4.92" height="5.38" fill="#2ca02c"/><rect x="1526.20" y="676.85" width="4.92" height="1.35" fill="#98df8a"/><rect x="1532.02" y="834.23" width="4.92" height="113.27" fill="#1f77b4"/><rect x="1532.02" y="749.22" width="4.92" height="85.01" fill="#aec7e8"/><rect x="1532.02" y="734.69" width="4.92" height="14.53" fill="#ff7f0e"/><rect x="1532.02" y="732.00" width="4.92" height="2.69" fill="#ffbb78"/><rect x="1532.02" y="731.19" width="4.92" height="0.81" fill="#2ca02c"/><rect x="1532.02" y="711.01" width="4.92" height="20.18" fill="#98df8a"/><rect x="1537.84" y="556.32" width="4.92" height="391.18" fill="#1f77b4"/><rect x="1537.84" y="553.63" width="4.92" height="2.69" fill="#aec7e8"/><rect x="1537.84" y="531.30" width="4.92" height="22.33" fill="#ff7f0e"/><rect x="1537.84" y="528.07" width="4.92" height="3.23" fill="#ffbb78"/><rect x="1543.66" y="842.84" width="4.92" height="104.66" fill="#1f77b4"/><rect x="1543.66" y="798.45" width="4.92" height="44.39" fill="#aec7e8"/><rect x="1543.66" y="776.93" width="4.92" height="21.52" fill="#ff7f0e"/><rect x="1543.66" y="759.44" width="4.92" height="17.49" fill="#ffbb78"/><rect x="1543.66" y="735.23" width="4.92" height="24.21" fill="#2ca02c"/><rect x="1549.48" y="769.66" width="4.92" height="177.84" fill="#1f77b4"/><rect x="1549.48" y="698.91" width="4.92" height="70.76" fill="#aec7e8"/><rect x="1549.48" y="691.64" width="4.92" height="7.26" fill="#ff7f0e"/><rect x="1549.48" y="681.42" width="4.92" height="10.22" fill="#ffbb78"/><rect x="1549.48" y="672.00" width="4.92" height="9.42" fill="#98df8a"/><rect x="1555.30" y="620.89" width="4.92" height="326.61" fill="#1f77b4"/><rect x="1555.30" y="599.37" width="4.92" height="21.52" fill="#aec7e8"/><rect x="1555.30" y="593.18" width="4.92" height="6.19" fill="#ff7f0e"/><rect x="1555.30" y="590.49" width="4.92" height="2.69" fill="#ffbb78"/><rect x="1555.30" y="589.95" width="4.92" height="0.54" fill="#2ca02c"/><rect x="1555.30" y="579.19" width="4.92" height="10.76" fill="#98df8a"/><rect x="1561.12" y="826.16" width="4.92" height="121.34" fill="#1f77b4"/><rect x="1561.12" y="794.41" width="4.92" height="31.75" fill="#aec7e8"/><rect x="1561.12" y="751.37" width="4.92" height="43.05" fill="#ff7f0e"/><rect x="1561.12" y="741.15" width="4.92" height="10.22" fill="#ffbb78"/><rect x="1561.12" y="717.20" width="4.92" height="23.94" fill="#2ca02c"/><rect x="1566.94" y="707.79" width="4.92" height="239.71" fill="#1f77b4"/><rect x="1566.94" y="666.62" width="4.92" height="41.16" fill="#aec7e8"/><rect x="1566.94" y="663.93" width="4.92" height="2.69" fill="#ff7f0e"/><rect x="1566.94" y="645.91" width="4.92" height="18.03" fill="#ffbb78"/><rect x="1566.94" y="641.60" width="4.92" height="4.30" fill="#98df8a"/><rect x="1572.76" y="735.23" width="4.92" height="212.27" fill="#1f77b4"/><rect x="1572.76" y="671.20" width="4.92" height="64.03" fill="#aec7e8"/><rect x="1572.76" y="657.21" width="4.92" height="13.99" fill="#ff7f0e"/><rect x="1572.76" y="655.86" width="4.92" height="1.35" fill="#ffbb78"/><rect x="1572.76" y="654.52" width="4.92" height="1.35" fill="#2ca02c"/><rect x="1572.76" y="637.84" width="4.92" height="16.68" fill="#98df8a"/><rect x="1578.58" y="733.88" width="4.92" height="213.62" fill="#1f77b4"/><rect x="1578.58" y="718.55" width="4.92" height="15.33" fill="#aec7e8"/><rect x="1578.58" y="693.53" width="4.92" height="25.02" fill="#ff7f0e"/><rect x="1578.58" y="688.15" width="4.92" height="5.38" fill="#ffbb78"/><rect x="1578.58" y="665.28" width="4.92" height="22.87" fill="#2ca02c"/><rect x="1584.40" y="731.19" width="4.92" height="216.31" fill="#1f77b4"/><rect x="1584.40" y="693.53" width="4.92" height="37.66" fill="#aec7e8"/><rect x="1584.40" y="674.69" width="4.92" height="18.83" fill="#ff7f0e"/><rect x="1584.40" y="651.83" width="4.92" height="22.87" fill="#ffbb78"/><rect x="1584.40" y="650.48" width="4.92" height="1.35" fill="#2ca02c"/><rect x="1584.40" y="649.14" width="4.92" height="1.35" fill="#98df8a"/><rect x="1590.22" y="829.93" width="4.92" height="117.57" fill="#1f77b4"/><rect x="1590.22" y="744.64" width="4.92" height="85.28" fill="#aec7e8"/><rect x="1590.22" y="730.38" width="4.92" height="14.26" fill="#ff7f0e"/><rect x="1590.22" y="727.69" width="4.92" height="2.69" fill="#ffbb78"/><rect x="1590.22" y="727.16" width="4.92" height="0.54" fill="#2ca02c"/><rect x="1590.22" y="706.98" width="4.92" height="20.18" fill="#98df8a"/><rect x="1596.04" y="598.56" width="4.92" height="348.94" fill="#1f77b4"/><rect x="1596.04" y="593.18" width="4.92" height="5.38" fill="#aec7e8"/><rect x="1596.04" y="569.77" width="4.92" height="23.41" fill="#ff7f0e"/><rect x="1596.04" y="567.08" width="4.92" height="2.69" fill="#ffbb78"/><rect x="1596.04" y="559.01" width="4.92" height="8.07" fill="#2ca02c"/><rect x="1601.86" y="833.42" width="4.92" height="114.08" fill="#1f77b4"/><rect x="1601.86" y="786.34" width="4.92" height="47.08" fill="#aec7e8"/><rect x="1601.86" y="766.17" width="4.92" height="20.18" fill="#ff7f0e"/><rect x="1601.86" y="740.61" width="4.92" height="25.56" fill="#ffbb78"/><rect x="1601.86" y="724.47" width="4.92" height="16.14" fill="#2ca02c"/><rect x="1607.68" y="580.53" width="4.92" height="366.97" fill="#1f77b4"/><rect x="1607.68" y="568.96" width="4.92" height="11.57" fill="#aec7e8"/><rect x="1607.68" y="564.39" width="4.92" height="4.57" fill="#ff7f0e"/><rect x="1607.68" y="562.51" width="4.92" height="1.88" fill="#ffbb78"/><rect x="1607.68" y="553.63" width="4.92" height="8.88" fill="#98df8a"/><rect x="1613.50" y="846.88" width="4.92" height="100.62" fill="#1f77b4"/><rect x="1613.50" y="806.52" width="4.92" height="40.36" fill="#aec7e8"/><rect x="1613.50" y="765.36" width="4.92" height="41.16" fill="#ff7f0e"/><rect x="1613.50" y="755.40" width="4.92" height="9.95" fill="#ffbb78"/><rect x="1613.50" y="730.38" width="4.92" height="25.02" fill="#2ca02c"/><rect x="1619.32" y="731.19" width="4.92" height="216.31" fill="#1f77b4"/><rect x="1619.32" y="677.38" width="4.92" height="53.81" fill="#aec7e8"/><rect x="1619.32" y="672.00" width="4.92" height="5.38" fill="#ff7f0e"/><rect x="1619.32" y="654.52" width="4.92" height="17.49" fill="#ffbb78"/><rect x="1619.32" y="649.94" width="4.92" height="4.57" fill="#98df8a"/><rect x="1625.14" y="688.95" width="4.92" height="258.55" fill="#1f77b4"/><rect x="1625.14" y="645.91" width="4.92" height="43.05" fill="#aec7e8"/><rect x="1625.14" y="635.15" width="4.92" height="10.76" fill="#ff7f0e"/><rect x="1625.14" y="633.53" width="4.92" height="1.61" fill="#ffbb78"/><rect x="1625.14" y="632.99" width="4.92" height="0.54" fill="#2ca02c"/><rect x="1625.14" y="616.05" width="4.92" height="16.95" fill="#98df8a"/><rect x="1630.96" y="780.43" width="4.92" height="167.07" fill="#1f77b4"/><rect x="1630.96" y="757.29" width="4.92" height="23.14" fill="#aec7e8"/><rect x="1630.96" y="730.38" width="4.92" height="26.90" fill="#ff7f0e"/><rect x="1630.96" y="719.09" width="4.92" height="11.30" fill="#ffbb78"/><rect x="1630.96" y="694.87" width="4.92" height="24.21" fill="#2ca02c"/><rect x="1636.78" y="685.46" width="4.92" height="262.04" fill="#1f77b4"/><rect x="1636.78" y="655.32" width="4.92" height="30.13" fill="#aec7e8"/><rect x="1636.78" y="637.57" width="4.92" height="17.76" fill="#ff7f0e"/><rect x="1636.78" y="619.54" width="4.92" height="18.03" fill="#ffbb78"/><rect x="1636.78" y="619.00" width="4.92" height="0.54" fill="#2ca02c"/><rect x="1642.60" y="831.54" width="4.92" height="115.96" fill="#1f77b4"/><rect x="1642.60" y="748.14" width="4.92" height="83.40" fill="#aec7e8"/><rect x="1642.60" y="733.88" width="4.92" height="14.26" fill="#ff7f0e"/><rect x="1642.60" y="731.19" width="4.92" height="2.69" fill="#ffbb78"/><rect x="1642.60" y="730.65" width="4.92" height="0.54" fill="#2ca02c"/><rect x="1642.60" y="710.21" width="4.92" height="20.45" fill="#98df8a"/><rect x="1648.42" y="640.53" width="4.92" height="306.97" fill="#1f77b4"/><rect x="1648.42" y="632.99" width="4.92" height="7.53" fill="#aec7e8"/><rect x="1648.42" y="608.78" width="4.92" height="24.21" fill="#ff7f0e"/><rect x="1648.42" y="606.09" width="4.92" height="2.69" fill="#ffbb78"/><rect x="1648.42" y="589.14" width="4.92" height="16.95" fill="#2ca02c"/><rect x="1654.24" y="801.68" width="4.92" height="145.82" fill="#1f77b4"/><rect x="1654.24" y="756.75" width="4.92" height="44.93" fill="#aec7e8"/><rect x="1654.24" y="736.57" width="4.92" height="20.18" fill="#ff7f0e"/><rect x="1654.24" y="711.55" width="4.92" height="25.02" fill="#ffbb78"/><rect x="1654.24" y="703.75" width="4.92" height="7.80" fill="#2ca02c"/><rect x="1660.06" y="814.05" width="4.92" height="133.45" fill="#1f77b4"/><rect x="1660.06" y="728.50" width="4.92" height="85.55" fill="#aec7e8"/><rect x="1660.06" y="714.24" width="4.92" height="14.26" fill="#ff7f0e"/><rect x="1660.06" y="711.55" width="4.92" height="2.69" fill="#ffbb78"/><rect x="1660.06" y="711.01" width="4.92" height="0.54" fill="#2ca02c"/><rect x="1660.06" y="690.84" width="4.92" height="20.18" fill="#98df8a"/><rect x="1665.88" y="860.33" width="4.92" height="87.17" fill="#1f77b4"/><rect x="1665.88" y="818.63" width="4.92" height="41.70" fill="#aec7e8"/><rect x="1665.88" y="777.73" width="4.92" height="40.89" fill="#ff7f0e"/><rect x="1665.88" y="762.13" width="4.92" height="15.60" fill="#ffbb78"/><rect x="1665.88" y="737.38" width="4.92" height="24.75" fill="#2ca02c"/><rect x="1671.70" y="750.02" width="4.92" height="197.48" fill="#1f77b4"/><rect x="1671.70" y="691.64" width="4.92" height="58.38" fill="#aec7e8"/><rect x="1671.70" y="684.65" width="4.92" height="6.99" fill="#ff7f0e"/><rect x="1671.70" y="671.20" width="4.92" height="13.45" fill="#ffbb78"/><rect x="1671.70" y="664.74" width="4.92" height="6.46" fill="#98df8a"/><rect x="1677.52" y="643.76" width="4.92" height="303.74" fill="#1f77b4"/><rect x="1677.52" y="610.13" width="4.92" height="33.63" fill="#aec7e8"/><rect x="1677.52" y="602.06" width="4.92" height="8.07" fill="#ff7f0e"/><rect x="1677.52" y="600.17" width="4.92" height="1.88" fill="#ffbb78"/><rect x="1677.52" y="585.91" width="4.92" height="14.26" fill="#98df8a"/><rect x="1683.34" y="806.52" width="4.92" height="140.98" fill="#1f77b4"/><rect x="1683.34" y="775.04" width="4.92" height="31.48" fill="#aec7e8"/><rect x="1683.34" y="734.69" width="4.92" height="40.36" fill="#ff7f0e"/><rect x="1683.34" y="723.12" width="4.92" height="11.57" fill="#ffbb78"/><rect x="1683.34" y="698.91" width="4.92" height="24.21" fill="#2ca02c"/><rect x="1689.16" y="806.52" width="4.92" height="140.98" fill="#1f77b4"/><rect x="1689.16" y="775.04" width="4.92" height="31.48" fill="#aec7e8"/><rect x="1689.16" y="734.69" width="4.92" height="40.36" fill="#ff7f0e"/><rect x="1689.16" y="723.12" width="4.92" height="11.57" fill="#ffbb78"/><rect x="1689.16" y="698.91" width="4.92" height="24.21" fill="#2ca02c"/><rect x="1694.98" y="740.61" width="4.92" height="206.89" fill="#1f77b4"/><rect x="1694.98" y="688.15" width="4.92" height="52.46" fill="#aec7e8"/><rect x="1694.98" y="678.73" width="4.92" height="9.42" fill="#ff7f0e"/><rect x="1694.98" y="670.66" width="4.92" height="8.07" fill="#ffbb78"/><rect x="1694.98" y="670.12" width="4.92" height="0.54" fill="#2ca02c"/><rect x="1694.98" y="659.36" width="4.92" height="10.76" fill="#98df8a"/><rect x="1700.80" y="693.53" width="4.92" height="253.97" fill="#1f77b4"/><rect x="1700.80" y="684.92" width="4.92" height="8.61" fill="#aec7e8"/><rect x="1700.80" y="659.36" width="4.92" height="25.56" fill="#ff7f0e"/><rect x="1700.80" y="655.86" width="4.92" height="3.50" fill="#ffbb78"/><rect x="1700.80" y="635.68" width="4.92" height="20.18" fill="#2ca02c"/><rect x="1706.62" y="762.13" width="4.92" height="185.37" fill="#1f77b4"/><rect x="1706.62" y="719.62" width="4.92" height="42.51" fill="#aec7e8"/><rect x="1706.62" y="699.71" width="4.92" height="19.91" fill="#ff7f0e"/><rect x="1706.62" y="675.50" width="4.92" height="24.21" fill="#ffbb78"/><rect x="1706.62" y="671.20" width="4.92" height="4.30" fill="#2ca02c"/><rect x="1706.62" y="670.12" width="4.92" height="1.08" fill="#98df8a"/><rect x="1712.44" y="830.73" width="4.92" height="116.77" fill="#1f77b4"/><rect x="1712.44" y="745.45" width="4.92" height="85.28" fill="#aec7e8"/><rect x="1712.44" y="731.19" width="4.92" height="14.26" fill="#ff7f0e"/><rect x="1712.44" y="728.50" width="4.92" height="2.69" fill="#ffbb78"/><rect x="1712.44" y="727.69" width="4.92" height="0.81" fill="#2ca02c"/><rect x="1712.44" y="706.98" width="4.92" height="20.72" fill="#98df8a"/><rect x="1718.26" y="569.23" width="4.92" height="378.27" fill="#1f77b4"/><rect x="1718.26" y="567.08" width="4.92" height="2.15" fill="#aec7e8"/><rect x="1718.26" y="544.75" width="4.92" height="22.33" fill="#ff7f0e"/><rect x="1718.26" y="542.06" width="4.92" height="2.69" fill="#ffbb78"/><rect x="1718.26" y="540.98" width="4.92" height="1.08" fill="#2ca02c"/><rect x="1724.08" y="840.15" width="4.92" height="107.35" fill="#1f77b4"/><rect x="1724.08" y="797.11" width="4.92" height="43.05" fill="#aec7e8"/><rect x="1724.08" y="775.58" width="4.92" height="21.52" fill="#ff7f0e"/><rect x="1724.08" y="756.21" width="4.92" height="19.37" fill="#ffbb78"/><rect x="1724.08" y="732.00" width="4.92" height="24.21" fill="#2ca02c"/></g><line x1="1380" y1="528.2" x2="1380" y2="947.5" stroke="#333" stroke-width="2"/></svg>
<div class="t" style="left:1221.6px;top:515.6px;font-size:24px;line-height:24px;color:#000;font-weight:bold">116.55 Mbit/s</div>
<div class="t" style="left:1275.4px;top:648.0px;font-size:24px;line-height:24px;color:#000">80 Mbit/s</div>
<div class="t" style="left:1275.4px;top:792.1px;font-size:24px;line-height:24px;color:#000">40 Mbit/s</div>
<div class="t" style="left:1359.5px;top:935.6px;font-size:24px;line-height:24px;color:#000;font-weight:bold">0</div>
<div class="t" style="left:1527.8px;top:959.6px;font-size:24px;line-height:24px;color:#000">11:43:16</div>
<svg class="r" style="left:0px;top:0px" width="2512" height="1810" viewBox="0 0 2512 1810"><line x1="2012" y1="580" x2="2362" y2="580" stroke="#e0e0e0" stroke-width="2"/><line x1="2012" y1="702.7" x2="2362" y2="702.7" stroke="#e0e0e0" stroke-width="2"/><line x1="2012" y1="824.9" x2="2362" y2="824.9" stroke="#e0e0e0" stroke-width="2"/><line x1="2204" y1="568.2" x2="2204" y2="947.5" stroke="#e0e0e0" stroke-width="2"/><g fill="#ff7f0e" fill-opacity="0.7"><rect x="2012.90" y="646.21" width="4.82" height="301.29"/><rect x="2018.62" y="640.33" width="4.82" height="307.17"/><rect x="2030.06" y="660.91" width="4.82" height="286.59"/><rect x="2035.78" y="680.01" width="4.82" height="267.49"/><rect x="2041.50" y="588.17" width="4.82" height="359.33"/><rect x="2047.22" y="707.44" width="4.82" height="240.06"/><rect x="2052.94" y="665.80" width="4.82" height="281.70"/><rect x="2058.66" y="586.21" width="4.82" height="361.29"/><rect x="2064.38" y="706.22" width="4.82" height="241.28"/><rect x="2070.10" y="661.15" width="4.82" height="286.35"/><rect x="2075.82" y="616.33" width="4.82" height="331.17"/><rect x="2081.54" y="687.85" width="4.82" height="259.65"/><rect x="2087.26" y="629.80" width="4.82" height="317.70"/><rect x="2092.98" y="682.95" width="4.82" height="264.55"/><rect x="2098.70" y="608.98" width="4.82" height="338.52"/><rect x="2104.42" y="695.93" width="4.82" height="251.57"/><rect x="2110.14" y="665.80" width="4.82" height="281.70"/><rect x="2115.86" y="574.70" width="4.82" height="372.80"/><rect x="2121.58" y="721.65" width="4.82" height="225.85"/><rect x="2127.30" y="657.97" width="4.82" height="289.53"/><rect x="2133.02" y="605.80" width="4.82" height="341.70"/><rect x="2138.74" y="703.28" width="4.82" height="244.22"/><rect x="2144.46" y="638.86" width="4.82" height="308.64"/><rect x="2150.18" y="655.03" width="4.82" height="292.47"/><rect x="2155.90" y="637.88" width="4.82" height="309.62"/><rect x="2161.62" y="677.56" width="4.82" height="269.94"/><rect x="2167.34" y="681.97" width="4.82" height="265.53"/><rect x="2173.06" y="567.84" width="4.82" height="379.66"/><rect x="2178.78" y="715.52" width="4.82" height="231.98"/><rect x="2184.50" y="661.64" width="4.82" height="285.86"/><rect x="2190.22" y="598.70" width="4.82" height="348.80"/><rect x="2195.94" y="705.73" width="4.82" height="241.77"/><rect x="2201.66" y="643.76" width="4.82" height="303.74"/><rect x="2207.38" y="635.43" width="4.82" height="312.07"/><rect x="2213.10" y="668.25" width="4.82" height="279.25"/><rect x="2218.82" y="653.80" width="4.82" height="293.70"/><rect x="2224.54" y="679.52" width="4.82" height="267.98"/><rect x="2230.26" y="590.86" width="4.82" height="356.64"/><rect x="2235.98" y="707.44" width="4.82" height="240.06"/><rect x="2241.70" y="583.76" width="4.82" height="363.74"/><rect x="2247.42" y="712.34" width="4.82" height="235.16"/><rect x="2253.14" y="652.58" width="4.82" height="294.92"/><rect x="2258.86" y="621.96" width="4.82" height="325.54"/><rect x="2264.58" y="691.03" width="4.82" height="256.47"/><rect x="2270.30" y="632.25" width="4.82" height="315.25"/><rect x="2276.02" y="681.97" width="4.82" height="265.53"/><rect x="2281.74" y="614.37" width="4.82" height="333.13"/><rect x="2287.46" y="690.54" width="4.82" height="256.96"/><rect x="2293.18" y="670.21" width="4.82" height="277.29"/><rect x="2298.90" y="718.46" width="4.82" height="229.04"/><rect x="2304.62" y="659.93" width="4.82" height="287.57"/><rect x="2310.34" y="601.15" width="4.82" height="346.35"/><rect x="2316.06" y="685.40" width="4.82" height="262.10"/><rect x="2321.78" y="685.40" width="4.82" height="262.10"/><rect x="2327.50" y="657.23" width="4.82" height="290.27"/><rect x="2333.22" y="645.23" width="4.82" height="302.27"/><rect x="2338.94" y="679.52" width="4.82" height="267.98"/><rect x="2344.66" y="577.88" width="4.82" height="369.62"/><rect x="2350.38" y="714.30" width="4.82" height="233.20"/><rect x="2356.10" y="657.48" width="4.82" height="290.02"/></g><line x1="2012" y1="568.2" x2="2012" y2="947.5" stroke="#333" stroke-width="2"/></svg>
<div class="t" style="left:1855.3px;top:554.8px;font-size:24px;line-height:24px;color:#000;font-weight:bold">124.05 Mbit/s</div>
<div class="t" style="left:1907.6px;top:689.9px;font-size:24px;line-height:24px;color:#000">80 Mbit/s</div>
<div class="t" style="left:1907.6px;top:813.0px;font-size:24px;line-height:24px;color:#000">40 Mbit/s</div>
<div class="t" style="left:1991.7px;top:934.9px;font-size:24px;line-height:24px;color:#000;font-weight:bold">0</div>
<div class="t" style="left:2156.3px;top:958.8px;font-size:24px;line-height:24px;color:#000">11:43:14</div>
<svg class="r" style="left:0px;top:0px" width="2512" height="1810" viewBox="0 0 2512 1810"><line x1="1380" y1="1302.5" x2="1741.4" y2="1302.5" stroke="#e0e0e0" stroke-width="2"/><line x1="1380" y1="1387" x2="1741.4" y2="1387" stroke="#e0e0e0" stroke-width="2"/><line x1="1380" y1="1470.7" x2="1741.4" y2="1470.7" stroke="#e0e0e0" stroke-width="2"/><line x1="1380" y1="1554.6" x2="1741.4" y2="1554.6" stroke="#e0e0e0" stroke-width="2"/><line x1="1380" y1="1637.6" x2="1741.4" y2="1637.6" stroke="#e0e0e0" stroke-width="2"/><line x1="1380" y1="1721.5" x2="1741.4" y2="1721.5" stroke="#e0e0e0" stroke-width="2"/><line x1="1546" y1="1302.5" x2="1546" y2="1721.5" stroke="#e0e0e0" stroke-width="2"/><defs><linearGradient id="spg" x1="0" y1="1721.5" x2="0" y2="1305" gradientUnits="userSpaceOnUse"><stop offset="0" stop-color="#1f77b4" stop-opacity="0.7"/><stop offset="0.62" stop-color="#1f77b4" stop-opacity="0.7"/><stop offset="0.78" stop-color="#aec7e8" stop-opacity="0.7"/><stop offset="0.9" stop-color="#ffbb78" stop-opacity="0.55"/><stop offset="1" stop-color="#98df8a" stop-opacity="0.5"/></linearGradient></defs><path d="M1731.7 1721.5 Q1734.5 1714 1735 1693 L1736.4 1440 L1738.6 1395 L1741.2 1305 L1741.7 1305 L1741.7 1721.5 Z" fill="url(#spg)"/><line x1="1380" y1="1302.5" x2="1380" y2="1721.5" stroke="#333" stroke-width="2"/></svg>
<div class="t" style="left:1236.8px;top:1289.2px;font-size:24px;line-height:24px;color:#000;font-weight:bold">80.25 Mbit/s</div>
<div class="t" style="left:1275.5px;top:1374.4px;font-size:24px;line-height:24px;color:#000">64 Mbit/s</div>
<div class="t" style="left:1275.5px;top:1458.1px;font-size:24px;line-height:24px;color:#000">48 Mbit/s</div>
<div class="t" style="left:1275.5px;top:1542.0px;font-size:24px;line-height:24px;color:#000">32 Mbit/s</div>
<div class="t" style="left:1275.5px;top:1625.3px;font-size:24px;line-height:24px;color:#000">16 Mbit/s</div>
<div class="t" style="left:1359.6px;top:1708.3px;font-size:24px;line-height:24px;color:#000;font-weight:bold">0</div>
<div class="t" style="left:1331.0px;top:1733.3px;font-size:24px;line-height:24px;color:#000;font-weight:bold">11:45:00</div>
<div class="t" style="left:1499.3px;top:1733.3px;font-size:24px;line-height:24px;color:#000">22:46:40</div>
<div class="t" style="left:1693.0px;top:1733.3px;font-size:24px;line-height:24px;color:#000;font-weight:bold">11:43:50</div>
<svg class="r" style="left:0px;top:0px" width="2512" height="1810" viewBox="0 0 2512 1810"><line x1="2012.3" y1="1402.5" x2="2373.5" y2="1402.5" stroke="#e0e0e0" stroke-width="2"/><line x1="2012.3" y1="1466.6" x2="2373.5" y2="1466.6" stroke="#e0e0e0" stroke-width="2"/><line x1="2012.3" y1="1530.3" x2="2373.5" y2="1530.3" stroke="#e0e0e0" stroke-width="2"/><line x1="2012.3" y1="1593.9" x2="2373.5" y2="1593.9" stroke="#e0e0e0" stroke-width="2"/><line x1="2012.3" y1="1657" x2="2373.5" y2="1657" stroke="#e0e0e0" stroke-width="2"/><line x1="2012.3" y1="1721.1" x2="2373.5" y2="1721.1" stroke="#e0e0e0" stroke-width="2"/><line x1="2177.7" y1="1341.8" x2="2177.7" y2="1721.1" stroke="#e0e0e0" stroke-width="2"/><path d="M2364.5 1721.1 L2367.4 1658 L2369.4 1403 L2372.6 1343.5 L2373.5 1343.5 L2373.5 1721.1 Z" fill="#ff7f0e" fill-opacity="0.7"/><line x1="2012.3" y1="1341.8" x2="2012.3" y2="1721.1" stroke="#333" stroke-width="2"/></svg>
<div class="t" style="left:1868.9px;top:1329.6px;font-size:24px;line-height:24px;color:#000;font-weight:bold">95.38 Mbit/s</div>
<div class="t" style="left:1907.6px;top:1389.9px;font-size:24px;line-height:24px;color:#000">80 Mbit/s</div>
<div class="t" style="left:1907.6px;top:1453.9px;font-size:24px;line-height:24px;color:#000">64 Mbit/s</div>
<div class="t" style="left:1907.6px;top:1517.6px;font-size:24px;line-height:24px;color:#000">48 Mbit/s</div>
<div class="t" style="left:1907.6px;top:1581.2px;font-size:24px;line-height:24px;color:#000">32 Mbit/s</div>
<div class="t" style="left:1907.6px;top:1644.3px;font-size:24px;line-height:24px;color:#000">16 Mbit/s</div>
<div class="t" style="left:1991.7px;top:1708.1px;font-size:24px;line-height:24px;color:#000;font-weight:bold">0</div>
<div class="t" style="left:1963.3px;top:1732.6px;font-size:24px;line-height:24px;color:#000;font-weight:bold">11:45:13</div>
<div class="t" style="left:2131.0px;top:1732.6px;font-size:24px;line-height:24px;color:#000">22:46:40</div>
<div class="t" style="left:2325.0px;top:1732.6px;font-size:24px;line-height:24px;color:#000;font-weight:bold">11:43:56</div>
</body></html>
